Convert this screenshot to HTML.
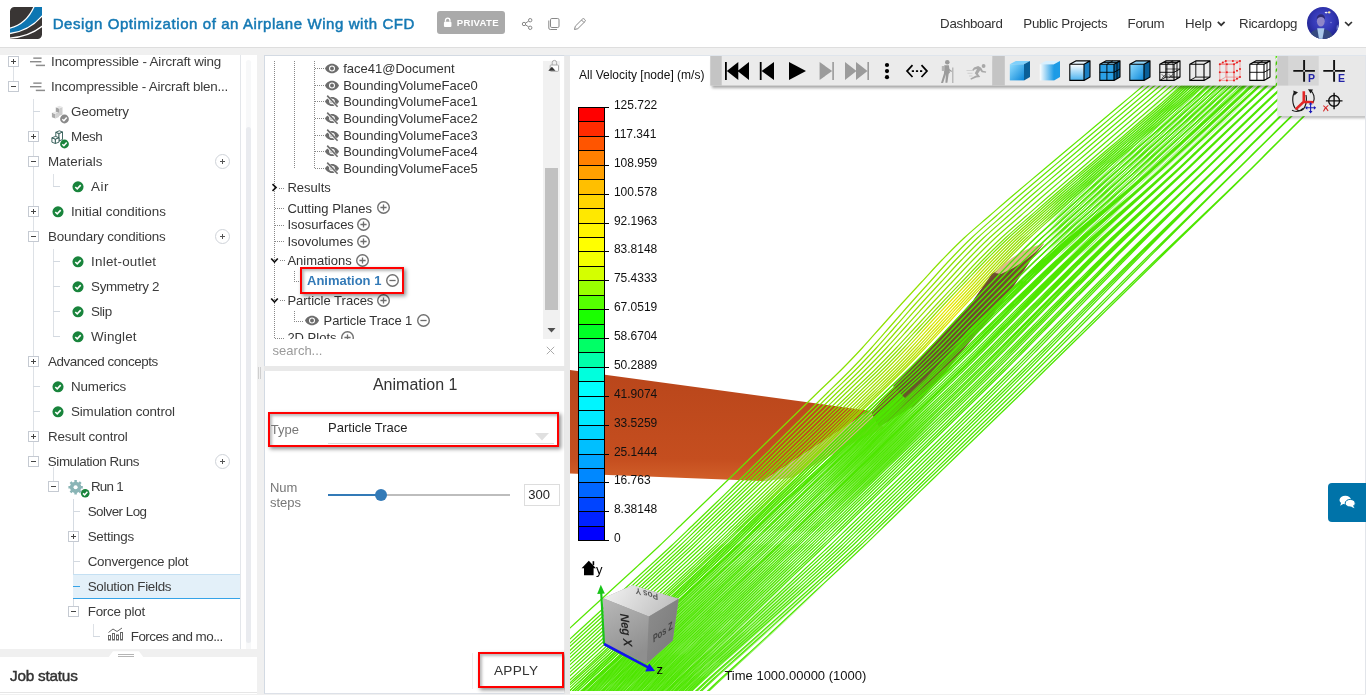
<!DOCTYPE html>
<html>
<head>
<meta charset="utf-8">
<title>Design Optimization of an Airplane Wing with CFD</title>
<style>
*{box-sizing:border-box;margin:0;padding:0}
html,body{width:1366px;height:695px;overflow:hidden;background:#f0f0f0;font-family:"Liberation Sans",sans-serif;color:#333}
.abs{position:absolute}
body>*{will-change:transform}
#hdr{position:absolute;left:0;top:0;width:1366px;height:48px;background:#fff;border-bottom:1px solid #dedede}
#title{position:absolute;left:52px;top:12px;font-size:16.3px;font-weight:bold;color:#1579b4;white-space:nowrap;letter-spacing:-0.35px}
#priv{position:absolute;left:437px;top:11px;width:68px;height:23px;background:#a9a9a9;border-radius:3px;color:#fff;font-size:9.5px;font-weight:bold;letter-spacing:.1px}
#priv span{position:absolute;left:20px;top:6px}
.nav{position:absolute;top:15px;font-size:13.6px;color:#333;white-space:nowrap;letter-spacing:-0.3px}
/* left panel */
#lp{position:absolute;left:0;top:55px;width:256.5px;height:594px;background:#fff;overflow:hidden}
#lp .vline{position:absolute;left:240px;top:0;width:1px;height:595px;background:#e3e6ea}
#lp .thumb{position:absolute;left:246px;top:72px;width:5px;height:516px;background:#e9ebef;border-radius:3px}
#lp .thumbtop{position:absolute;left:246px;top:5px;width:5px;height:600px;background:#f7f8f9;border-radius:3px}
.row{position:absolute;left:0;height:25px;width:240px;font-size:13.6px;color:#3a3a3a;white-space:nowrap;letter-spacing:-0.32px}
.row .t{position:absolute;top:4px}
.box{position:absolute;width:11px;height:11px;border:1px solid #c5cad2;background:#fff}
.box:before{content:"";position:absolute;left:2px;top:4px;width:5px;height:1px;background:#444}
.box.p:after{content:"";position:absolute;left:4px;top:2px;width:1px;height:5px;background:#444}
.chk{position:absolute;width:11px;height:11px;border-radius:50%;background:#19843c}
.chk svg{position:absolute;left:0;top:0}
.plus{position:absolute;left:215px;width:15px;height:15px;border:1px solid #cfd3d9;border-radius:50%;background:#fff}
.plus:before{content:"";position:absolute;left:4px;top:6px;width:5px;height:1px;background:#555}
.plus:after{content:"";position:absolute;left:6px;top:4px;width:1px;height:5px;background:#555}
.tl{position:absolute;background:#d5d9de}
#job{position:absolute;left:0;top:657px;width:257px;height:37px;background:#fff}
#job:after{content:"";position:absolute;left:0;top:35px;width:257px;height:1px;background:#e6e6e6}
#job span{position:absolute;left:10px;top:10px;font-size:14.6px;font-weight:bold;color:#333;letter-spacing:-0.3px}
/* middle panel */
#mp{position:absolute;left:264px;top:55px;width:301px;height:639px;background:#fff;border:1px solid #d3dae3;border-right-color:#ececec;border-bottom-color:#dde1e8}
#gap{position:absolute;left:565px;top:56px;width:5px;height:638px;background:#e9e9e9}
#topline{position:absolute;left:565px;top:55px;width:801px;height:1px;background:#dfe5ec}
#mp .sep{position:absolute;left:-1px;top:309px;width:301px;height:6px;background:#ececec}
.m{position:absolute;font-size:14px;color:#333;white-space:nowrap}
.dot-h{position:absolute;height:1px;background-image:linear-gradient(90deg,#888 50%,transparent 50%);background-size:2px 1px}
.dot-v{position:absolute;width:1px;background-image:linear-gradient(180deg,#888 50%,transparent 50%);background-size:1px 2px}
.redbox{position:absolute;border:2px solid #f00;box-shadow:2px 2px 4px rgba(0,0,0,.45),inset 2px 2px 3px rgba(0,0,0,.28)}
/* viewer */
#vw{position:absolute;left:570px;top:56px;width:796px;height:638px;background:#fff;overflow:hidden}
.lg{position:absolute;left:9px;font-size:12.3px;color:#111}
</style>
</head>
<body>
<div id="hdr">
<svg class="abs" style="left:10px;top:7px" width="32" height="32" viewBox="0 0 32 32">
<defs><clipPath id="lc"><path d="M4.5 0H32V27.5a4.5 4.5 0 0 1-4.5 4.5H0V4.5A4.5 4.5 0 0 1 4.5 0z"/></clipPath></defs>
<g clip-path="url(#lc)"><rect width="32" height="32" fill="#393534"/>
<path d="M-1 21.3 Q16.5 17.5 24.3 -1 H33 V8 Q19 24.5 -1 26.6 Z" fill="#0d76b2" stroke="#fff" stroke-width="1.3"/>
<path d="M-1 31.2 Q19 30 33 18.6" stroke="#fff" stroke-width="1.4" fill="none"/></g></svg>
<span style="position:absolute;left:52.70px;top:15px;font-size:15.0px;line-height:17px;color:#1579b4;white-space:nowrap;letter-spacing:0.583px;-webkit-text-stroke:.5px #1579b4;">Design Optimization of an Airplane Wing with CFD</span>
<div class="abs" style="left:437px;top:11px;width:68px;height:23px;background:#aaa;border-radius:3px"></div>
<svg class="abs" style="left:443px;top:16.6px" width="9.4" height="11.3" viewBox="0 0 10 12"><path d="M2.6 5V3.6a2.4 2.4 0 0 1 4.8 0V5" fill="none" stroke="#fff" stroke-width="1.4"/><rect x="1" y="5" width="8" height="5.6" rx="1" fill="#fff"/></svg>
<span style="position:absolute;left:456.80px;top:17px;font-size:9.6px;line-height:11px;font-weight:bold;color:#fff;white-space:nowrap;letter-spacing:0.270px;">PRIVATE</span>
<svg class="abs" style="left:520.3px;top:15.7px" width="16" height="16" viewBox="0 0 16 16" fill="none" stroke="#888" stroke-width="1"><circle cx="10.2" cy="4.2" r="1.7"/><circle cx="4" cy="8" r="1.7"/><circle cx="10.2" cy="11.8" r="1.7"/><path d="M5.5 7.1 8.7 5.1M5.5 8.9 8.7 10.9"/></svg>
<svg class="abs" style="left:546.3px;top:15.9px" width="16" height="16" viewBox="0 0 16 16" fill="none" stroke="#888" stroke-width="1"><rect x="4.5" y="2.5" width="8.5" height="9" rx="1.3"/><path d="M2.8 4.5V12a1.5 1.5 0 0 0 1.5 1.5H11"/></svg>
<svg class="abs" style="left:572.3px;top:15.7px" width="16" height="16" viewBox="0 0 16 16" fill="none" stroke="#888" stroke-width="1"><path d="M2.5 13.5l.8-3.3 7.2-7.2a1.2 1.2 0 0 1 1.7 0l.8.8a1.2 1.2 0 0 1 0 1.7l-7.2 7.2z M9.5 4l2.5 2.5"/></svg>
<span style="position:absolute;left:940.10px;top:16px;font-size:13.3px;line-height:15px;color:#333;white-space:nowrap;letter-spacing:-0.283px;">Dashboard</span>
<span style="position:absolute;left:1023.30px;top:16px;font-size:13.3px;line-height:15px;color:#333;white-space:nowrap;letter-spacing:-0.262px;">Public Projects</span>
<span style="position:absolute;left:1127.60px;top:16px;font-size:13.3px;line-height:15px;color:#333;white-space:nowrap;letter-spacing:-0.332px;">Forum</span>
<span style="position:absolute;left:1185.10px;top:16px;font-size:13.3px;line-height:15px;color:#333;white-space:nowrap;letter-spacing:-0.185px;">Help</span>
<svg class="abs" style="left:1216px;top:20px" width="11" height="8" viewBox="0 0 11 8"><path d="M1.8 1.8 5.2 5.2 8.6 1.8" fill="none" stroke="#333" stroke-width="1.7"/></svg>
<span style="position:absolute;left:1239.10px;top:16px;font-size:13.3px;line-height:15px;color:#333;white-space:nowrap;letter-spacing:-0.291px;">Ricardopg</span>
<svg class="abs" style="left:1307px;top:7px" width="32" height="32" viewBox="0 0 32 32"><defs><radialGradient id="av" cx=".5" cy=".42" r=".62"><stop offset="0" stop-color="#4a50cc"/><stop offset=".55" stop-color="#3337b4"/><stop offset="1" stop-color="#1c1f86"/></radialGradient><clipPath id="avc"><circle cx="16" cy="16" r="16"/></clipPath><filter id="avb"><feGaussianBlur stdDeviation=".7"/></filter></defs>
<g clip-path="url(#avc)"><rect width="32" height="32" fill="url(#av)"/><g filter="url(#avb)"><path d="M1 33C2 26 6 23.2 10 22.2L13.8 24.5 17.6 22.2C22 23 25.5 26 27 33z" fill="#354a80"/><path d="M10.2 21.2H17.4L15.3 33H12.2z" fill="#aac8e8"/><ellipse cx="13.8" cy="14.2" rx="3.9" ry="5.2" fill="#8f86c8"/><path d="M9.8 12.5C9.6 8.8 11.8 7.3 14 7.3s4.2 1.6 4 5.2c-.8-1.8-2-2.6-4-2.6s-3.4.8-4.2 2.600z" fill="#2d2c78"/><ellipse cx="19.2" cy="5.6" rx="1.5" ry=".8" fill="#fff" opacity=".9"/><ellipse cx="22.2" cy="5.4" rx="1.3" ry="1.1" fill="#f6e7a6"/><circle cx="24" cy="15.5" r=".8" fill="#7d82d8"/><ellipse cx="30.5" cy="21" rx="1" ry="3" fill="#6a78c8"/></g></g></svg>
<svg class="abs" style="left:1344px;top:20px" width="10" height="8" viewBox="0 0 10 8"><path d="M1.1 2 4.5 5.4 7.9 2" fill="none" stroke="#333" stroke-width="1.7"/></svg>
</div>
<div id="lp"><div class="vline"></div><div class="thumbtop"></div><div class="thumb"></div>
<div class="tl" style="left:13px;top:12.0px;width:1px;height:14.0px;background:#dde1e6"></div>
<div class="tl" style="left:33px;top:44.0px;width:1px;height:357.0px;background:#dde1e6"></div>
<div class="tl" style="left:53px;top:119.0px;width:1px;height:13.0px;background:#dde1e6"></div>
<div class="tl" style="left:53px;top:194.0px;width:1px;height:88.0px;background:#dde1e6"></div>
<div class="tl" style="left:73px;top:444.0px;width:1px;height:113.0px;background:#d5dbe2"></div>
<div class="tl" style="left:93px;top:569.0px;width:1px;height:13.0px;background:#dde1e6"></div>
<div class="tl" style="left:53px;top:412.0px;width:1px;height:14.0px;background:#dde1e6"></div>
<div class="abs" style="left:73px;top:519.0px;width:167px;height:25px;background:#e3f0f9;border-top:1px solid #c4e0f3;border-bottom:1px solid #35a3e8"></div>
<span style="position:absolute;left:51.10px;top:-1px;font-size:13.4px;line-height:15px;color:#3b3b3b;white-space:nowrap;letter-spacing:-0.162px;">Incompressible - Aircraft wing</span>
<span style="position:absolute;left:51.10px;top:24px;font-size:13.4px;line-height:15px;color:#3b3b3b;white-space:nowrap;letter-spacing:-0.208px;">Incompressible - Aircraft blen...</span>
<span style="position:absolute;left:71.10px;top:49px;font-size:13.4px;line-height:15px;color:#3b3b3b;white-space:nowrap;letter-spacing:-0.133px;">Geometry</span>
<span style="position:absolute;left:71.10px;top:74px;font-size:13.4px;line-height:15px;color:#3b3b3b;white-space:nowrap;letter-spacing:-0.356px;">Mesh</span>
<span style="position:absolute;left:47.90px;top:99px;font-size:13.4px;line-height:15px;color:#3b3b3b;white-space:nowrap;letter-spacing:0.042px;">Materials</span>
<span style="position:absolute;left:91.10px;top:124px;font-size:13.4px;line-height:15px;color:#3b3b3b;white-space:nowrap;letter-spacing:0.561px;">Air</span>
<span style="position:absolute;left:70.90px;top:149px;font-size:13.4px;line-height:15px;color:#3b3b3b;white-space:nowrap;letter-spacing:-0.020px;">Initial conditions</span>
<span style="position:absolute;left:47.90px;top:174px;font-size:13.4px;line-height:15px;color:#3b3b3b;white-space:nowrap;letter-spacing:-0.190px;">Boundary conditions</span>
<span style="position:absolute;left:91.10px;top:199px;font-size:13.4px;line-height:15px;color:#3b3b3b;white-space:nowrap;letter-spacing:0.221px;">Inlet-outlet</span>
<span style="position:absolute;left:91.10px;top:224px;font-size:13.4px;line-height:15px;color:#3b3b3b;white-space:nowrap;letter-spacing:-0.342px;">Symmetry 2</span>
<span style="position:absolute;left:91.10px;top:249px;font-size:13.4px;line-height:15px;color:#3b3b3b;white-space:nowrap;letter-spacing:-0.449px;">Slip</span>
<span style="position:absolute;left:91.10px;top:274px;font-size:13.4px;line-height:15px;color:#3b3b3b;white-space:nowrap;letter-spacing:0.120px;">Winglet</span>
<span style="position:absolute;left:47.90px;top:299px;font-size:13.4px;line-height:15px;color:#3b3b3b;white-space:nowrap;letter-spacing:-0.404px;">Advanced concepts</span>
<span style="position:absolute;left:71.00px;top:324px;font-size:13.4px;line-height:15px;color:#3b3b3b;white-space:nowrap;letter-spacing:-0.198px;">Numerics</span>
<span style="position:absolute;left:71.00px;top:349px;font-size:13.4px;line-height:15px;color:#3b3b3b;white-space:nowrap;letter-spacing:-0.142px;">Simulation control</span>
<span style="position:absolute;left:47.90px;top:374px;font-size:13.4px;line-height:15px;color:#3b3b3b;white-space:nowrap;letter-spacing:-0.148px;">Result control</span>
<span style="position:absolute;left:47.80px;top:399px;font-size:13.4px;line-height:15px;color:#3b3b3b;white-space:nowrap;letter-spacing:-0.412px;">Simulation Runs</span>
<span style="position:absolute;left:90.90px;top:424px;font-size:13.4px;line-height:15px;color:#3b3b3b;white-space:nowrap;letter-spacing:-0.740px;">Run 1</span>
<span style="position:absolute;left:87.70px;top:449px;font-size:13.4px;line-height:15px;color:#3b3b3b;white-space:nowrap;letter-spacing:-0.518px;">Solver Log</span>
<span style="position:absolute;left:87.70px;top:474px;font-size:13.4px;line-height:15px;color:#3b3b3b;white-space:nowrap;letter-spacing:-0.274px;">Settings</span>
<span style="position:absolute;left:87.70px;top:499px;font-size:13.4px;line-height:15px;color:#3b3b3b;white-space:nowrap;letter-spacing:-0.282px;">Convergence plot</span>
<span style="position:absolute;left:87.70px;top:524px;font-size:13.4px;line-height:15px;color:#3b3b3b;white-space:nowrap;letter-spacing:-0.285px;">Solution Fields</span>
<span style="position:absolute;left:87.70px;top:549px;font-size:13.4px;line-height:15px;color:#3b3b3b;white-space:nowrap;letter-spacing:-0.220px;">Force plot</span>
<span style="position:absolute;left:130.80px;top:574px;font-size:13.4px;line-height:15px;color:#3b3b3b;white-space:nowrap;letter-spacing:-0.536px;">Forces and mo...</span>
<div class="box p" style="left:8px;top:1.0px"></div>
<div class="box" style="left:8px;top:26.0px"></div>
<div class="box p" style="left:28px;top:76.0px"></div>
<div class="box" style="left:28px;top:101.0px"></div>
<div class="box p" style="left:28px;top:151.0px"></div>
<div class="box" style="left:28px;top:176.0px"></div>
<div class="box p" style="left:28px;top:301.0px"></div>
<div class="box p" style="left:28px;top:376.0px"></div>
<div class="box" style="left:28px;top:401.0px"></div>
<div class="box" style="left:48px;top:426.0px"></div>
<div class="box p" style="left:68px;top:476.0px"></div>
<div class="box" style="left:68px;top:551.0px"></div>
<svg class="abs" style="left:29px;top:0.5px" width="18" height="12" viewBox="0 0 18 12"><path d="M4.3 2.1H12.6M1 5.8H12.4" stroke="#5a5a5a" stroke-width="1"/><path d="M6.8 9.4H16" stroke="#8d8d8d" stroke-width="1.5"/></svg>
<svg class="abs" style="left:29px;top:25.5px" width="18" height="12" viewBox="0 0 18 12"><path d="M4.3 2.1H12.6M1 5.8H12.4" stroke="#5a5a5a" stroke-width="1"/><path d="M6.8 9.4H16" stroke="#8d8d8d" stroke-width="1.5"/></svg>
<div class="plus" style="top:99.0px"></div>
<div class="plus" style="top:174.0px"></div>
<div class="plus" style="top:399.0px"></div>
<svg class="abs" style="left:72px;top:125.5px" width="12" height="12" viewBox="0 0 12 12"><circle cx="6" cy="5.8" r="5.55" fill="#19843c"/><path d="M3.3 6 5.2 7.8 8.7 4.1" fill="none" stroke="#fff" stroke-width="1.6"/></svg>
<svg class="abs" style="left:52px;top:150.5px" width="12" height="12" viewBox="0 0 12 12"><circle cx="6" cy="5.8" r="5.55" fill="#19843c"/><path d="M3.3 6 5.2 7.8 8.7 4.1" fill="none" stroke="#fff" stroke-width="1.6"/></svg>
<svg class="abs" style="left:72px;top:200.5px" width="12" height="12" viewBox="0 0 12 12"><circle cx="6" cy="5.8" r="5.55" fill="#19843c"/><path d="M3.3 6 5.2 7.8 8.7 4.1" fill="none" stroke="#fff" stroke-width="1.6"/></svg>
<svg class="abs" style="left:72px;top:225.5px" width="12" height="12" viewBox="0 0 12 12"><circle cx="6" cy="5.8" r="5.55" fill="#19843c"/><path d="M3.3 6 5.2 7.8 8.7 4.1" fill="none" stroke="#fff" stroke-width="1.6"/></svg>
<svg class="abs" style="left:72px;top:250.5px" width="12" height="12" viewBox="0 0 12 12"><circle cx="6" cy="5.8" r="5.55" fill="#19843c"/><path d="M3.3 6 5.2 7.8 8.7 4.1" fill="none" stroke="#fff" stroke-width="1.6"/></svg>
<svg class="abs" style="left:72px;top:275.5px" width="12" height="12" viewBox="0 0 12 12"><circle cx="6" cy="5.8" r="5.55" fill="#19843c"/><path d="M3.3 6 5.2 7.8 8.7 4.1" fill="none" stroke="#fff" stroke-width="1.6"/></svg>
<svg class="abs" style="left:52px;top:325.5px" width="12" height="12" viewBox="0 0 12 12"><circle cx="6" cy="5.8" r="5.55" fill="#19843c"/><path d="M3.3 6 5.2 7.8 8.7 4.1" fill="none" stroke="#fff" stroke-width="1.6"/></svg>
<svg class="abs" style="left:52px;top:350.5px" width="12" height="12" viewBox="0 0 12 12"><circle cx="6" cy="5.8" r="5.55" fill="#19843c"/><path d="M3.3 6 5.2 7.8 8.7 4.1" fill="none" stroke="#fff" stroke-width="1.6"/></svg>
<div class="tl" style="left:33px;top:56.0px;width:7px;height:1px;background:#d3d9e0"></div>
<div class="tl" style="left:33px;top:331.0px;width:7px;height:1px;background:#d3d9e0"></div>
<div class="tl" style="left:33px;top:356.0px;width:7px;height:1px;background:#d3d9e0"></div>
<div class="tl" style="left:53px;top:131.0px;width:7px;height:1px;background:#d3d9e0"></div>
<div class="tl" style="left:53px;top:206.0px;width:7px;height:1px;background:#d3d9e0"></div>
<div class="tl" style="left:53px;top:231.0px;width:7px;height:1px;background:#d3d9e0"></div>
<div class="tl" style="left:53px;top:256.0px;width:7px;height:1px;background:#d3d9e0"></div>
<div class="tl" style="left:53px;top:281.0px;width:7px;height:1px;background:#d3d9e0"></div>
<div class="tl" style="left:73px;top:456.0px;width:7px;height:1px;background:#d3d9e0"></div>
<div class="tl" style="left:73px;top:506.0px;width:7px;height:1px;background:#d3d9e0"></div>
<div class="tl" style="left:73px;top:531.0px;width:7px;height:1px;background:#35a3e8"></div>
<div class="tl" style="left:93px;top:581.0px;width:7px;height:1px;background:#d3d9e0"></div>
<svg class="abs" style="left:51px;top:46.5px" width="20" height="23" viewBox="0 0 20 23">
<path d="M4.8 5.3 8 6.5V14L4.8 12.8z" fill="#a3a3a3"/><path d="M8 6.5 11.5 5V12.5L8 14z" fill="#cdcdcd"/><path d="M4.8 5.3 8.3 3.8 11.5 5 8 6.5z" fill="#e6e6e6"/>
<path d="M.9 10.8 4.4 12.1V16.5L.9 15.2z" fill="#ababab"/><path d="M4.4 12.1 8 10.7V15.1L4.4 16.5z" fill="#d2d2d2"/><path d="M.9 10.8 4.5 9.4 8 10.7 4.4 12.1z" fill="#e9e9e9"/>
<circle cx="13.5" cy="17" r="4.4" fill="#8a8a8a"/><path d="M11.3 17.2 12.9 18.7 15.7 15.5" fill="none" stroke="#fff" stroke-width="1.5"/></svg>
<svg class="abs" style="left:51px;top:71.5px" width="20" height="23" viewBox="0 0 20 23">
<g fill="#fff" stroke="#2f5953" stroke-width=".9" stroke-linejoin="round"><path d="M4.8 5.3 8 6.5V14L4.8 12.8z"/><path d="M8 6.5 11.5 5V12.5L8 14z"/><path d="M4.8 5.3 8.3 3.8 11.5 5 8 6.5z"/><path d="M.9 10.8 4.4 12.1V16.5L.9 15.2z"/><path d="M4.4 12.1 8 10.7V15.1L4.4 16.5z"/><path d="M.9 10.8 4.5 9.4 8 10.7 4.4 12.1z"/></g>
<circle cx="13.5" cy="17" r="4.4" fill="#19843c"/><path d="M11.3 17.2 12.9 18.7 15.7 15.5" fill="none" stroke="#fff" stroke-width="1.5"/></svg>
<svg class="abs" style="left:67px;top:421.5px" width="24" height="22" viewBox="0 0 24 22">
<g transform="translate(8.6,10.3) scale(.9)"><circle r="4.7" fill="none" stroke="#8ab5b6" stroke-width="3.2"/><g stroke="#8ab5b6" stroke-width="2.8"><path d="M0 -8V8M-8 0H8M-5.7 -5.7 5.7 5.7M-5.7 5.7 5.7 -5.7"/></g><circle r="2.3" fill="#fff"/><circle r="4.4" fill="none" stroke="#8ab5b6" stroke-width="2.6"/></g>
<circle cx="18.2" cy="16.2" r="4.3" fill="#19843c"/><path d="M16 16.4 17.6 17.9 20.4 14.7" fill="none" stroke="#fff" stroke-width="1.5"/></svg>
<svg class="abs" style="left:107px;top:572.2px" width="17" height="14" viewBox="0 0 17 14" fill="none" stroke="#666" stroke-width="1">
<rect x="1.5" y="8.5" width="2" height="4.5"/><rect x="5.5" y="6.5" width="2" height="6.5"/><rect x="9.5" y="8" width="2" height="5"/><rect x="13.5" y="5.5" width="2" height="7.5"/><path d="M1.5 5.5 6 2 10 4.5 15 1"/></svg>
</div>
<svg class="abs" style="left:108px;top:650px" width="36" height="8" viewBox="0 0 36 8"><path d="M0 8 5 1.2H31L36 8z" fill="#fff"/><path d="M10 4.5H26M10 6.500H26" stroke="#b5b5b5" stroke-width="1" shape-rendering="crispEdges"/></svg>
<div id="job"></div>
<span style="position:absolute;left:9.90px;top:667px;font-size:15.3px;line-height:17px;color:#333;white-space:nowrap;letter-spacing:-0.215px;-webkit-text-stroke:.45px #333;">Job status</span>
<div id="mp">
<div class="abs" style="left:0;top:0;width:299px;height:282.5px;overflow:hidden">
<div class="dot-v" style="left:9px;top:5.0px;height:279.0px"></div>
<div class="dot-v" style="left:29px;top:5.0px;height:107.0px"></div>
<div class="dot-v" style="left:49px;top:5.0px;height:108.0px"></div>
<div class="dot-h" style="left:50px;top:11.9px;width:10px"></div>
<svg class="abs" style="left:60px;top:6.5px;overflow:visible" width="14" height="11" viewBox="0 0 14 11"><path d="M7 .7C3.4 .7 .9 3.3 0 5.500 .9 7.700 3.400 10.300 7 10.300s6.100-2.600 7-4.800C13.100 3.300 10.600 .700 7 .700z" fill="#6c6c6c"/><circle cx="7" cy="5.500" r="3" fill="#fff"/><circle cx="7" cy="5.500" r="1.900" fill="#6c6c6c"/></svg>
<span style="position:absolute;left:78.20px;top:5px;font-size:13px;line-height:15px;color:#333;white-space:nowrap;">face41@Document</span>
<div class="dot-h" style="left:50px;top:28.9px;width:10px"></div>
<svg class="abs" style="left:60px;top:23.5px;overflow:visible" width="14" height="11" viewBox="0 0 14 11"><path d="M7 .7C3.4 .7 .9 3.3 0 5.500 .9 7.700 3.400 10.300 7 10.300s6.100-2.600 7-4.800C13.100 3.300 10.600 .700 7 .700z" fill="#6c6c6c"/><circle cx="7" cy="5.500" r="3" fill="#fff"/><circle cx="7" cy="5.500" r="1.900" fill="#6c6c6c"/></svg>
<span style="position:absolute;left:78.20px;top:22px;font-size:13px;line-height:15px;color:#333;white-space:nowrap;">BoundingVolumeFace0</span>
<div class="dot-h" style="left:50px;top:44.9px;width:10px"></div>
<svg class="abs" style="left:60px;top:39.5px;overflow:visible" width="14" height="11" viewBox="0 0 14 11"><path d="M7 1C3.400 1 .900 3.500 0 5.500 .900 7.500 3.400 10 7 10s6.100-2.500 7-4.500C13.100 3.500 10.600 1 7 1z" fill="#6c6c6c"/><circle cx="7" cy="5.500" r="2.800" fill="#fff"/><circle cx="7" cy="5.500" r="1.700" fill="#6c6c6c"/><path d="M1.300 -.800 13 11.400" stroke="#fff" stroke-width="2.800"/><path d="M2.200 -.400 12.600 10.800" stroke="#6c6c6c" stroke-width="1.600"/></svg>
<span style="position:absolute;left:78.20px;top:38px;font-size:13px;line-height:15px;color:#333;white-space:nowrap;">BoundingVolumeFace1</span>
<div class="dot-h" style="left:50px;top:61.9px;width:10px"></div>
<svg class="abs" style="left:60px;top:56.5px;overflow:visible" width="14" height="11" viewBox="0 0 14 11"><path d="M7 1C3.400 1 .900 3.500 0 5.500 .900 7.500 3.400 10 7 10s6.100-2.500 7-4.500C13.100 3.500 10.600 1 7 1z" fill="#6c6c6c"/><circle cx="7" cy="5.500" r="2.800" fill="#fff"/><circle cx="7" cy="5.500" r="1.700" fill="#6c6c6c"/><path d="M1.300 -.800 13 11.400" stroke="#fff" stroke-width="2.800"/><path d="M2.200 -.400 12.600 10.800" stroke="#6c6c6c" stroke-width="1.600"/></svg>
<span style="position:absolute;left:78.20px;top:55px;font-size:13px;line-height:15px;color:#333;white-space:nowrap;">BoundingVolumeFace2</span>
<div class="dot-h" style="left:50px;top:78.9px;width:10px"></div>
<svg class="abs" style="left:60px;top:73.5px;overflow:visible" width="14" height="11" viewBox="0 0 14 11"><path d="M7 1C3.400 1 .900 3.500 0 5.500 .900 7.500 3.400 10 7 10s6.100-2.500 7-4.500C13.100 3.500 10.600 1 7 1z" fill="#6c6c6c"/><circle cx="7" cy="5.500" r="2.800" fill="#fff"/><circle cx="7" cy="5.500" r="1.700" fill="#6c6c6c"/><path d="M1.300 -.800 13 11.400" stroke="#fff" stroke-width="2.800"/><path d="M2.200 -.400 12.600 10.800" stroke="#6c6c6c" stroke-width="1.600"/></svg>
<span style="position:absolute;left:78.20px;top:72px;font-size:13px;line-height:15px;color:#333;white-space:nowrap;">BoundingVolumeFace3</span>
<div class="dot-h" style="left:50px;top:94.9px;width:10px"></div>
<svg class="abs" style="left:60px;top:89.5px;overflow:visible" width="14" height="11" viewBox="0 0 14 11"><path d="M7 1C3.400 1 .900 3.500 0 5.500 .900 7.500 3.400 10 7 10s6.100-2.500 7-4.500C13.100 3.500 10.600 1 7 1z" fill="#6c6c6c"/><circle cx="7" cy="5.500" r="2.800" fill="#fff"/><circle cx="7" cy="5.500" r="1.700" fill="#6c6c6c"/><path d="M1.300 -.800 13 11.400" stroke="#fff" stroke-width="2.800"/><path d="M2.200 -.400 12.600 10.800" stroke="#6c6c6c" stroke-width="1.600"/></svg>
<span style="position:absolute;left:78.20px;top:88px;font-size:13px;line-height:15px;color:#333;white-space:nowrap;">BoundingVolumeFace4</span>
<div class="dot-h" style="left:50px;top:111.9px;width:10px"></div>
<svg class="abs" style="left:60px;top:106.5px;overflow:visible" width="14" height="11" viewBox="0 0 14 11"><path d="M7 1C3.400 1 .900 3.500 0 5.500 .900 7.500 3.400 10 7 10s6.100-2.500 7-4.500C13.100 3.500 10.600 1 7 1z" fill="#6c6c6c"/><circle cx="7" cy="5.500" r="2.800" fill="#fff"/><circle cx="7" cy="5.500" r="1.700" fill="#6c6c6c"/><path d="M1.300 -.800 13 11.400" stroke="#fff" stroke-width="2.800"/><path d="M2.200 -.400 12.600 10.800" stroke="#6c6c6c" stroke-width="1.600"/></svg>
<span style="position:absolute;left:78.20px;top:105px;font-size:13px;line-height:15px;color:#333;white-space:nowrap;">BoundingVolumeFace5</span>
<svg class="abs" style="left:5.8px;top:127.1px" width="7" height="9" viewBox="0 0 7 9"><path d="M1.5 1.2 5 4.5 1.5 7.8" fill="none" stroke="#111" stroke-width="1.7"/></svg>
<div class="dot-h" style="left:14px;top:131.5px;width:6px"></div>
<span style="position:absolute;left:22.40px;top:124px;font-size:13px;line-height:15px;color:#333;white-space:nowrap;">Results</span>
<div class="dot-h" style="left:10px;top:152.0px;width:10px"></div>
<span style="position:absolute;left:22.40px;top:145px;font-size:13px;line-height:15px;color:#333;white-space:nowrap;">Cutting Planes</span>
<svg class="abs" style="left:111.5px;top:145.4px" width="13" height="13" viewBox="0 0 13 13"><circle cx="6.5" cy="6.5" r="5.8" fill="#fff" stroke="#707070" stroke-width="1.4"/><path d="M3.4 6.5H9.6M6.5 3.4V9.6" stroke="#6e6e6e" stroke-width="1.3"/></svg>
<div class="dot-h" style="left:10px;top:168.5px;width:10px"></div>
<span style="position:absolute;left:22.40px;top:161px;font-size:13px;line-height:15px;color:#333;white-space:nowrap;">Isosurfaces</span>
<svg class="abs" style="left:92.4px;top:162.2px" width="13" height="13" viewBox="0 0 13 13"><circle cx="6.5" cy="6.5" r="5.8" fill="#fff" stroke="#707070" stroke-width="1.4"/><path d="M3.4 6.5H9.6M6.5 3.4V9.6" stroke="#6e6e6e" stroke-width="1.3"/></svg>
<div class="dot-h" style="left:10px;top:185.0px;width:10px"></div>
<span style="position:absolute;left:22.40px;top:178px;font-size:13px;line-height:15px;color:#333;white-space:nowrap;">Isovolumes</span>
<svg class="abs" style="left:92.4px;top:178.5px" width="13" height="13" viewBox="0 0 13 13"><circle cx="6.5" cy="6.5" r="5.8" fill="#fff" stroke="#707070" stroke-width="1.4"/><path d="M3.4 6.5H9.6M6.5 3.4V9.6" stroke="#6e6e6e" stroke-width="1.3"/></svg>
<svg class="abs" style="left:5.0px;top:200.8px" width="9" height="7" viewBox="0 0 9 7"><path d="M1.2 1.5 4.5 5 7.8 1.5" fill="none" stroke="#111" stroke-width="1.7"/></svg>
<div class="dot-h" style="left:15px;top:204.0px;width:5px"></div>
<span style="position:absolute;left:22.40px;top:197px;font-size:13px;line-height:15px;color:#333;white-space:nowrap;">Animations</span>
<svg class="abs" style="left:90.6px;top:197.6px" width="13" height="13" viewBox="0 0 13 13"><circle cx="6.5" cy="6.5" r="5.8" fill="#fff" stroke="#707070" stroke-width="1.4"/><path d="M3.4 6.5H9.6M6.5 3.4V9.6" stroke="#6e6e6e" stroke-width="1.3"/></svg>
<div class="dot-v" style="left:29px;top:215.0px;height:10.0px"></div>
<div class="dot-h" style="left:29px;top:225.0px;width:6px"></div>
<span style="position:absolute;left:42.00px;top:217px;font-size:13px;line-height:15px;font-weight:bold;color:#337ab7;white-space:nowrap;">Animation 1</span>
<svg class="abs" style="left:120.6px;top:217.8px" width="13" height="13" viewBox="0 0 13 13"><circle cx="6.5" cy="6.5" r="5.8" fill="#fff" stroke="#707070" stroke-width="1.4"/><path d="M3.4 6.5H9.6" stroke="#6e6e6e" stroke-width="1.3"/></svg>
<svg class="abs" style="left:5.0px;top:240.8px" width="9" height="7" viewBox="0 0 9 7"><path d="M1.2 1.5 4.5 5 7.8 1.5" fill="none" stroke="#111" stroke-width="1.7"/></svg>
<div class="dot-h" style="left:15px;top:244.0px;width:5px"></div>
<span style="position:absolute;left:22.40px;top:237px;font-size:13px;line-height:15px;color:#333;white-space:nowrap;">Particle Traces</span>
<svg class="abs" style="left:112.3px;top:237.5px" width="13" height="13" viewBox="0 0 13 13"><circle cx="6.5" cy="6.5" r="5.8" fill="#fff" stroke="#707070" stroke-width="1.4"/><path d="M3.4 6.5H9.6M6.5 3.4V9.6" stroke="#6e6e6e" stroke-width="1.3"/></svg>
<div class="dot-v" style="left:29px;top:255.0px;height:10.0px"></div>
<div class="dot-h" style="left:29px;top:265.0px;width:10px"></div>
<svg class="abs" style="left:40px;top:258.8px;overflow:visible" width="14" height="11" viewBox="0 0 14 11"><path d="M7 .7C3.4 .7 .9 3.3 0 5.500 .9 7.700 3.400 10.300 7 10.300s6.100-2.600 7-4.800C13.100 3.300 10.600 .700 7 .700z" fill="#6c6c6c"/><circle cx="7" cy="5.500" r="3" fill="#fff"/><circle cx="7" cy="5.500" r="1.900" fill="#6c6c6c"/></svg>
<span style="position:absolute;left:58.60px;top:257px;font-size:13px;line-height:15px;color:#333;white-space:nowrap;letter-spacing:-0.108px;">Particle Trace 1</span>
<svg class="abs" style="left:152.4px;top:257.8px" width="13" height="13" viewBox="0 0 13 13"><circle cx="6.5" cy="6.5" r="5.8" fill="#fff" stroke="#707070" stroke-width="1.4"/><path d="M3.4 6.5H9.6" stroke="#6e6e6e" stroke-width="1.3"/></svg>
<div class="dot-h" style="left:10px;top:282.0px;width:10px"></div>
<span style="position:absolute;left:22.40px;top:274px;font-size:13px;line-height:15px;color:#333;white-space:nowrap;">2D Plots</span>
<svg class="abs" style="left:76.0px;top:275.3px" width="13" height="13" viewBox="0 0 13 13"><circle cx="6.5" cy="6.5" r="5.8" fill="#fff" stroke="#707070" stroke-width="1.4"/><path d="M3.4 6.5H9.6M6.5 3.4V9.6" stroke="#6e6e6e" stroke-width="1.3"/></svg>
</div>
<div class="redbox" style="left:35px;top:211px;width:104px;height:27px"></div>
<div class="abs" style="left:278px;top:5px;width:17px;height:278px;background:#f1f1f1"></div>
<div class="abs" style="left:280px;top:112px;width:13px;height:142px;background:#c1c1c1"></div>
<svg class="abs" style="left:282px;top:271px" width="9" height="6" viewBox="0 0 9 6"><path d="M.5 1H8.5L4.5 5.5z" fill="#505050"/></svg>
<svg class="abs" style="left:282px;top:3px" width="14" height="14" viewBox="0 0 14 14"><path d="M5.2 6V3.6a2.2 2.2 0 0 1 4.4 0V6" fill="none" stroke="#aaa" stroke-width="1"/><rect x="3.2" y="6" width="8.3" height="6.3" rx=".8" fill="#fff" stroke="#aaa" stroke-width="1"/><path d="M1.3 11.8H8.5L4.9 7.8z" fill="#333"/></svg>
<span style="position:absolute;left:7.60px;top:287px;font-size:13px;line-height:15px;color:#9a9a9a;white-space:nowrap;">search...</span>
<svg class="abs" style="left:280.5px;top:289.5px" width="9" height="9" viewBox="0 0 9 9"><path d="M.8.8 8.2 8.2M8.2.8.8 8.2" stroke="#aaa" stroke-width="1"/></svg>
<div class="abs" style="left:-1px;top:310px;width:301px;height:5px;background:#e9e9e9"></div>
<span style="position:absolute;left:107.95px;top:320px;font-size:16px;line-height:17px;color:#333;white-space:nowrap;">Animation 1</span>
<div class="redbox" style="left:3px;top:356px;width:290.5px;height:35px"></div>
<span style="position:absolute;left:5.70px;top:366px;font-size:13px;line-height:15px;color:#777;white-space:nowrap;">Type</span>
<span style="position:absolute;left:63.10px;top:364px;font-size:13px;line-height:15px;color:#222;white-space:nowrap;">Particle Trace</span>
<div class="abs" style="left:63px;top:387px;width:226px;height:1px;background:#dcdcdc"></div>
<svg class="abs" style="left:270px;top:377px" width="14" height="8" viewBox="0 0 14 8"><path d="M0 0H14L7 7.4z" fill="#e0e0e0"/></svg>
<span style="position:absolute;left:4.90px;top:424px;font-size:13px;line-height:15px;color:#777;white-space:nowrap;">Num</span>
<span style="position:absolute;left:4.90px;top:439px;font-size:13px;line-height:15px;color:#777;white-space:nowrap;">steps</span>
<div class="abs" style="left:63px;top:438px;width:182px;height:2px;background:#bdbdbd"></div>
<div class="abs" style="left:63px;top:438px;width:53px;height:2px;background:#337ab7"></div>
<div class="abs" style="left:109.69999999999999px;top:432.7px;width:12.6px;height:12.6px;border-radius:50%;background:#337ab7"></div>
<div class="abs" style="left:259px;top:427.5px;width:36px;height:22.5px;border:1px solid #ddd;background:#fff"></div>
<span style="position:absolute;left:263.20px;top:431px;font-size:13px;line-height:15px;color:#222;white-space:nowrap;">300</span>
<div class="abs" style="left:207px;top:597px;width:1px;height:36px;background:#eee"></div>
<div class="redbox" style="left:213px;top:595.5px;width:86px;height:36px"></div>
<span style="position:absolute;left:229.00px;top:607px;font-size:13.6px;line-height:15px;color:#333;white-space:nowrap;letter-spacing:0.290px;">APPLY</span>
</div>
<div class="abs" style="left:258px;top:367px;width:1px;height:12px;background:#cfcfcf"></div><div class="abs" style="left:260px;top:367px;width:1px;height:12px;background:#cfcfcf"></div>
<div id="gap"></div><div id="topline"></div>
<div id="vw">
<svg class="abs" style="left:0;top:0" width="796" height="635" viewBox="570 56 796 635">
<defs>
<linearGradient id="wg" x1="0" y1="0" x2="0" y2="1"><stop offset="0" stop-color="#b9461b"/><stop offset=".8" stop-color="#c54e1f"/><stop offset="1" stop-color="#d2602a"/></linearGradient>
<linearGradient id="yl" gradientUnits="userSpaceOnUse" x1="730" y1="490" x2="1080" y2="190"><stop offset="0" stop-color="#55e600"/><stop offset=".15" stop-color="#84e000"/><stop offset=".45" stop-color="#a8e000"/><stop offset=".62" stop-color="#e8e600"/><stop offset=".78" stop-color="#a0e000"/><stop offset="1" stop-color="#55e600"/></linearGradient>
<linearGradient id="lm" gradientUnits="userSpaceOnUse" x1="730" y1="490" x2="1080" y2="190"><stop offset="0" stop-color="#55e600"/><stop offset=".15" stop-color="#80e000"/><stop offset=".6" stop-color="#92e000"/><stop offset="1" stop-color="#5ee600"/></linearGradient>
<linearGradient id="mg" gradientUnits="userSpaceOnUse" x1="760" y1="520" x2="640" y2="660"><stop offset="0" stop-color="#000"/><stop offset="1" stop-color="#fff"/></linearGradient>
<mask id="mk" maskUnits="userSpaceOnUse" x="560" y="480" width="320" height="220"><rect x="560" y="480" width="320" height="220" fill="url(#mg)"/></mask>
<filter id="b6" x="-20%" y="-20%" width="140%" height="140%"><feGaussianBlur stdDeviation="5"/></filter>
<mask id="wm" maskUnits="userSpaceOnUse" x="1000" y="40" width="330" height="260"><path d="M1052 252 1056 205 1104 158 1143 126 1174 90 1200 50H1282L1226 120 1130 190 1092 252z" fill="#fff" filter="url(#b6)"/></mask>
<radialGradient id="mg2" gradientUnits="userSpaceOnUse" cx="868" cy="440" r="80"><stop offset="0" stop-color="#fff"/><stop offset=".5" stop-color="#bbb"/><stop offset="1" stop-color="#000"/></radialGradient>
<mask id="mk2" maskUnits="userSpaceOnUse" x="760" y="290" width="270" height="270"><rect x="760" y="290" width="270" height="270" fill="url(#mg2)"/></mask>
<pattern id="hw" width="2.1" height="8" patternUnits="userSpaceOnUse" patternTransform="rotate(46.5)"><rect x="0" y="0" width="1.05" height="8" fill="#4ee600"/></pattern>
</defs>
<path d="M570 370.1 869.6 410.7 763 481 570 473.5z" fill="url(#wg)"/>
<path d="M762 481.5 869.6 410.2 884 428 847 446 793 477.5z" fill="#cdb07a" opacity=".9"/>
<path d="M1044 243.4 1031 260 1009.5 292.6 992 316 966 346.6 940 379 914 406 879 427 871 412 901.6 379 923 355 951 325 972.8 301 992 274z" fill="#74502f"/>
<path d="M571.4 700.0C575.3 696.3 587.1 685.3 595.0 678.0C602.9 670.7 610.9 663.3 618.8 656.0C626.7 648.7 634.6 641.3 642.5 634.0C650.3 626.7 658.2 619.3 666.0 612.0C673.9 604.7 681.7 597.3 689.6 590.0C697.5 582.7 705.4 575.3 713.3 568.0C721.2 560.7 729.1 553.3 736.9 546.0C744.6 538.7 752.1 531.3 759.7 524.0C767.3 516.7 774.7 509.3 782.5 502.0C790.3 494.7 798.4 487.3 806.3 480.0C814.2 472.7 822.1 465.3 830.1 458.0C838.0 450.7 845.9 443.3 853.8 436.0C861.7 428.7 869.6 421.3 877.5 414.0C885.4 406.7 893.4 399.3 901.3 392.0C909.2 384.7 917.3 377.3 925.0 370.0C932.8 362.7 940.3 355.3 947.7 348.0C955.2 340.7 962.3 333.3 969.6 326.0C976.9 318.7 984.1 311.3 991.5 304.0C998.9 296.7 1006.3 289.3 1013.8 282.0C1021.2 274.7 1028.5 267.3 1036.1 260.0C1043.8 252.7 1051.5 245.3 1059.6 238.0C1067.7 230.7 1076.3 223.3 1084.7 216.0C1093.1 208.7 1101.5 201.3 1109.9 194.0C1118.3 186.7 1126.6 179.3 1134.9 172.0C1143.1 164.7 1151.3 157.3 1159.5 150.0C1167.7 142.7 1176.0 135.3 1184.2 128.0C1192.4 120.7 1200.6 113.3 1208.7 106.0C1216.8 98.7 1225.0 91.3 1233.1 84.0C1241.1 76.7 1249.1 69.3 1257.2 62.0C1265.2 54.7 1277.3 43.7 1281.3 40.0M573.4 700.0C577.3 696.3 589.0 685.3 596.9 678.0C604.8 670.7 612.9 663.3 620.8 656.0C628.7 648.7 636.6 641.3 644.5 634.0C652.4 626.7 660.2 619.3 668.1 612.0C676.0 604.7 683.8 597.3 691.7 590.0C699.6 582.7 707.5 575.3 715.4 568.0C723.3 560.7 731.3 553.3 739.0 546.0C746.7 538.7 754.2 531.3 761.8 524.0C769.4 516.7 776.8 509.3 784.6 502.0C792.4 494.7 800.7 487.3 808.7 480.0C816.7 472.7 824.7 465.3 832.7 458.0C840.7 450.7 848.7 443.3 856.8 436.0C864.8 428.7 872.8 421.3 880.8 414.0C888.8 406.7 896.8 399.3 904.9 392.0C912.9 384.7 921.1 377.3 928.9 370.0C936.7 362.7 944.4 355.3 951.9 348.0C959.5 340.7 966.7 333.3 974.1 326.0C981.6 318.7 988.9 311.3 996.4 304.0C1003.9 296.7 1011.5 289.3 1019.0 282.0C1026.6 274.7 1034.0 267.3 1041.8 260.0C1049.5 252.7 1057.4 245.3 1065.5 238.0C1073.7 230.7 1082.4 223.3 1090.9 216.0C1099.4 208.7 1107.9 201.3 1116.3 194.0C1124.7 186.7 1133.0 179.3 1141.3 172.0C1149.5 164.7 1157.5 157.3 1165.7 150.0C1173.8 142.7 1182.0 135.3 1190.1 128.0C1198.2 120.7 1206.3 113.3 1214.4 106.0C1222.5 98.7 1230.6 91.3 1238.7 84.0C1246.7 76.7 1254.7 69.3 1262.7 62.0C1270.7 54.7 1282.8 43.7 1286.8 40.0M576.9 700.0C580.9 696.3 592.6 685.3 600.5 678.0C608.4 670.7 616.4 663.3 624.3 656.0C632.2 648.7 640.0 641.3 647.8 634.0C655.6 626.7 663.4 619.3 671.2 612.0C679.0 604.7 686.8 597.3 694.7 590.0C702.5 582.7 710.4 575.3 718.2 568.0C726.1 560.7 734.1 553.3 741.8 546.0C749.5 538.7 757.0 531.3 764.6 524.0C772.2 516.7 779.8 509.3 787.4 502.0C795.0 494.7 802.7 487.3 810.3 480.0C818.0 472.7 825.7 465.3 833.4 458.0C841.1 450.7 848.8 443.3 856.6 436.0C864.4 428.7 872.3 421.3 880.1 414.0C888.0 406.7 896.0 399.3 903.9 392.0C911.9 384.7 920.0 377.3 927.9 370.0C935.7 362.7 943.4 355.3 951.1 348.0C958.7 340.7 966.1 333.3 973.6 326.0C981.2 318.7 988.8 311.3 996.5 304.0C1004.2 296.7 1012.1 289.3 1020.0 282.0C1027.8 274.7 1035.6 267.3 1043.7 260.0C1051.9 252.7 1060.1 245.3 1068.8 238.0C1077.4 230.7 1086.6 223.3 1095.6 216.0C1104.5 208.7 1113.8 201.3 1122.6 194.0C1131.3 186.7 1139.8 179.3 1148.1 172.0C1156.4 164.7 1164.3 157.3 1172.4 150.0C1180.5 142.7 1188.6 135.3 1196.6 128.0C1204.7 120.7 1212.8 113.3 1220.8 106.0C1228.9 98.7 1237.0 91.3 1245.0 84.0C1253.0 76.7 1260.9 69.3 1268.9 62.0C1276.9 54.7 1288.8 43.7 1292.8 40.0M579.2 700.0C583.2 696.3 594.9 685.3 602.8 678.0C610.7 670.7 618.7 663.3 626.6 656.0C634.6 648.7 642.4 641.3 650.3 634.0C658.2 626.7 666.0 619.3 673.8 612.0C681.7 604.7 689.5 597.3 697.4 590.0C705.3 582.7 713.2 575.3 721.0 568.0C728.9 560.7 736.9 553.3 744.6 546.0C752.3 538.7 759.8 531.3 767.4 524.0C775.0 516.7 782.6 509.3 790.2 502.0C797.8 494.7 805.5 487.3 813.1 480.0C820.8 472.7 828.4 465.3 836.1 458.0C843.8 450.7 851.6 443.3 859.3 436.0C867.1 428.7 874.9 421.3 882.8 414.0C890.6 406.7 898.5 399.3 906.4 392.0C914.4 384.7 922.5 377.3 930.3 370.0C938.1 362.7 945.7 355.3 953.3 348.0C960.9 340.7 968.2 333.3 975.7 326.0C983.3 318.7 990.8 311.3 998.4 304.0C1006.1 296.7 1013.9 289.3 1021.7 282.0C1029.5 274.7 1037.2 267.3 1045.2 260.0C1053.3 252.7 1061.5 245.3 1070.0 238.0C1078.5 230.7 1087.6 223.3 1096.5 216.0C1105.4 208.7 1114.5 201.3 1123.2 194.0C1131.9 186.7 1140.3 179.3 1148.6 172.0C1156.9 164.7 1164.8 157.3 1172.8 150.0C1180.9 142.7 1189.0 135.3 1197.1 128.0C1205.2 120.7 1213.2 113.3 1221.3 106.0C1229.3 98.7 1237.4 91.3 1245.4 84.0C1253.4 76.7 1261.3 69.3 1269.3 62.0C1277.3 54.7 1289.2 43.7 1293.2 40.0M581.9 700.0C585.9 696.3 597.6 685.3 605.5 678.0C613.4 670.7 621.4 663.3 629.4 656.0C637.3 648.7 645.2 641.3 653.1 634.0C661.0 626.7 668.9 619.3 676.8 612.0C684.6 604.7 692.5 597.3 700.4 590.0C708.3 582.7 716.2 575.3 724.1 568.0C732.0 560.7 740.0 553.3 747.7 546.0C755.4 538.7 762.9 531.3 770.5 524.0C778.1 516.7 785.7 509.3 793.3 502.0C800.9 494.7 808.6 487.3 816.2 480.0C823.9 472.7 831.5 465.3 839.2 458.0C846.9 450.7 854.6 443.3 862.3 436.0C870.1 428.7 877.8 421.3 885.7 414.0C893.5 406.7 901.3 399.3 909.2 392.0C917.1 384.7 925.1 377.3 932.9 370.0C940.7 362.7 948.3 355.3 955.8 348.0C963.3 340.7 970.6 333.3 978.1 326.0C985.5 318.7 993.0 311.3 1000.6 304.0C1008.2 296.7 1015.9 289.3 1023.6 282.0C1031.4 274.7 1039.0 267.3 1047.0 260.0C1054.9 252.7 1063.0 245.3 1071.4 238.0C1079.9 230.7 1088.9 223.3 1097.6 216.0C1106.4 208.7 1115.4 201.3 1124.0 194.0C1132.6 186.7 1141.0 179.3 1149.2 172.0C1157.5 164.7 1165.4 157.3 1173.4 150.0C1181.5 142.7 1189.6 135.3 1197.7 128.0C1205.7 120.7 1213.8 113.3 1221.8 106.0C1229.9 98.7 1237.9 91.3 1245.9 84.0C1253.9 76.7 1261.9 69.3 1269.8 62.0C1277.8 54.7 1289.8 43.7 1293.8 40.0M584.7 700.0C588.6 696.3 600.3 685.3 608.2 678.0C616.1 670.7 624.2 663.3 632.1 656.0C640.0 648.7 647.8 641.3 655.7 634.0C663.5 626.7 671.3 619.3 679.1 612.0C686.9 604.7 694.7 597.3 702.6 590.0C710.4 582.7 718.3 575.3 726.1 568.0C734.0 560.7 742.0 553.3 749.7 546.0C757.4 538.7 764.9 531.3 772.5 524.0C780.1 516.7 787.7 509.3 795.3 502.0C802.9 494.7 810.5 487.3 818.2 480.0C825.8 472.7 833.4 465.3 841.1 458.0C848.8 450.7 856.5 443.3 864.2 436.0C871.9 428.7 879.7 421.3 887.5 414.0C895.3 406.7 903.1 399.3 911.0 392.0C918.8 384.7 926.8 377.3 934.6 370.0C942.3 362.7 949.9 355.3 957.4 348.0C964.9 340.7 972.1 333.3 979.5 326.0C987.0 318.7 994.4 311.3 1001.9 304.0C1009.5 296.7 1017.2 289.3 1024.8 282.0C1032.5 274.7 1040.1 267.3 1048.0 260.0C1055.9 252.7 1063.9 245.3 1072.3 238.0C1080.7 230.7 1089.6 223.3 1098.3 216.0C1106.9 208.7 1115.9 201.3 1124.4 194.0C1133.0 186.7 1141.3 179.3 1149.6 172.0C1157.8 164.7 1165.7 157.3 1173.8 150.0C1181.9 142.7 1190.0 135.3 1198.0 128.0C1206.1 120.7 1214.2 113.3 1222.2 106.0C1230.3 98.7 1238.3 91.3 1246.3 84.0C1254.3 76.7 1262.2 69.3 1270.2 62.0C1278.2 54.7 1290.1 43.7 1294.1 40.0M587.7 700.0C591.6 696.3 603.3 685.3 611.2 678.0C619.1 670.7 627.2 663.3 635.1 656.0C643.0 648.7 650.8 641.3 658.7 634.0C666.5 626.7 674.3 619.3 682.1 612.0C689.9 604.7 697.8 597.3 705.6 590.0C713.4 582.7 721.3 575.3 729.2 568.0C737.0 560.7 745.0 553.3 752.7 546.0C760.4 538.7 767.9 531.3 775.5 524.0C783.1 516.7 790.7 509.3 798.3 502.0C805.9 494.7 813.5 487.3 821.2 480.0C828.8 472.7 836.4 465.3 844.1 458.0C851.7 450.7 859.4 443.3 867.1 436.0C874.8 428.7 882.5 421.3 890.3 414.0C898.0 406.7 905.9 399.3 913.7 392.0C921.5 384.7 929.4 377.3 937.1 370.0C944.8 362.7 952.3 355.3 959.7 348.0C967.2 340.7 974.4 333.3 981.8 326.0C989.1 318.7 996.5 311.3 1004.0 304.0C1011.5 296.7 1019.1 289.3 1026.7 282.0C1034.3 274.7 1041.8 267.3 1049.6 260.0C1057.4 252.7 1065.3 245.3 1073.6 238.0C1081.9 230.7 1090.6 223.3 1099.2 216.0C1107.8 208.7 1116.6 201.3 1125.0 194.0C1133.5 186.7 1141.8 179.3 1150.0 172.0C1158.2 164.7 1166.1 157.3 1174.2 150.0C1182.3 142.7 1190.3 135.3 1198.4 128.0C1206.4 120.7 1214.5 113.3 1222.5 106.0C1230.5 98.7 1238.6 91.3 1246.6 84.0C1254.6 76.7 1262.5 69.3 1270.5 62.0C1278.5 54.7 1290.4 43.7 1294.4 40.0M591.0 700.0C594.9 696.3 606.6 685.3 614.5 678.0C622.4 670.7 630.4 663.3 638.3 656.0C646.2 648.7 654.0 641.3 661.8 634.0C669.6 626.7 677.3 619.3 685.1 612.0C692.9 604.7 700.7 597.3 708.5 590.0C716.3 582.7 724.1 575.3 732.0 568.0C739.8 560.7 747.8 553.3 755.5 546.0C763.2 538.7 770.7 531.3 778.3 524.0C785.9 516.7 793.5 509.3 801.1 502.0C808.7 494.7 816.3 487.3 823.9 480.0C831.6 472.7 839.2 465.3 846.8 458.0C854.4 450.7 862.1 443.3 869.8 436.0C877.5 428.7 885.2 421.3 892.9 414.0C900.6 406.7 908.4 399.3 916.2 392.0C923.9 384.7 931.8 377.3 939.5 370.0C947.1 362.7 954.6 355.3 962.0 348.0C969.4 340.7 976.6 333.3 983.9 326.0C991.2 318.7 998.5 311.3 1006.0 304.0C1013.4 296.7 1020.9 289.3 1028.5 282.0C1036.0 274.7 1043.4 267.3 1051.2 260.0C1058.9 252.7 1066.8 245.3 1075.0 238.0C1083.2 230.7 1091.9 223.3 1100.3 216.0C1108.8 208.7 1117.5 201.3 1125.9 194.0C1134.3 186.7 1142.6 179.3 1150.7 172.0C1158.9 164.7 1166.8 157.3 1174.8 150.0C1182.8 142.7 1190.8 135.3 1198.9 128.0C1206.9 120.7 1214.9 113.3 1222.9 106.0C1231.0 98.7 1239.0 91.3 1247.0 84.0C1255.0 76.7 1262.9 69.3 1270.9 62.0C1278.9 54.7 1290.8 43.7 1294.8 40.0M593.2 700.0C597.2 696.3 608.8 685.3 616.7 678.0C624.6 670.7 632.7 663.3 640.6 656.0C648.6 648.7 656.4 641.3 664.3 634.0C672.1 626.7 679.9 619.3 687.8 612.0C695.6 604.7 703.5 597.3 711.3 590.0C719.2 582.7 727.1 575.3 734.9 568.0C742.8 560.7 750.7 553.3 758.5 546.0C766.2 538.7 773.7 531.3 781.3 524.0C788.9 516.7 796.4 509.3 804.0 502.0C811.7 494.7 819.3 487.3 826.9 480.0C834.6 472.7 842.2 465.3 849.8 458.0C857.5 450.7 865.2 443.3 872.9 436.0C880.7 428.7 888.4 421.3 896.2 414.0C904.0 406.7 911.8 399.3 919.6 392.0C927.4 384.7 935.4 377.3 943.1 370.0C950.9 362.7 958.4 355.3 965.9 348.0C973.4 340.7 980.7 333.3 988.2 326.0C995.6 318.7 1003.0 311.3 1010.6 304.0C1018.1 296.7 1025.8 289.3 1033.5 282.0C1041.1 274.7 1048.7 267.3 1056.6 260.0C1064.5 252.7 1072.5 245.3 1080.8 238.0C1089.1 230.7 1098.0 223.3 1106.6 216.0C1115.2 208.7 1124.0 201.3 1132.5 194.0C1140.9 186.7 1149.3 179.3 1157.4 172.0C1165.5 164.7 1173.3 157.3 1181.3 150.0C1189.3 142.7 1197.2 135.3 1205.2 128.0C1213.1 120.7 1221.1 113.3 1229.1 106.0C1237.1 98.7 1245.1 91.3 1253.1 84.0C1261.0 76.7 1268.9 69.3 1276.8 62.0C1284.8 54.7 1296.7 43.7 1300.6 40.0M596.4 700.0C600.3 696.3 612.0 685.3 619.9 678.0C627.8 670.7 635.8 663.3 643.7 656.0C651.6 648.7 659.5 641.3 667.3 634.0C675.1 626.7 682.9 619.3 690.7 612.0C698.5 604.7 706.3 597.3 714.1 590.0C721.9 582.7 729.7 575.3 737.6 568.0C745.4 560.7 753.4 553.3 761.1 546.0C768.8 538.7 776.3 531.3 783.9 524.0C791.5 516.7 799.1 509.3 806.7 502.0C814.3 494.7 821.9 487.3 829.5 480.0C837.2 472.7 844.8 465.3 852.4 458.0C860.1 450.7 867.7 443.3 875.4 436.0C883.1 428.7 890.9 421.3 898.6 414.0C906.4 406.7 914.2 399.3 922.0 392.0C929.7 384.7 937.7 377.3 945.3 370.0C953.0 362.7 960.5 355.3 968.0 348.0C975.5 340.7 982.7 333.3 990.1 326.0C997.5 318.7 1004.9 311.3 1012.4 304.0C1019.8 296.7 1027.5 289.3 1035.1 282.0C1042.7 274.7 1050.2 267.3 1058.0 260.0C1065.8 252.7 1073.7 245.3 1081.9 238.0C1090.2 230.7 1098.9 223.3 1107.4 216.0C1115.9 208.7 1124.6 201.3 1133.0 194.0C1141.4 186.7 1149.7 179.3 1157.8 172.0C1166.0 164.7 1173.8 157.3 1181.8 150.0C1189.8 142.7 1197.8 135.3 1205.7 128.0C1213.7 120.7 1221.7 113.3 1229.7 106.0C1237.7 98.7 1245.7 91.3 1253.6 84.0C1261.6 76.7 1269.5 69.3 1277.4 62.0C1285.3 54.7 1297.2 43.7 1301.2 40.0M599.3 700.0C603.2 696.3 614.9 685.3 622.8 678.0C630.7 670.7 638.7 663.3 646.6 656.0C654.5 648.7 662.3 641.3 670.1 634.0C677.9 626.7 685.7 619.3 693.5 612.0C701.2 604.7 709.0 597.3 716.8 590.0C724.6 582.7 732.5 575.3 740.3 568.0C748.2 560.7 756.1 553.3 763.8 546.0C771.5 538.7 779.0 531.3 786.6 524.0C794.2 516.7 801.8 509.3 809.4 502.0C817.0 494.7 824.6 487.3 832.2 480.0C839.9 472.7 847.5 465.3 855.1 458.0C862.7 450.7 870.4 443.3 878.1 436.0C885.7 428.7 893.4 421.3 901.1 414.0C908.9 406.7 916.6 399.3 924.4 392.0C932.1 384.7 940.0 377.3 947.7 370.0C955.3 362.7 962.8 355.3 970.2 348.0C977.6 340.7 984.8 333.3 992.2 326.0C999.5 318.7 1006.8 311.3 1014.3 304.0C1021.7 296.7 1029.2 289.3 1036.8 282.0C1044.3 274.7 1051.8 267.3 1059.5 260.0C1067.3 252.7 1075.1 245.3 1083.2 238.0C1091.4 230.7 1100.0 223.3 1108.4 216.0C1116.8 208.7 1125.4 201.3 1133.7 194.0C1142.1 186.7 1150.3 179.3 1158.4 172.0C1166.5 164.7 1174.3 157.3 1182.3 150.0C1190.3 142.7 1198.2 135.3 1206.2 128.0C1214.1 120.7 1222.1 113.3 1230.1 106.0C1238.1 98.7 1246.1 91.3 1254.0 84.0C1262.0 76.7 1269.9 69.3 1277.8 62.0C1285.7 54.7 1297.6 43.7 1301.6 40.0M601.9 700.0C605.8 696.3 617.5 685.3 625.3 678.0C633.2 670.7 641.2 663.3 649.1 656.0C657.0 648.7 664.8 641.3 672.6 634.0C680.4 626.7 688.1 619.3 695.8 612.0C703.6 604.7 711.3 597.3 719.1 590.0C726.9 582.7 734.7 575.3 742.5 568.0C750.3 560.7 758.3 553.3 766.0 546.0C773.7 538.7 781.2 531.3 788.8 524.0C796.4 516.7 803.9 509.3 811.5 502.0C819.1 494.7 826.8 487.3 834.4 480.0C842.0 472.7 849.6 465.3 857.2 458.0C864.8 450.7 872.5 443.3 880.1 436.0C887.8 428.7 895.5 421.3 903.2 414.0C910.9 406.7 918.6 399.3 926.3 392.0C934.0 384.7 941.9 377.3 949.5 370.0C957.1 362.7 964.5 355.3 971.9 348.0C979.3 340.7 986.5 333.3 993.8 326.0C1001.1 318.7 1008.4 311.3 1015.7 304.0C1023.1 296.7 1030.6 289.3 1038.1 282.0C1045.6 274.7 1053.0 267.3 1060.7 260.0C1068.3 252.7 1076.1 245.3 1084.2 238.0C1092.3 230.7 1100.8 223.3 1109.1 216.0C1117.5 208.7 1125.9 201.3 1134.2 194.0C1142.5 186.7 1150.7 179.3 1158.8 172.0C1166.9 164.7 1174.7 157.3 1182.6 150.0C1190.6 142.7 1198.5 135.3 1206.5 128.0C1214.4 120.7 1222.4 113.3 1230.4 106.0C1238.3 98.7 1246.4 91.3 1254.3 84.0C1262.3 76.7 1270.2 69.3 1278.1 62.0C1286.0 54.7 1297.9 43.7 1301.8 40.0M604.8 700.0C608.8 696.3 620.4 685.3 628.3 678.0C636.2 670.7 644.2 663.3 652.1 656.0C659.9 648.7 667.7 641.3 675.5 634.0C683.3 626.7 691.0 619.3 698.7 612.0C706.4 604.7 714.2 597.3 721.9 590.0C729.7 582.7 737.5 575.3 745.3 568.0C753.1 560.7 761.1 553.3 768.8 546.0C776.5 538.7 784.0 531.3 791.6 524.0C799.2 516.7 806.7 509.3 814.3 502.0C821.9 494.7 829.6 487.3 837.2 480.0C844.8 472.7 852.4 465.3 860.0 458.0C867.6 450.7 875.2 443.3 882.8 436.0C890.5 428.7 898.1 421.3 905.8 414.0C913.4 406.7 921.2 399.3 928.8 392.0C936.5 384.7 944.3 377.3 951.9 370.0C959.4 362.7 966.8 355.3 974.2 348.0C981.5 340.7 988.6 333.3 995.9 326.0C1003.2 318.7 1010.4 311.3 1017.7 304.0C1025.0 296.7 1032.5 289.3 1039.9 282.0C1047.3 274.7 1054.6 267.3 1062.2 260.0C1069.8 252.7 1077.5 245.3 1085.5 238.0C1093.5 230.7 1101.9 223.3 1110.2 216.0C1118.4 208.7 1126.8 201.3 1135.0 194.0C1143.2 186.7 1151.4 179.3 1159.4 172.0C1167.5 164.7 1175.3 157.3 1183.3 150.0C1191.2 142.7 1199.1 135.3 1207.1 128.0C1215.0 120.7 1223.0 113.3 1231.0 106.0C1238.9 98.7 1246.9 91.3 1254.9 84.0C1262.8 76.7 1270.7 69.3 1278.6 62.0C1286.6 54.7 1298.4 43.7 1302.4 40.0M607.2 700.0C611.1 696.3 622.8 685.3 630.7 678.0C638.6 670.7 646.6 663.3 654.5 656.0C662.4 648.7 670.2 641.3 678.0 634.0C685.8 626.7 693.5 619.3 701.2 612.0C709.0 604.7 716.7 597.3 724.5 590.0C732.3 582.7 740.1 575.3 748.0 568.0C755.8 560.7 763.7 553.3 771.4 546.0C779.1 538.7 786.6 531.3 794.2 524.0C801.8 516.7 809.4 509.3 817.0 502.0C824.6 494.7 832.2 487.3 839.8 480.0C847.4 472.7 855.0 465.3 862.7 458.0C870.3 450.7 878.0 443.3 885.6 436.0C893.3 428.7 901.0 421.3 908.7 414.0C916.5 406.7 924.2 399.3 932.0 392.0C939.7 384.7 947.6 377.3 955.2 370.0C962.9 362.7 970.4 355.3 977.8 348.0C985.3 340.7 992.5 333.3 999.9 326.0C1007.3 318.7 1014.6 311.3 1022.1 304.0C1029.6 296.7 1037.1 289.3 1044.7 282.0C1052.3 274.7 1059.7 267.3 1067.5 260.0C1075.2 252.7 1083.1 245.3 1091.2 238.0C1099.3 230.7 1107.9 223.3 1116.3 216.0C1124.7 208.7 1133.2 201.3 1141.5 194.0C1149.8 186.7 1158.0 179.3 1166.0 172.0C1174.0 164.7 1181.8 157.3 1189.6 150.0C1197.5 142.7 1205.3 135.3 1213.2 128.0C1221.1 120.7 1229.0 113.3 1236.9 106.0C1244.8 98.7 1252.8 91.3 1260.7 84.0C1268.6 76.7 1276.5 69.3 1284.3 62.0C1292.2 54.7 1304.1 43.7 1308.0 40.0M610.0 700.0C614.0 696.3 625.6 685.3 633.5 678.0C641.4 670.7 649.5 663.3 657.4 656.0C665.3 648.7 673.1 641.3 680.9 634.0C688.7 626.7 696.5 619.3 704.2 612.0C712.0 604.7 719.8 597.3 727.6 590.0C735.4 582.7 743.3 575.3 751.1 568.0C758.9 560.7 766.9 553.3 774.6 546.0C782.3 538.7 789.8 531.3 797.3 524.0C804.9 516.7 812.5 509.3 820.1 502.0C827.7 494.7 835.3 487.3 843.0 480.0C850.6 472.7 858.1 465.3 865.8 458.0C873.4 450.7 881.0 443.3 888.7 436.0C896.3 428.7 904.0 421.3 911.7 414.0C919.4 406.7 927.1 399.3 934.8 392.0C942.5 384.7 950.3 377.3 957.9 370.0C965.5 362.7 972.9 355.3 980.3 348.0C987.7 340.7 994.9 333.3 1002.2 326.0C1009.5 318.7 1016.8 311.3 1024.2 304.0C1031.6 296.7 1039.1 289.3 1046.6 282.0C1054.1 274.7 1061.5 267.3 1069.1 260.0C1076.8 252.7 1084.5 245.3 1092.5 238.0C1100.6 230.7 1109.0 223.3 1117.3 216.0C1125.5 208.7 1133.9 201.3 1142.1 194.0C1150.3 186.7 1158.5 179.3 1166.5 172.0C1174.5 164.7 1182.2 157.3 1190.1 150.0C1197.9 142.7 1205.7 135.3 1213.6 128.0C1221.4 120.7 1229.3 113.3 1237.2 106.0C1245.2 98.7 1253.1 91.3 1261.0 84.0C1269.0 76.7 1276.8 69.3 1284.7 62.0C1292.6 54.7 1304.4 43.7 1308.3 40.0M613.0 700.0C616.9 696.3 628.6 685.3 636.4 678.0C644.3 670.7 652.4 663.3 660.3 656.0C668.2 648.7 676.0 641.3 683.8 634.0C691.6 626.7 699.3 619.3 707.1 612.0C714.9 604.7 722.6 597.3 730.4 590.0C738.2 582.7 746.0 575.3 753.9 568.0C761.7 560.7 769.6 553.3 777.3 546.0C785.0 538.7 792.5 531.3 800.1 524.0C807.7 516.7 815.3 509.3 822.9 502.0C830.5 494.7 838.1 487.3 845.7 480.0C853.3 472.7 860.9 465.3 868.5 458.0C876.1 450.7 883.7 443.3 891.3 436.0C898.9 428.7 906.6 421.3 914.2 414.0C921.9 406.7 929.6 399.3 937.2 392.0C944.9 384.7 952.7 377.3 960.2 370.0C967.7 362.7 975.1 355.3 982.5 348.0C989.8 340.7 997.0 333.3 1004.2 326.0C1011.5 318.7 1018.8 311.3 1026.1 304.0C1033.4 296.7 1040.8 289.3 1048.3 282.0C1055.7 274.7 1063.0 267.3 1070.6 260.0C1078.1 252.7 1085.8 245.3 1093.7 238.0C1101.7 230.7 1110.0 223.3 1118.2 216.0C1126.4 208.7 1134.6 201.3 1142.7 194.0C1150.9 186.7 1159.0 179.3 1166.9 172.0C1174.9 164.7 1182.6 157.3 1190.5 150.0C1198.3 142.7 1206.1 135.3 1214.0 128.0C1221.8 120.7 1229.7 113.3 1237.6 106.0C1245.5 98.7 1253.5 91.3 1261.4 84.0C1269.3 76.7 1277.2 69.3 1285.0 62.0C1292.9 54.7 1304.7 43.7 1308.7 40.0M616.2 700.0C620.1 696.3 631.8 685.3 639.7 678.0C647.5 670.7 655.5 663.3 663.4 656.0C671.2 648.7 678.9 641.3 686.6 634.0C694.4 626.7 702.0 619.3 709.6 612.0C717.3 604.7 725.0 597.3 732.7 590.0C740.4 582.7 748.1 575.3 755.9 568.0C763.7 560.7 771.6 553.3 779.3 546.0C787.0 538.7 794.5 531.3 802.1 524.0C809.6 516.7 817.2 509.3 824.8 502.0C832.4 494.7 840.0 487.3 847.6 480.0C855.2 472.7 862.8 465.3 870.4 458.0C878.0 450.7 885.6 443.3 893.2 436.0C900.8 428.7 908.4 421.3 916.0 414.0C923.7 406.7 931.4 399.3 939.0 392.0C946.6 384.7 954.4 377.3 961.9 370.0C969.4 362.7 976.8 355.3 984.1 348.0C991.4 340.7 998.5 333.3 1005.7 326.0C1013.0 318.7 1020.2 311.3 1027.5 304.0C1034.7 296.7 1042.1 289.3 1049.5 282.0C1056.9 274.7 1064.1 267.3 1071.6 260.0C1079.2 252.7 1086.8 245.3 1094.6 238.0C1102.5 230.7 1110.8 223.3 1118.9 216.0C1127.0 208.7 1135.2 201.3 1143.2 194.0C1151.3 186.7 1159.4 179.3 1167.4 172.0C1175.3 164.7 1183.1 157.3 1190.9 150.0C1198.7 142.7 1206.6 135.3 1214.4 128.0C1222.3 120.7 1230.2 113.3 1238.1 106.0C1246.0 98.7 1254.0 91.3 1261.9 84.0C1269.8 76.7 1277.6 69.3 1285.5 62.0C1293.4 54.7 1305.2 43.7 1309.1 40.0M618.8 700.0C622.7 696.3 634.4 685.3 642.2 678.0C650.1 670.7 658.1 663.3 666.0 656.0C673.8 648.7 681.6 641.3 689.3 634.0C697.0 626.7 704.6 619.3 712.3 612.0C720.0 604.7 727.6 597.3 735.4 590.0C743.1 582.7 750.8 575.3 758.6 568.0C766.4 560.7 774.3 553.3 782.0 546.0C789.7 538.7 797.2 531.3 804.8 524.0C812.3 516.7 819.9 509.3 827.5 502.0C835.1 494.7 842.7 487.3 850.3 480.0C857.9 472.7 865.5 465.3 873.0 458.0C880.6 450.7 888.2 443.3 895.8 436.0C903.4 428.7 911.0 421.3 918.6 414.0C926.2 406.7 933.8 399.3 941.4 392.0C949.0 384.7 956.7 377.3 964.2 370.0C971.6 362.7 979.0 355.3 986.2 348.0C993.5 340.7 1000.6 333.3 1007.8 326.0C1014.9 318.7 1022.1 311.3 1029.3 304.0C1036.6 296.7 1043.9 289.3 1051.2 282.0C1058.5 274.7 1065.7 267.3 1073.1 260.0C1080.6 252.7 1088.1 245.3 1095.9 238.0C1103.7 230.7 1111.8 223.3 1119.8 216.0C1127.8 208.7 1135.9 201.3 1143.9 194.0C1151.9 186.7 1160.0 179.3 1167.9 172.0C1175.8 164.7 1183.5 157.3 1191.4 150.0C1199.2 142.7 1206.9 135.3 1214.8 128.0C1222.6 120.7 1230.5 113.3 1238.4 106.0C1246.3 98.7 1254.3 91.3 1262.2 84.0C1270.1 76.7 1277.9 69.3 1285.8 62.0C1293.7 54.7 1305.5 43.7 1309.4 40.0M621.6 700.0C625.5 696.3 637.1 685.3 645.0 678.0C652.8 670.7 660.8 663.3 668.7 656.0C676.5 648.7 684.3 641.3 692.0 634.0C699.7 626.7 707.3 619.3 715.0 612.0C722.7 604.7 730.4 597.3 738.1 590.0C745.8 582.7 753.6 575.3 761.4 568.0C769.1 560.7 777.0 553.3 784.7 546.0C792.4 538.7 799.9 531.3 807.5 524.0C815.1 516.7 822.7 509.3 830.3 502.0C837.9 494.7 845.5 487.3 853.1 480.0C860.7 472.7 868.2 465.3 875.8 458.0C883.5 450.7 891.1 443.3 898.7 436.0C906.3 428.7 914.0 421.3 921.6 414.0C929.3 406.7 937.0 399.3 944.7 392.0C952.3 384.7 960.1 377.3 967.6 370.0C975.2 362.7 982.6 355.3 990.0 348.0C997.3 340.7 1004.5 333.3 1011.8 326.0C1019.1 318.7 1026.4 311.3 1033.8 304.0C1041.2 296.7 1048.6 289.3 1056.1 282.0C1063.5 274.7 1070.9 267.3 1078.5 260.0C1086.1 252.7 1093.7 245.3 1101.7 238.0C1109.6 230.7 1117.9 223.3 1126.0 216.0C1134.2 208.7 1142.4 201.3 1150.5 194.0C1158.6 186.7 1166.7 179.3 1174.6 172.0C1182.5 164.7 1190.1 157.3 1197.8 150.0C1205.6 142.7 1213.3 135.3 1221.0 128.0C1228.8 120.7 1236.6 113.3 1244.5 106.0C1252.3 98.7 1260.3 91.3 1268.2 84.0C1276.0 76.7 1283.8 69.3 1291.7 62.0C1299.5 54.7 1311.3 43.7 1315.2 40.0M624.6 700.0C628.5 696.3 640.2 685.3 648.0 678.0C655.9 670.7 663.9 663.3 671.7 656.0C679.5 648.7 687.3 641.3 695.0 634.0C702.7 626.7 710.2 619.3 717.9 612.0C725.5 604.7 733.2 597.3 740.9 590.0C748.6 582.7 756.3 575.3 764.1 568.0C771.8 560.7 779.7 553.3 787.4 546.0C795.1 538.7 802.6 531.3 810.2 524.0C817.8 516.7 825.3 509.3 832.9 502.0C840.5 494.7 848.1 487.3 855.7 480.0C863.3 472.7 870.9 465.3 878.5 458.0C886.1 450.7 893.7 443.3 901.3 436.0C908.9 428.7 916.5 421.3 924.1 414.0C931.8 406.7 939.4 399.3 947.1 392.0C954.7 384.7 962.4 377.3 969.9 370.0C977.4 362.7 984.8 355.3 992.1 348.0C999.5 340.7 1006.6 333.3 1013.9 326.0C1021.2 318.7 1028.4 311.3 1035.7 304.0C1043.0 296.7 1050.4 289.3 1057.8 282.0C1065.2 274.7 1072.5 267.3 1080.0 260.0C1087.5 252.7 1095.1 245.3 1103.0 238.0C1110.8 230.7 1119.0 223.3 1127.1 216.0C1135.1 208.7 1143.3 201.3 1151.3 194.0C1159.3 186.7 1167.4 179.3 1175.2 172.0C1183.1 164.7 1190.8 157.3 1198.5 150.0C1206.2 142.7 1213.9 135.3 1221.7 128.0C1229.5 120.7 1237.3 113.3 1245.1 106.0C1253.0 98.7 1260.9 91.3 1268.8 84.0C1276.6 76.7 1284.5 69.3 1292.3 62.0C1300.1 54.7 1311.9 43.7 1315.8 40.0M627.3 700.0C631.2 696.3 642.8 685.3 650.7 678.0C658.6 670.7 666.6 663.3 674.4 656.0C682.3 648.7 690.0 641.3 697.7 634.0C705.4 626.7 713.0 619.3 720.7 612.0C728.4 604.7 736.0 597.3 743.8 590.0C751.5 582.7 759.2 575.3 767.0 568.0C774.7 560.7 782.6 553.3 790.3 546.0C798.0 538.7 805.5 531.3 813.1 524.0C820.7 516.7 828.3 509.3 835.8 502.0C843.4 494.7 851.0 487.3 858.6 480.0C866.2 472.7 873.8 465.3 881.3 458.0C888.9 450.7 896.5 443.3 904.1 436.0C911.7 428.7 919.2 421.3 926.8 414.0C934.4 406.7 942.1 399.3 949.7 392.0C957.2 384.7 964.9 377.3 972.4 370.0C979.8 362.7 987.2 355.3 994.4 348.0C1001.7 340.7 1008.8 333.3 1016.0 326.0C1023.2 318.7 1030.4 311.3 1037.7 304.0C1044.9 296.7 1052.2 289.3 1059.6 282.0C1066.9 274.7 1074.1 267.3 1081.5 260.0C1089.0 252.7 1096.5 245.3 1104.2 238.0C1112.0 230.7 1120.1 223.3 1128.0 216.0C1136.0 208.7 1143.9 201.3 1151.9 194.0C1159.8 186.7 1167.8 179.3 1175.7 172.0C1183.5 164.7 1191.2 157.3 1198.9 150.0C1206.6 142.7 1214.3 135.3 1222.1 128.0C1229.8 120.7 1237.6 113.3 1245.5 106.0C1253.3 98.7 1261.3 91.3 1269.1 84.0C1277.0 76.7 1284.8 69.3 1292.6 62.0C1300.5 54.7 1312.2 43.7 1316.1 40.0M630.0 700.0C633.9 696.3 645.5 685.3 653.4 678.0C661.2 670.7 669.3 663.3 677.1 656.0C685.0 648.7 692.7 641.3 700.5 634.0C708.2 626.7 715.8 619.3 723.5 612.0C731.1 604.7 738.8 597.3 746.5 590.0C754.2 582.7 762.0 575.3 769.7 568.0C777.5 560.7 785.4 553.3 793.1 546.0C800.8 538.7 808.3 531.3 815.9 524.0C823.4 516.7 831.0 509.3 838.6 502.0C846.2 494.7 853.8 487.3 861.4 480.0C869.0 472.7 876.5 465.3 884.1 458.0C891.6 450.7 899.2 443.3 906.7 436.0C914.3 428.7 921.9 421.3 929.4 414.0C937.0 406.7 944.6 399.3 952.1 392.0C959.7 384.7 967.3 377.3 974.7 370.0C982.1 362.7 989.4 355.3 996.7 348.0C1003.9 340.7 1011.0 333.3 1018.1 326.0C1025.3 318.7 1032.4 311.3 1039.6 304.0C1046.8 296.7 1054.1 289.3 1061.3 282.0C1068.5 274.7 1075.7 267.3 1083.0 260.0C1090.4 252.7 1097.8 245.3 1105.5 238.0C1113.2 230.7 1121.2 223.3 1129.0 216.0C1136.8 208.7 1144.7 201.3 1152.6 194.0C1160.4 186.7 1168.4 179.3 1176.2 172.0C1184.0 164.7 1191.7 157.3 1199.4 150.0C1207.1 142.7 1214.8 135.3 1222.5 128.0C1230.3 120.7 1238.1 113.3 1245.9 106.0C1253.7 98.7 1261.7 91.3 1269.5 84.0C1277.4 76.7 1285.2 69.3 1293.0 62.0C1300.9 54.7 1312.6 43.7 1316.5 40.0M633.3 700.0C637.2 696.3 648.8 685.3 656.6 678.0C664.5 670.7 672.5 663.3 680.3 656.0C688.1 648.7 695.8 641.3 703.4 634.0C711.1 626.7 718.6 619.3 726.2 612.0C733.9 604.7 741.5 597.3 749.1 590.0C756.8 582.7 764.5 575.3 772.2 568.0C779.9 560.7 787.8 553.3 795.5 546.0C803.2 538.7 810.7 531.3 818.3 524.0C825.8 516.7 833.4 509.3 841.0 502.0C848.6 494.7 856.2 487.3 863.8 480.0C871.4 472.7 879.0 465.3 886.5 458.0C894.1 450.7 901.7 443.3 909.3 436.0C917.0 428.7 924.6 421.3 932.2 414.0C939.8 406.7 947.5 399.3 955.1 392.0C962.8 384.7 970.4 377.3 977.9 370.0C985.5 362.7 992.9 355.3 1000.2 348.0C1007.6 340.7 1014.8 333.3 1022.1 326.0C1029.4 318.7 1036.6 311.3 1044.0 304.0C1051.3 296.7 1058.7 289.3 1066.2 282.0C1073.6 274.7 1080.9 267.3 1088.4 260.0C1096.0 252.7 1103.6 245.3 1111.4 238.0C1119.2 230.7 1127.4 223.3 1135.4 216.0C1143.4 208.7 1151.5 201.3 1159.5 194.0C1167.5 186.7 1175.4 179.3 1183.3 172.0C1191.1 164.7 1198.7 157.3 1206.4 150.0C1214.1 142.7 1221.8 135.3 1229.5 128.0C1237.2 120.7 1245.0 113.3 1252.8 106.0C1260.6 98.7 1268.5 91.3 1276.3 84.0C1284.1 76.7 1291.9 69.3 1299.7 62.0C1307.5 54.7 1319.1 43.7 1323.0 40.0M636.0 700.0C639.9 696.3 651.5 685.3 659.3 678.0C667.2 670.7 675.2 663.3 683.0 656.0C690.8 648.7 698.4 641.3 706.1 634.0C713.7 626.7 721.2 619.3 728.8 612.0C736.4 604.7 744.0 597.3 751.6 590.0C759.3 582.7 767.0 575.3 774.7 568.0C782.4 560.7 790.3 553.3 797.9 546.0C805.6 538.7 813.1 531.3 820.7 524.0C828.3 516.7 835.9 509.3 843.5 502.0C851.0 494.7 858.6 487.3 866.2 480.0C873.8 472.7 881.4 465.3 888.9 458.0C896.5 450.7 904.1 443.3 911.7 436.0C919.3 428.7 926.9 421.3 934.5 414.0C942.1 406.7 949.7 399.3 957.3 392.0C964.9 384.7 972.5 377.3 980.0 370.0C987.5 362.7 994.9 355.3 1002.2 348.0C1009.5 340.7 1016.7 333.3 1023.9 326.0C1031.2 318.7 1038.4 311.3 1045.7 304.0C1053.0 296.7 1060.3 289.3 1067.7 282.0C1075.0 274.7 1082.3 267.3 1089.8 260.0C1097.2 252.7 1104.8 245.3 1112.5 238.0C1120.3 230.7 1128.3 223.3 1136.3 216.0C1144.2 208.7 1152.2 201.3 1160.1 194.0C1168.0 186.7 1175.9 179.3 1183.7 172.0C1191.5 164.7 1199.1 157.3 1206.8 150.0C1214.5 142.7 1222.1 135.3 1229.8 128.0C1237.5 120.7 1245.3 113.3 1253.1 106.0C1260.9 98.7 1268.8 91.3 1276.6 84.0C1284.4 76.7 1292.2 69.3 1300.0 62.0C1307.8 54.7 1319.4 43.7 1323.3 40.0M638.4 700.0C642.3 696.3 653.9 685.3 661.8 678.0C669.6 670.7 677.7 663.3 685.5 656.0C693.3 648.7 701.0 641.3 708.7 634.0C716.4 626.7 724.0 619.3 731.6 612.0C739.2 604.7 746.9 597.3 754.5 590.0C762.2 582.7 769.9 575.3 777.7 568.0C785.4 560.7 793.3 553.3 801.0 546.0C808.7 538.7 816.2 531.3 823.8 524.0C831.3 516.7 838.9 509.3 846.5 502.0C854.1 494.7 861.7 487.3 869.3 480.0C876.8 472.7 884.4 465.3 891.9 458.0C899.5 450.7 907.1 443.3 914.6 436.0C922.2 428.7 929.8 421.3 937.3 414.0C944.9 406.7 952.5 399.3 960.1 392.0C967.6 384.7 975.2 377.3 982.6 370.0C990.1 362.7 997.4 355.3 1004.6 348.0C1011.9 340.7 1019.0 333.3 1026.2 326.0C1033.4 318.7 1040.6 311.3 1047.8 304.0C1055.1 296.7 1062.3 289.3 1069.6 282.0C1076.9 274.7 1084.1 267.3 1091.5 260.0C1098.8 252.7 1106.3 245.3 1113.9 238.0C1121.6 230.7 1129.6 223.3 1137.4 216.0C1145.2 208.7 1153.0 201.3 1160.9 194.0C1168.7 186.7 1176.6 179.3 1184.4 172.0C1192.1 164.7 1199.7 157.3 1207.4 150.0C1215.1 142.7 1222.7 135.3 1230.4 128.0C1238.1 120.7 1245.8 113.3 1253.6 106.0C1261.4 98.7 1269.3 91.3 1277.1 84.0C1284.9 76.7 1292.7 69.3 1300.5 62.0C1308.3 54.7 1319.9 43.7 1323.8 40.0M641.5 700.0C645.4 696.3 657.0 685.3 664.9 678.0C672.7 670.7 680.7 663.3 688.5 656.0C696.3 648.7 704.0 641.3 711.7 634.0C719.3 626.7 726.9 619.3 734.5 612.0C742.1 604.7 749.7 597.3 757.3 590.0C765.0 582.7 772.6 575.3 780.4 568.0C788.1 560.7 796.0 553.3 803.6 546.0C811.3 538.7 818.8 531.3 826.4 524.0C834.0 516.7 841.6 509.3 849.1 502.0C856.7 494.7 864.3 487.3 871.9 480.0C879.4 472.7 887.0 465.3 894.5 458.0C902.1 450.7 909.6 443.3 917.2 436.0C924.7 428.7 932.2 421.3 939.8 414.0C947.3 406.7 954.9 399.3 962.4 392.0C969.9 384.7 977.5 377.3 984.9 370.0C992.3 362.7 999.5 355.3 1006.8 348.0C1014.0 340.7 1021.1 333.3 1028.2 326.0C1035.4 318.7 1042.5 311.3 1049.7 304.0C1056.8 296.7 1064.1 289.3 1071.3 282.0C1078.5 274.7 1085.6 267.3 1092.9 260.0C1100.2 252.7 1107.6 245.3 1115.2 238.0C1122.7 230.7 1130.6 223.3 1138.3 216.0C1146.0 208.7 1153.8 201.3 1161.5 194.0C1169.3 186.7 1177.2 179.3 1184.9 172.0C1192.6 164.7 1200.3 157.3 1207.9 150.0C1215.6 142.7 1223.1 135.3 1230.8 128.0C1238.5 120.7 1246.3 113.3 1254.0 106.0C1261.8 98.7 1269.7 91.3 1277.5 84.0C1285.3 76.7 1293.1 69.3 1300.9 62.0C1308.7 54.7 1320.3 43.7 1324.2 40.0M644.3 700.0C648.2 696.3 659.8 685.3 667.6 678.0C675.5 670.7 683.5 663.3 691.3 656.0C699.1 648.7 706.8 641.3 714.5 634.0C722.2 626.7 729.7 619.3 737.3 612.0C744.9 604.7 752.5 597.3 760.2 590.0C767.8 582.7 775.5 575.3 783.2 568.0C791.0 560.7 798.8 553.3 806.5 546.0C814.2 538.7 821.7 531.3 829.3 524.0C836.8 516.7 844.4 509.3 852.0 502.0C859.6 494.7 867.2 487.3 874.8 480.0C882.4 472.7 889.9 465.3 897.5 458.0C905.1 450.7 912.7 443.3 920.3 436.0C927.9 428.7 935.5 421.3 943.1 414.0C950.7 406.7 958.4 399.3 966.0 392.0C973.6 384.7 981.2 377.3 988.7 370.0C996.2 362.7 1003.6 355.3 1011.0 348.0C1018.4 340.7 1025.6 333.3 1032.9 326.0C1040.2 318.7 1047.5 311.3 1054.9 304.0C1062.3 296.7 1069.7 289.3 1077.1 282.0C1084.5 274.7 1091.8 267.3 1099.4 260.0C1106.9 252.7 1114.5 245.3 1122.2 238.0C1130.0 230.7 1138.1 223.3 1146.0 216.0C1153.9 208.7 1161.9 201.3 1169.8 194.0C1177.7 186.7 1185.6 179.3 1193.3 172.0C1201.0 164.7 1208.5 157.3 1216.0 150.0C1223.6 142.7 1231.1 135.3 1238.7 128.0C1246.3 120.7 1253.9 113.3 1261.6 106.0C1269.4 98.7 1277.2 91.3 1285.0 84.0C1292.7 76.7 1300.5 69.3 1308.2 62.0C1315.9 54.7 1327.6 43.7 1331.4 40.0M647.4 700.0C651.3 696.3 662.9 685.3 670.8 678.0C678.6 670.7 686.6 663.3 694.4 656.0C702.3 648.7 710.0 641.3 717.6 634.0C725.3 626.7 732.8 619.3 740.4 612.0C748.0 604.7 755.6 597.3 763.2 590.0C770.9 582.7 778.5 575.3 786.3 568.0C794.0 560.7 801.9 553.3 809.5 546.0C817.2 538.7 824.7 531.3 832.3 524.0C839.9 516.7 847.4 509.3 855.0 502.0C862.6 494.7 870.2 487.3 877.8 480.0C885.4 472.7 892.9 465.3 900.5 458.0C908.0 450.7 915.6 443.3 923.2 436.0C930.8 428.7 938.3 421.3 945.9 414.0C953.5 406.7 961.1 399.3 968.7 392.0C976.3 384.7 983.8 377.3 991.3 370.0C998.7 362.7 1006.1 355.3 1013.4 348.0C1020.7 340.7 1027.9 333.3 1035.2 326.0C1042.4 318.7 1049.7 311.3 1057.0 304.0C1064.3 296.7 1071.6 289.3 1078.9 282.0C1086.3 274.7 1093.5 267.3 1101.0 260.0C1108.4 252.7 1115.9 245.3 1123.5 238.0C1131.2 230.7 1139.1 223.3 1147.0 216.0C1154.8 208.7 1162.6 201.3 1170.4 194.0C1178.2 186.7 1186.1 179.3 1193.8 172.0C1201.5 164.7 1208.9 157.3 1216.5 150.0C1224.0 142.7 1231.5 135.3 1239.1 128.0C1246.7 120.7 1254.4 113.3 1262.1 106.0C1269.8 98.7 1277.7 91.3 1285.4 84.0C1293.2 76.7 1300.9 69.3 1308.6 62.0C1316.4 54.7 1328.0 43.7 1331.8 40.0M650.1 700.0C654.0 696.3 665.6 685.3 673.4 678.0C681.3 670.7 689.3 663.3 697.1 656.0C705.0 648.7 712.7 641.3 720.3 634.0C728.0 626.7 735.5 619.3 743.1 612.0C750.7 604.7 758.3 597.3 766.0 590.0C773.6 582.7 781.3 575.3 789.0 568.0C796.8 560.7 804.6 553.3 812.3 546.0C820.0 538.7 827.5 531.3 835.0 524.0C842.6 516.7 850.2 509.3 857.8 502.0C865.4 494.7 873.0 487.3 880.5 480.0C888.1 472.7 895.6 465.3 903.2 458.0C910.7 450.7 918.3 443.3 925.8 436.0C933.4 428.7 940.9 421.3 948.5 414.0C956.0 406.7 963.6 399.3 971.2 392.0C978.7 384.7 986.2 377.3 993.6 370.0C1001.0 362.7 1008.3 355.3 1015.6 348.0C1022.9 340.7 1030.0 333.3 1037.2 326.0C1044.4 318.7 1051.6 311.3 1058.9 304.0C1066.1 296.7 1073.4 289.3 1080.6 282.0C1087.9 274.7 1095.1 267.3 1102.4 260.0C1109.8 252.7 1117.2 245.3 1124.8 238.0C1132.4 230.7 1140.2 223.3 1147.9 216.0C1155.6 208.7 1163.3 201.3 1171.1 194.0C1178.8 186.7 1186.6 179.3 1194.3 172.0C1201.9 164.7 1209.4 157.3 1217.0 150.0C1224.5 142.7 1232.0 135.3 1239.6 128.0C1247.2 120.7 1254.8 113.3 1262.5 106.0C1270.2 98.7 1278.1 91.3 1285.8 84.0C1293.6 76.7 1301.3 69.3 1309.1 62.0C1316.8 54.7 1328.4 43.7 1332.3 40.0M652.5 700.0C656.4 696.3 668.0 685.3 675.9 678.0C683.7 670.7 691.8 663.3 699.7 656.0C707.5 648.7 715.3 641.3 723.0 634.0C730.7 626.7 738.3 619.3 745.9 612.0C753.6 604.7 761.2 597.3 768.9 590.0C776.6 582.7 784.3 575.3 792.1 568.0C799.8 560.7 807.7 553.3 815.4 546.0C823.1 538.7 830.6 531.3 838.1 524.0C845.7 516.7 853.3 509.3 860.9 502.0C868.4 494.7 876.0 487.3 883.6 480.0C891.1 472.7 898.7 465.3 906.2 458.0C913.7 450.7 921.3 443.3 928.8 436.0C936.3 428.7 943.8 421.3 951.4 414.0C958.9 406.7 966.4 399.3 973.9 392.0C981.4 384.7 988.9 377.3 996.2 370.0C1003.6 362.7 1010.8 355.3 1018.1 348.0C1025.3 340.7 1032.4 333.3 1039.5 326.0C1046.7 318.7 1053.8 311.3 1061.0 304.0C1068.1 296.7 1075.3 289.3 1082.5 282.0C1089.7 274.7 1096.8 267.3 1104.0 260.0C1111.3 252.7 1118.6 245.3 1126.1 238.0C1133.6 230.7 1141.3 223.3 1148.9 216.0C1156.5 208.7 1164.0 201.3 1171.7 194.0C1179.3 186.7 1187.1 179.3 1194.8 172.0C1202.4 164.7 1209.9 157.3 1217.4 150.0C1225.0 142.7 1232.4 135.3 1240.0 128.0C1247.6 120.7 1255.2 113.3 1262.9 106.0C1270.6 98.7 1278.5 91.3 1286.2 84.0C1294.0 76.7 1301.7 69.3 1309.5 62.0C1317.2 54.7 1328.8 43.7 1332.7 40.0M656.0 700.0C659.9 696.3 671.4 685.3 679.3 678.0C687.2 670.7 695.2 663.3 703.1 656.0C710.9 648.7 718.7 641.3 726.4 634.0C734.1 626.7 741.7 619.3 749.3 612.0C757.0 604.7 764.6 597.3 772.3 590.0C780.0 582.7 787.7 575.3 795.4 568.0C803.2 560.7 811.1 553.3 818.7 546.0C826.4 538.7 833.9 531.3 841.5 524.0C849.0 516.7 856.6 509.3 864.2 502.0C871.8 494.7 879.4 487.3 886.9 480.0C894.5 472.7 902.1 465.3 909.6 458.0C917.2 450.7 924.8 443.3 932.3 436.0C939.9 428.7 947.5 421.3 955.0 414.0C962.6 406.7 970.2 399.3 977.8 392.0C985.3 384.7 992.9 377.3 1000.3 370.0C1007.8 362.7 1015.1 355.3 1022.5 348.0C1029.8 340.7 1037.0 333.3 1044.3 326.0C1051.6 318.7 1058.8 311.3 1066.1 304.0C1073.4 296.7 1080.8 289.3 1088.1 282.0C1095.5 274.7 1102.7 267.3 1110.2 260.0C1117.6 252.7 1125.1 245.3 1132.7 238.0C1140.3 230.7 1148.2 223.3 1155.9 216.0C1163.7 208.7 1171.4 201.3 1179.2 194.0C1186.9 186.7 1194.7 179.3 1202.4 172.0C1210.0 164.7 1217.5 157.3 1225.0 150.0C1232.6 142.7 1240.0 135.3 1247.6 128.0C1255.2 120.7 1262.8 113.3 1270.5 106.0C1278.2 98.7 1286.0 91.3 1293.7 84.0C1301.4 76.7 1309.1 69.3 1316.7 62.0C1324.4 54.7 1336.0 43.7 1339.8 40.0M658.0 700.0C661.9 696.3 673.5 685.3 681.4 678.0C689.2 670.7 697.4 663.3 705.3 656.0C713.2 648.7 721.1 641.3 728.9 634.0C736.7 626.7 744.3 619.3 752.1 612.0C759.8 604.7 767.5 597.3 775.3 590.0C783.1 582.7 790.9 575.3 798.7 568.0C806.4 560.7 814.4 553.3 822.0 546.0C829.7 538.7 837.2 531.3 844.8 524.0C852.3 516.7 859.9 509.3 867.5 502.0C875.1 494.7 882.7 487.3 890.2 480.0C897.8 472.7 905.3 465.3 912.9 458.0C920.4 450.7 928.0 443.3 935.5 436.0C943.0 428.7 950.6 421.3 958.1 414.0C965.6 406.7 973.2 399.3 980.7 392.0C988.2 384.7 995.7 377.3 1003.1 370.0C1010.5 362.7 1017.8 355.3 1025.1 348.0C1032.4 340.7 1039.5 333.3 1046.7 326.0C1054.0 318.7 1061.2 311.3 1068.4 304.0C1075.6 296.7 1082.9 289.3 1090.2 282.0C1097.4 274.7 1104.6 267.3 1111.9 260.0C1119.3 252.7 1126.6 245.3 1134.1 238.0C1141.7 230.7 1149.4 223.3 1157.0 216.0C1164.6 208.7 1172.2 201.3 1179.9 194.0C1187.5 186.7 1195.3 179.3 1202.9 172.0C1210.5 164.7 1218.0 157.3 1225.5 150.0C1233.0 142.7 1240.5 135.3 1248.0 128.0C1255.6 120.7 1263.2 113.3 1270.9 106.0C1278.5 98.7 1286.3 91.3 1294.0 84.0C1301.7 76.7 1309.4 69.3 1317.1 62.0C1324.8 54.7 1336.3 43.7 1340.1 40.0M661.1 700.0C665.0 696.3 676.6 685.3 684.4 678.0C692.3 670.7 700.5 663.3 708.4 656.0C716.3 648.7 724.1 641.3 731.8 634.0C739.6 626.7 747.2 619.3 754.9 612.0C762.7 604.7 770.4 597.3 778.1 590.0C785.8 582.7 793.6 575.3 801.4 568.0C809.1 560.7 817.1 553.3 824.7 546.0C832.4 538.7 839.9 531.3 847.5 524.0C855.0 516.7 862.6 509.3 870.2 502.0C877.8 494.7 885.3 487.3 892.9 480.0C900.4 472.7 908.0 465.3 915.5 458.0C923.0 450.7 930.6 443.3 938.1 436.0C945.6 428.7 953.1 421.3 960.6 414.0C968.1 406.7 975.7 399.3 983.1 392.0C990.6 384.7 998.0 377.3 1005.4 370.0C1012.7 362.7 1020.0 355.3 1027.2 348.0C1034.5 340.7 1041.6 333.3 1048.7 326.0C1055.9 318.7 1063.1 311.3 1070.2 304.0C1077.4 296.7 1084.6 289.3 1091.8 282.0C1099.0 274.7 1106.1 267.3 1113.3 260.0C1120.6 252.7 1127.9 245.3 1135.3 238.0C1142.7 230.7 1150.4 223.3 1157.9 216.0C1165.4 208.7 1172.9 201.3 1180.5 194.0C1188.1 186.7 1195.8 179.3 1203.4 172.0C1211.0 164.7 1218.5 157.3 1226.0 150.0C1233.5 142.7 1240.9 135.3 1248.5 128.0C1256.0 120.7 1263.7 113.3 1271.3 106.0C1279.0 98.7 1286.8 91.3 1294.5 84.0C1302.2 76.7 1309.8 69.3 1317.5 62.0C1325.2 54.7 1336.7 43.7 1340.6 40.0M664.2 700.0C668.1 696.3 679.7 685.3 687.6 678.0C695.5 670.7 703.7 663.3 711.7 656.0C719.7 648.7 727.6 641.3 735.5 634.0C743.4 626.7 751.2 619.3 759.0 612.0C766.8 604.7 774.6 597.3 782.5 590.0C790.3 582.7 798.2 575.3 806.0 568.0C813.9 560.7 821.8 553.3 829.5 546.0C837.2 538.7 844.6 531.3 852.2 524.0C859.8 516.7 867.4 509.3 874.9 502.0C882.5 494.7 890.1 487.3 897.7 480.0C905.2 472.7 912.8 465.3 920.3 458.0C927.9 450.7 935.5 443.3 943.0 436.0C950.6 428.7 958.1 421.3 965.7 414.0C973.3 406.7 980.9 399.3 988.4 392.0C995.9 384.7 1003.4 377.3 1010.9 370.0C1018.3 362.7 1025.7 355.3 1033.0 348.0C1040.4 340.7 1047.6 333.3 1054.9 326.0C1062.2 318.7 1069.5 311.3 1076.8 304.0C1084.1 296.7 1091.5 289.3 1098.8 282.0C1106.2 274.7 1113.5 267.3 1120.9 260.0C1128.3 252.7 1135.8 245.3 1143.3 238.0C1150.9 230.7 1158.6 223.3 1166.3 216.0C1174.0 208.7 1181.6 201.3 1189.3 194.0C1196.9 186.7 1204.7 179.3 1212.3 172.0C1219.8 164.7 1227.3 157.3 1234.8 150.0C1242.3 142.7 1249.7 135.3 1257.2 128.0C1264.7 120.7 1272.3 113.3 1279.9 106.0C1287.5 98.7 1295.2 91.3 1302.9 84.0C1310.5 76.7 1318.2 69.3 1325.8 62.0C1333.4 54.7 1344.9 43.7 1348.7 40.0M666.5 700.0C670.4 696.3 681.9 685.3 689.9 678.0C697.8 670.7 706.1 663.3 714.2 656.0C722.3 648.7 730.3 641.3 738.3 634.0C746.3 626.7 754.2 619.3 762.1 612.0C770.1 604.7 778.0 597.3 785.9 590.0C793.9 582.7 801.8 575.3 809.7 568.0C817.6 560.7 825.6 553.3 833.3 546.0C841.0 538.7 848.4 531.3 856.0 524.0C863.6 516.7 871.1 509.3 878.7 502.0C886.3 494.7 893.9 487.3 901.4 480.0C909.0 472.7 916.5 465.3 924.0 458.0C931.6 450.7 939.1 443.3 946.6 436.0C954.2 428.7 961.7 421.3 969.2 414.0C976.7 406.7 984.3 399.3 991.7 392.0C999.2 384.7 1006.7 377.3 1014.0 370.0C1021.4 362.7 1028.7 355.3 1036.0 348.0C1043.3 340.7 1050.4 333.3 1057.7 326.0C1064.9 318.7 1072.1 311.3 1079.3 304.0C1086.6 296.7 1093.8 289.3 1101.1 282.0C1108.3 274.7 1115.5 267.3 1122.8 260.0C1130.1 252.7 1137.4 245.3 1144.9 238.0C1152.3 230.7 1159.9 223.3 1167.4 216.0C1174.9 208.7 1182.4 201.3 1190.0 194.0C1197.5 186.7 1205.2 179.3 1212.8 172.0C1220.3 164.7 1227.8 157.3 1235.3 150.0C1242.8 142.7 1250.3 135.3 1257.8 128.0C1265.3 120.7 1272.9 113.3 1280.5 106.0C1288.1 98.7 1295.8 91.3 1303.5 84.0C1311.1 76.7 1318.8 69.3 1326.4 62.0C1334.0 54.7 1345.5 43.7 1349.3 40.0M669.6 700.0C673.5 696.3 685.1 685.3 693.0 678.0C701.0 670.7 709.3 663.3 717.4 656.0C725.6 648.7 733.7 641.3 741.7 634.0C749.8 626.7 757.7 619.3 765.7 612.0C773.7 604.7 781.7 597.3 789.7 590.0C797.7 582.7 805.7 575.3 813.6 568.0C821.6 560.7 829.5 553.3 837.2 546.0C845.0 538.7 852.4 531.3 860.0 524.0C867.5 516.7 875.1 509.3 882.7 502.0C890.2 494.7 897.8 487.3 905.4 480.0C912.9 472.7 920.4 465.3 927.9 458.0C935.4 450.7 942.9 443.3 950.4 436.0C957.9 428.7 965.4 421.3 972.9 414.0C980.3 406.7 987.9 399.3 995.3 392.0C1002.7 384.7 1010.0 377.3 1017.3 370.0C1024.7 362.7 1031.9 355.3 1039.1 348.0C1046.3 340.7 1053.4 333.3 1060.6 326.0C1067.7 318.7 1074.9 311.3 1082.0 304.0C1089.1 296.7 1096.3 289.3 1103.4 282.0C1110.6 274.7 1117.6 267.3 1124.8 260.0C1132.0 252.7 1139.2 245.3 1146.5 238.0C1153.8 230.7 1161.3 223.3 1168.6 216.0C1176.0 208.7 1183.3 201.3 1190.7 194.0C1198.2 186.7 1205.8 179.3 1213.3 172.0C1220.8 164.7 1228.3 157.3 1235.8 150.0C1243.2 142.7 1250.6 135.3 1258.1 128.0C1265.7 120.7 1273.2 113.3 1280.8 106.0C1288.4 98.7 1296.1 91.3 1303.8 84.0C1311.4 76.7 1319.0 69.3 1326.7 62.0C1334.3 54.7 1345.8 43.7 1349.6 40.0M672.1 700.0C676.0 696.3 687.5 685.3 695.5 678.0C703.5 670.7 711.9 663.3 720.1 656.0C728.2 648.7 736.5 641.3 744.6 634.0C752.8 626.7 760.8 619.3 768.9 612.0C777.0 604.7 785.1 597.3 793.2 590.0C801.3 582.7 809.4 575.3 817.4 568.0C825.3 560.7 833.3 553.3 841.1 546.0C848.8 538.7 856.2 531.3 863.8 524.0C871.3 516.7 878.9 509.3 886.5 502.0C894.1 494.7 901.6 487.3 909.2 480.0C916.8 472.7 924.3 465.3 931.9 458.0C939.4 450.7 947.0 443.3 954.5 436.0C962.1 428.7 969.6 421.3 977.2 414.0C984.7 406.7 992.3 399.3 999.8 392.0C1007.4 384.7 1014.8 377.3 1022.2 370.0C1029.7 362.7 1037.0 355.3 1044.4 348.0C1051.8 340.7 1059.1 333.3 1066.4 326.0C1073.7 318.7 1081.0 311.3 1088.4 304.0C1095.7 296.7 1103.1 289.3 1110.4 282.0C1117.8 274.7 1125.1 267.3 1132.5 260.0C1139.9 252.7 1147.4 245.3 1154.9 238.0C1162.4 230.7 1170.0 223.3 1177.6 216.0C1185.2 208.7 1192.7 201.3 1200.3 194.0C1207.9 186.7 1215.6 179.3 1223.1 172.0C1230.6 164.7 1238.0 157.3 1245.5 150.0C1253.0 142.7 1260.4 135.3 1267.9 128.0C1275.4 120.7 1282.9 113.3 1290.4 106.0C1298.0 98.7 1305.6 91.3 1313.2 84.0C1320.8 76.7 1328.4 69.3 1336.0 62.0C1343.5 54.7 1354.9 43.7 1358.7 40.0M675.4 700.0C679.3 696.3 690.8 685.3 698.8 678.0C706.8 670.7 715.3 663.3 723.5 656.0C731.7 648.7 739.9 641.3 748.1 634.0C756.2 626.7 764.3 619.3 772.4 612.0C780.5 604.7 788.6 597.3 796.7 590.0C804.8 582.7 812.9 575.3 820.9 568.0C828.9 560.7 836.9 553.3 844.6 546.0C852.3 538.7 859.7 531.3 867.3 524.0C874.9 516.7 882.4 509.3 890.0 502.0C897.6 494.7 905.1 487.3 912.7 480.0C920.2 472.7 927.8 465.3 935.3 458.0C942.8 450.7 950.4 443.3 957.9 436.0C965.4 428.7 972.9 421.3 980.5 414.0C988.0 406.7 995.5 399.3 1003.0 392.0C1010.4 384.7 1017.8 377.3 1025.2 370.0C1032.6 362.7 1039.9 355.3 1047.2 348.0C1054.5 340.7 1061.8 333.3 1069.0 326.0C1076.3 318.7 1083.5 311.3 1090.8 304.0C1098.1 296.7 1105.3 289.3 1112.6 282.0C1119.9 274.7 1127.1 267.3 1134.4 260.0C1141.7 252.7 1149.0 245.3 1156.4 238.0C1163.8 230.7 1171.3 223.3 1178.8 216.0C1186.2 208.7 1193.6 201.3 1201.1 194.0C1208.6 186.7 1216.2 179.3 1223.7 172.0C1231.2 164.7 1238.6 157.3 1246.1 150.0C1253.5 142.7 1260.9 135.3 1268.4 128.0C1275.8 120.7 1283.3 113.3 1290.9 106.0C1298.5 98.7 1306.1 91.3 1313.7 84.0C1321.3 76.7 1328.8 69.3 1336.4 62.0C1344.0 54.7 1355.3 43.7 1359.1 40.0M678.4 700.0C682.3 696.3 693.7 685.3 701.8 678.0C709.8 670.7 718.3 663.3 726.5 656.0C734.8 648.7 743.1 641.3 751.3 634.0C759.5 626.7 767.7 619.3 775.9 612.0C784.1 604.7 792.3 597.3 800.4 590.0C808.5 582.7 816.7 575.3 824.7 568.0C832.7 560.7 840.7 553.3 848.5 546.0C856.2 538.7 863.6 531.3 871.2 524.0C878.8 516.7 886.3 509.3 893.9 502.0C901.4 494.7 909.0 487.3 916.6 480.0C924.1 472.7 931.6 465.3 939.1 458.0C946.6 450.7 954.1 443.3 961.6 436.0C969.1 428.7 976.6 421.3 984.1 414.0C991.5 406.7 999.0 399.3 1006.4 392.0C1013.8 384.7 1021.2 377.3 1028.5 370.0C1035.8 362.7 1043.0 355.3 1050.3 348.0C1057.5 340.7 1064.7 333.3 1071.9 326.0C1079.1 318.7 1086.2 311.3 1093.4 304.0C1100.6 296.7 1107.8 289.3 1114.9 282.0C1122.1 274.7 1129.2 267.3 1136.4 260.0C1143.6 252.7 1150.8 245.3 1158.0 238.0C1165.3 230.7 1172.7 223.3 1180.0 216.0C1187.3 208.7 1194.5 201.3 1201.9 194.0C1209.2 186.7 1216.8 179.3 1224.3 172.0C1231.7 164.7 1239.2 157.3 1246.6 150.0C1254.0 142.7 1261.4 135.3 1268.9 128.0C1276.3 120.7 1283.9 113.3 1291.4 106.0C1298.9 98.7 1306.6 91.3 1314.2 84.0C1321.7 76.7 1329.3 69.3 1336.9 62.0C1344.4 54.7 1355.8 43.7 1359.6 40.0M681.0 700.0C684.9 696.3 696.4 685.3 704.4 678.0C712.5 670.7 721.0 663.3 729.3 656.0C737.6 648.7 746.0 641.3 754.3 634.0C762.6 626.7 770.8 619.3 779.1 612.0C787.3 604.7 795.6 597.3 803.8 590.0C812.0 582.7 820.2 575.3 828.3 568.0C836.3 560.7 844.3 553.3 852.1 546.0C859.9 538.7 867.2 531.3 874.8 524.0C882.4 516.7 889.9 509.3 897.5 502.0C905.1 494.7 912.6 487.3 920.2 480.0C927.8 472.7 935.3 465.3 942.9 458.0C950.4 450.7 958.0 443.3 965.6 436.0C973.1 428.7 980.7 421.3 988.2 414.0C995.8 406.7 1003.4 399.3 1010.9 392.0C1018.4 384.7 1025.8 377.3 1033.3 370.0C1040.7 362.7 1048.1 355.3 1055.5 348.0C1062.9 340.7 1070.3 333.3 1077.7 326.0C1085.1 318.7 1092.5 311.3 1099.9 304.0C1107.2 296.7 1114.6 289.3 1122.0 282.0C1129.4 274.7 1136.8 267.3 1144.2 260.0C1151.7 252.7 1159.2 245.3 1166.7 238.0C1174.2 230.7 1181.7 223.3 1189.3 216.0C1196.8 208.7 1204.3 201.3 1211.9 194.0C1219.4 186.7 1227.0 179.3 1234.5 172.0C1242.0 164.7 1249.4 157.3 1256.8 150.0C1264.3 142.7 1271.7 135.3 1279.1 128.0C1286.6 120.7 1294.1 113.3 1301.6 106.0C1309.1 98.7 1316.6 91.3 1324.1 84.0C1331.7 76.7 1339.2 69.3 1346.7 62.0C1354.2 54.7 1365.5 43.7 1369.2 40.0M686.3 700.0C690.2 696.3 701.6 685.3 709.7 678.0C717.7 670.7 726.2 663.3 734.5 656.0C742.7 648.7 751.1 641.3 759.3 634.0C767.5 626.7 775.7 619.3 783.9 612.0C792.0 604.7 800.2 597.3 808.4 590.0C816.5 582.7 824.7 575.3 832.7 568.0C840.7 560.7 848.7 553.3 856.5 546.0C864.2 538.7 871.6 531.3 879.2 524.0C886.7 516.7 894.3 509.3 901.9 502.0C909.4 494.7 917.0 487.3 924.5 480.0C932.1 472.7 939.6 465.3 947.2 458.0C954.7 450.7 962.2 443.3 969.7 436.0C977.3 428.7 984.8 421.3 992.3 414.0C999.8 406.7 1007.3 399.3 1014.8 392.0C1022.2 384.7 1029.6 377.3 1036.9 370.0C1044.3 362.7 1051.6 355.3 1059.0 348.0C1066.3 340.7 1073.6 333.3 1080.9 326.0C1088.2 318.7 1095.5 311.3 1102.8 304.0C1110.1 296.7 1117.4 289.3 1124.6 282.0C1131.9 274.7 1139.2 267.3 1146.5 260.0C1153.8 252.7 1161.1 245.3 1168.5 238.0C1175.8 230.7 1183.2 223.3 1190.6 216.0C1198.0 208.7 1205.3 201.3 1212.7 194.0C1220.1 186.7 1227.6 179.3 1235.1 172.0C1242.5 164.7 1250.0 157.3 1257.4 150.0C1264.9 142.7 1272.3 135.3 1279.7 128.0C1287.2 120.7 1294.6 113.3 1302.1 106.0C1309.6 98.7 1317.2 91.3 1324.7 84.0C1332.2 76.7 1339.7 69.3 1347.2 62.0C1354.7 54.7 1366.0 43.7 1369.7 40.0M690.8 700.0C694.7 696.3 706.2 685.3 714.2 678.0C722.2 670.7 730.6 663.3 738.8 656.0C747.0 648.7 755.3 641.3 763.4 634.0C771.6 626.7 779.6 619.3 787.7 612.0C795.8 604.7 804.0 597.3 812.0 590.0C820.1 582.7 828.2 575.3 836.2 568.0C844.1 560.7 852.1 553.3 859.8 546.0C867.6 538.7 875.0 531.3 882.5 524.0C890.1 516.7 897.7 509.3 905.2 502.0C912.8 494.7 920.4 487.3 927.9 480.0C935.5 472.7 943.1 465.3 950.7 458.0C958.3 450.7 965.9 443.3 973.5 436.0C981.2 428.7 988.8 421.3 996.4 414.0C1004.0 406.7 1011.7 399.3 1019.3 392.0C1026.9 384.7 1034.4 377.3 1042.0 370.0C1049.5 362.7 1057.1 355.3 1064.6 348.0C1072.2 340.7 1079.8 333.3 1087.3 326.0C1094.9 318.7 1102.5 311.3 1110.1 304.0C1117.7 296.7 1125.3 289.3 1132.9 282.0C1140.5 274.7 1148.1 267.3 1155.7 260.0C1163.4 252.7 1171.1 245.3 1178.8 238.0C1186.5 230.7 1194.2 223.3 1201.9 216.0C1209.6 208.7 1217.4 201.3 1225.0 194.0C1232.6 186.7 1240.2 179.3 1247.7 172.0C1255.1 164.7 1262.4 157.3 1269.7 150.0C1277.1 142.7 1284.4 135.3 1291.8 128.0C1299.2 120.7 1306.5 113.3 1314.0 106.0C1321.4 98.7 1328.8 91.3 1336.3 84.0C1343.7 76.7 1351.2 69.3 1358.6 62.0C1366.1 54.7 1377.2 43.7 1380.9 40.0M698.2 700.0C702.1 696.3 713.5 685.3 721.4 678.0C729.4 670.7 737.7 663.3 745.7 656.0C753.8 648.7 761.8 641.3 769.7 634.0C777.6 626.7 785.3 619.3 793.2 612.0C801.0 604.7 808.9 597.3 816.7 590.0C824.6 582.7 832.5 575.3 840.3 568.0C848.1 560.7 856.0 553.3 863.7 546.0C871.4 538.7 878.9 531.3 886.4 524.0C894.0 516.7 901.5 509.3 909.1 502.0C916.7 494.7 924.2 487.3 931.8 480.0C939.4 472.7 946.9 465.3 954.5 458.0C962.1 450.7 969.7 443.3 977.3 436.0C984.8 428.7 992.4 421.3 1000.0 414.0C1007.6 406.7 1015.2 399.3 1022.8 392.0C1030.3 384.7 1037.8 377.3 1045.2 370.0C1052.7 362.7 1060.2 355.3 1067.7 348.0C1075.2 340.7 1082.7 333.3 1090.2 326.0C1097.7 318.7 1105.2 311.3 1112.7 304.0C1120.2 296.7 1127.7 289.3 1135.2 282.0C1142.7 274.7 1150.2 267.3 1157.7 260.0C1165.2 252.7 1172.8 245.3 1180.3 238.0C1187.9 230.7 1195.5 223.3 1203.0 216.0C1210.6 208.7 1218.2 201.3 1225.7 194.0C1233.2 186.7 1240.7 179.3 1248.1 172.0C1255.6 164.7 1262.9 157.3 1270.2 150.0C1277.6 142.7 1284.9 135.3 1292.2 128.0C1299.6 120.7 1307.0 113.3 1314.4 106.0C1321.8 98.7 1329.3 91.3 1336.7 84.0C1344.2 76.7 1351.6 69.3 1359.0 62.0C1366.5 54.7 1377.6 43.7 1381.4 40.0" fill="none" stroke="#4ee600" stroke-width="1.2"/>
<g mask="url(#mk)"><path d="M572.8 700.0C576.7 696.3 588.5 685.3 596.4 678.0C604.3 670.7 612.3 663.3 620.2 656.0C628.1 648.7 636.0 641.3 643.9 634.0C651.7 626.7 659.6 619.3 667.4 612.0C675.3 604.7 683.1 597.3 691.0 590.0C698.9 582.7 706.8 575.3 714.7 568.0C722.6 560.7 730.5 553.3 738.3 546.0C746.0 538.7 753.5 531.3 761.1 524.0C768.7 516.7 780.1 505.7 783.9 502.0M574.8 700.0C578.7 696.3 590.4 685.3 598.3 678.0C606.2 670.7 614.3 663.3 622.2 656.0C630.1 648.7 638.0 641.3 645.9 634.0C653.8 626.7 661.6 619.3 669.5 612.0C677.4 604.7 685.2 597.3 693.1 590.0C701.0 582.7 708.9 575.3 716.8 568.0C724.7 560.7 732.7 553.3 740.4 546.0C748.1 538.7 755.6 531.3 763.2 524.0C770.8 516.7 782.2 505.7 786.0 502.0M578.3 700.0C582.3 696.3 594.0 685.3 601.9 678.0C609.8 670.7 617.8 663.3 625.7 656.0C633.6 648.7 641.4 641.3 649.2 634.0C657.0 626.7 664.8 619.3 672.6 612.0C680.4 604.7 688.2 597.3 696.1 590.0C703.9 582.7 711.8 575.3 719.6 568.0C727.5 560.7 735.5 553.3 743.2 546.0C750.9 538.7 758.4 531.3 766.0 524.0C773.6 516.7 785.0 505.7 788.8 502.0M580.6 700.0C584.6 696.3 596.3 685.3 604.2 678.0C612.1 670.7 620.1 663.3 628.0 656.0C636.0 648.7 643.8 641.3 651.7 634.0C659.6 626.7 667.4 619.3 675.2 612.0C683.1 604.7 690.9 597.3 698.8 590.0C706.7 582.7 714.6 575.3 722.4 568.0C730.3 560.7 738.3 553.3 746.0 546.0C753.7 538.7 761.2 531.3 768.8 524.0C776.4 516.7 787.8 505.7 791.6 502.0M583.3 700.0C587.3 696.3 599.0 685.3 606.9 678.0C614.8 670.7 622.8 663.3 630.8 656.0C638.7 648.7 646.6 641.3 654.5 634.0C662.4 626.7 670.3 619.3 678.2 612.0C686.0 604.7 693.9 597.3 701.8 590.0C709.7 582.7 717.6 575.3 725.5 568.0C733.4 560.7 741.4 553.3 749.1 546.0C756.8 538.7 764.3 531.3 771.9 524.0C779.5 516.7 790.9 505.7 794.7 502.0M586.1 700.0C590.0 696.3 601.7 685.3 609.6 678.0C617.5 670.7 625.6 663.3 633.5 656.0C641.4 648.7 649.2 641.3 657.1 634.0C664.9 626.7 672.7 619.3 680.5 612.0C688.3 604.7 696.1 597.3 704.0 590.0C711.8 582.7 719.7 575.3 727.5 568.0C735.4 560.7 743.4 553.3 751.1 546.0C758.8 538.7 766.3 531.3 773.9 524.0C781.5 516.7 792.9 505.7 796.7 502.0M589.1 700.0C593.0 696.3 604.7 685.3 612.6 678.0C620.5 670.7 628.6 663.3 636.5 656.0C644.4 648.7 652.2 641.3 660.1 634.0C667.9 626.7 675.7 619.3 683.5 612.0C691.3 604.7 699.2 597.3 707.0 590.0C714.8 582.7 722.7 575.3 730.6 568.0C738.4 560.7 746.4 553.3 754.1 546.0C761.8 538.7 769.3 531.3 776.9 524.0C784.5 516.7 795.9 505.7 799.7 502.0M592.4 700.0C596.3 696.3 608.0 685.3 615.9 678.0C623.8 670.7 631.8 663.3 639.7 656.0C647.6 648.7 655.4 641.3 663.2 634.0C671.0 626.7 678.7 619.3 686.5 612.0C694.3 604.7 702.1 597.3 709.9 590.0C717.7 582.7 725.5 575.3 733.4 568.0C741.2 560.7 749.2 553.3 756.9 546.0C764.6 538.7 772.1 531.3 779.7 524.0C787.3 516.7 798.7 505.7 802.5 502.0M594.6 700.0C598.6 696.3 610.2 685.3 618.1 678.0C626.0 670.7 634.1 663.3 642.0 656.0C650.0 648.7 657.8 641.3 665.7 634.0C673.5 626.7 681.3 619.3 689.2 612.0C697.0 604.7 704.9 597.3 712.7 590.0C720.6 582.7 728.5 575.3 736.3 568.0C744.2 560.7 752.1 553.3 759.9 546.0C767.6 538.7 775.1 531.3 782.7 524.0C790.3 516.7 801.6 505.7 805.4 502.0M597.8 700.0C601.7 696.3 613.4 685.3 621.3 678.0C629.2 670.7 637.2 663.3 645.1 656.0C653.0 648.7 660.9 641.3 668.7 634.0C676.5 626.7 684.3 619.3 692.1 612.0C699.9 604.7 707.7 597.3 715.5 590.0C723.3 582.7 731.1 575.3 739.0 568.0C746.8 560.7 754.8 553.3 762.5 546.0C770.2 538.7 777.7 531.3 785.3 524.0C792.9 516.7 804.3 505.7 808.1 502.0M600.7 700.0C604.6 696.3 616.3 685.3 624.2 678.0C632.1 670.7 640.1 663.3 648.0 656.0C655.9 648.7 663.7 641.3 671.5 634.0C679.3 626.7 687.1 619.3 694.9 612.0C702.6 604.7 710.4 597.3 718.2 590.0C726.0 582.7 733.9 575.3 741.7 568.0C749.6 560.7 757.5 553.3 765.2 546.0C772.9 538.7 780.4 531.3 788.0 524.0C795.6 516.7 807.0 505.7 810.8 502.0M603.3 700.0C607.2 696.3 618.9 685.3 626.7 678.0C634.6 670.7 642.6 663.3 650.5 656.0C658.4 648.7 666.2 641.3 674.0 634.0C681.8 626.7 689.5 619.3 697.2 612.0C705.0 604.7 712.7 597.3 720.5 590.0C728.3 582.7 736.1 575.3 743.9 568.0C751.7 560.7 759.7 553.3 767.4 546.0C775.1 538.7 782.6 531.3 790.2 524.0C797.8 516.7 809.1 505.7 812.9 502.0M606.2 700.0C610.2 696.3 621.8 685.3 629.7 678.0C637.6 670.7 645.6 663.3 653.5 656.0C661.3 648.7 669.1 641.3 676.9 634.0C684.7 626.7 692.4 619.3 700.1 612.0C707.8 604.7 715.6 597.3 723.3 590.0C731.1 582.7 738.9 575.3 746.7 568.0C754.5 560.7 762.5 553.3 770.2 546.0C777.9 538.7 785.4 531.3 793.0 524.0C800.6 516.7 811.9 505.7 815.7 502.0M608.6 700.0C612.5 696.3 624.2 685.3 632.1 678.0C640.0 670.7 648.0 663.3 655.9 656.0C663.8 648.7 671.6 641.3 679.4 634.0C687.2 626.7 694.9 619.3 702.6 612.0C710.4 604.7 718.1 597.3 725.9 590.0C733.7 582.7 741.5 575.3 749.4 568.0C757.2 560.7 765.1 553.3 772.8 546.0C780.5 538.7 788.0 531.3 795.6 524.0C803.2 516.7 814.6 505.7 818.4 502.0M611.4 700.0C615.4 696.3 627.0 685.3 634.9 678.0C642.8 670.7 650.9 663.3 658.8 656.0C666.7 648.7 674.5 641.3 682.3 634.0C690.1 626.7 697.9 619.3 705.6 612.0C713.4 604.7 721.2 597.3 729.0 590.0C736.8 582.7 744.7 575.3 752.5 568.0C760.3 560.7 768.3 553.3 776.0 546.0C783.7 538.7 791.2 531.3 798.7 524.0C806.3 516.7 817.7 505.7 821.5 502.0M614.4 700.0C618.3 696.3 630.0 685.3 637.8 678.0C645.7 670.7 653.8 663.3 661.7 656.0C669.6 648.7 677.4 641.3 685.2 634.0C693.0 626.7 700.7 619.3 708.5 612.0C716.3 604.7 724.0 597.3 731.8 590.0C739.6 582.7 747.4 575.3 755.3 568.0C763.1 560.7 771.0 553.3 778.7 546.0C786.4 538.7 793.9 531.3 801.5 524.0C809.1 516.7 820.5 505.7 824.3 502.0M617.6 700.0C621.5 696.3 633.2 685.3 641.1 678.0C648.9 670.7 656.9 663.3 664.8 656.0C672.6 648.7 680.3 641.3 688.0 634.0C695.8 626.7 703.4 619.3 711.0 612.0C718.7 604.7 726.4 597.3 734.1 590.0C741.8 582.7 749.5 575.3 757.3 568.0C765.1 560.7 773.0 553.3 780.7 546.0C788.4 538.7 795.9 531.3 803.5 524.0C811.0 516.7 822.4 505.7 826.2 502.0M620.2 700.0C624.1 696.3 635.8 685.3 643.6 678.0C651.5 670.7 659.5 663.3 667.4 656.0C675.2 648.7 683.0 641.3 690.7 634.0C698.4 626.7 706.0 619.3 713.7 612.0C721.4 604.7 729.0 597.3 736.8 590.0C744.5 582.7 752.2 575.3 760.0 568.0C767.8 560.7 775.7 553.3 783.4 546.0C791.1 538.7 798.6 531.3 806.2 524.0C813.7 516.7 825.1 505.7 828.9 502.0M623.0 700.0C626.9 696.3 638.5 685.3 646.4 678.0C654.2 670.7 662.2 663.3 670.1 656.0C677.9 648.7 685.7 641.3 693.4 634.0C701.1 626.7 708.7 619.3 716.4 612.0C724.1 604.7 731.8 597.3 739.5 590.0C747.2 582.7 755.0 575.3 762.8 568.0C770.5 560.7 778.4 553.3 786.1 546.0C793.8 538.7 801.3 531.3 808.9 524.0C816.5 516.7 827.9 505.7 831.7 502.0M626.0 700.0C629.9 696.3 641.6 685.3 649.4 678.0C657.3 670.7 665.3 663.3 673.1 656.0C680.9 648.7 688.7 641.3 696.4 634.0C704.1 626.7 711.6 619.3 719.3 612.0C726.9 604.7 734.6 597.3 742.3 590.0C750.0 582.7 757.7 575.3 765.5 568.0C773.2 560.7 781.1 553.3 788.8 546.0C796.5 538.7 804.0 531.3 811.6 524.0C819.2 516.7 830.5 505.7 834.3 502.0M628.7 700.0C632.6 696.3 644.2 685.3 652.1 678.0C660.0 670.7 668.0 663.3 675.8 656.0C683.7 648.7 691.4 641.3 699.1 634.0C706.8 626.7 714.4 619.3 722.1 612.0C729.8 604.7 737.4 597.3 745.2 590.0C752.9 582.7 760.6 575.3 768.4 568.0C776.1 560.7 784.0 553.3 791.7 546.0C799.4 538.7 806.9 531.3 814.5 524.0C822.1 516.7 833.5 505.7 837.2 502.0M631.4 700.0C635.3 696.3 646.9 685.3 654.8 678.0C662.6 670.7 670.7 663.3 678.5 656.0C686.4 648.7 694.1 641.3 701.9 634.0C709.6 626.7 717.2 619.3 724.9 612.0C732.5 604.7 740.2 597.3 747.9 590.0C755.6 582.7 763.4 575.3 771.1 568.0C778.9 560.7 786.8 553.3 794.5 546.0C802.2 538.7 809.7 531.3 817.3 524.0C824.8 516.7 836.2 505.7 840.0 502.0M634.7 700.0C638.6 696.3 650.2 685.3 658.0 678.0C665.9 670.7 673.9 663.3 681.7 656.0C689.5 648.7 697.2 641.3 704.8 634.0C712.5 626.7 720.0 619.3 727.6 612.0C735.3 604.7 742.9 597.3 750.5 590.0C758.2 582.7 765.9 575.3 773.6 568.0C781.3 560.7 789.2 553.3 796.9 546.0C804.6 538.7 812.1 531.3 819.7 524.0C827.2 516.7 838.6 505.7 842.4 502.0M637.4 700.0C641.3 696.3 652.9 685.3 660.7 678.0C668.6 670.7 676.6 663.3 684.4 656.0C692.2 648.7 699.8 641.3 707.5 634.0C715.1 626.7 722.6 619.3 730.2 612.0C737.8 604.7 745.4 597.3 753.0 590.0C760.7 582.7 768.4 575.3 776.1 568.0C783.8 560.7 791.7 553.3 799.3 546.0C807.0 538.7 814.5 531.3 822.1 524.0C829.7 516.7 841.1 505.7 844.9 502.0M639.8 700.0C643.7 696.3 655.3 685.3 663.2 678.0C671.0 670.7 679.1 663.3 686.9 656.0C694.7 648.7 702.4 641.3 710.1 634.0C717.8 626.7 725.4 619.3 733.0 612.0C740.6 604.7 748.3 597.3 755.9 590.0C763.6 582.7 771.3 575.3 779.1 568.0C786.8 560.7 794.7 553.3 802.4 546.0C810.1 538.7 817.6 531.3 825.2 524.0C832.7 516.7 844.1 505.7 847.9 502.0M642.9 700.0C646.8 696.3 658.4 685.3 666.3 678.0C674.1 670.7 682.1 663.3 689.9 656.0C697.7 648.7 705.4 641.3 713.1 634.0C720.7 626.7 728.3 619.3 735.9 612.0C743.5 604.7 751.1 597.3 758.7 590.0C766.4 582.7 774.0 575.3 781.8 568.0C789.5 560.7 797.4 553.3 805.0 546.0C812.7 538.7 820.2 531.3 827.8 524.0C835.4 516.7 846.8 505.7 850.5 502.0M645.7 700.0C649.6 696.3 661.2 685.3 669.0 678.0C676.9 670.7 684.9 663.3 692.7 656.0C700.5 648.7 708.2 641.3 715.9 634.0C723.6 626.7 731.1 619.3 738.7 612.0C746.3 604.7 753.9 597.3 761.6 590.0C769.2 582.7 776.9 575.3 784.6 568.0C792.4 560.7 800.2 553.3 807.9 546.0C815.6 538.7 823.1 531.3 830.7 524.0C838.2 516.7 849.6 505.7 853.4 502.0M648.8 700.0C652.7 696.3 664.3 685.3 672.2 678.0C680.0 670.7 688.0 663.3 695.8 656.0C703.7 648.7 711.4 641.3 719.0 634.0C726.7 626.7 734.2 619.3 741.8 612.0C749.4 604.7 757.0 597.3 764.6 590.0C772.3 582.7 779.9 575.3 787.7 568.0C795.4 560.7 803.3 553.3 810.9 546.0C818.6 538.7 826.1 531.3 833.7 524.0C841.3 516.7 852.6 505.7 856.4 502.0M651.5 700.0C655.4 696.3 667.0 685.3 674.8 678.0C682.7 670.7 690.7 663.3 698.5 656.0C706.4 648.7 714.1 641.3 721.7 634.0C729.4 626.7 736.9 619.3 744.5 612.0C752.1 604.7 759.7 597.3 767.4 590.0C775.0 582.7 782.7 575.3 790.4 568.0C798.2 560.7 806.0 553.3 813.7 546.0C821.4 538.7 828.9 531.3 836.4 524.0C844.0 516.7 855.4 505.7 859.2 502.0M653.9 700.0C657.8 696.3 669.4 685.3 677.3 678.0C685.1 670.7 693.2 663.3 701.1 656.0C708.9 648.7 716.7 641.3 724.4 634.0C732.1 626.7 739.7 619.3 747.3 612.0C755.0 604.7 762.6 597.3 770.3 590.0C778.0 582.7 785.7 575.3 793.5 568.0C801.2 560.7 809.1 553.3 816.8 546.0C824.5 538.7 832.0 531.3 839.5 524.0C847.1 516.7 858.5 505.7 862.3 502.0M657.4 700.0C661.3 696.3 672.8 685.3 680.7 678.0C688.6 670.7 696.6 663.3 704.5 656.0C712.3 648.7 720.1 641.3 727.8 634.0C735.5 626.7 743.1 619.3 750.7 612.0C758.4 604.7 766.0 597.3 773.7 590.0C781.4 582.7 789.1 575.3 796.8 568.0C804.6 560.7 812.5 553.3 820.1 546.0C827.8 538.7 835.3 531.3 842.9 524.0C850.4 516.7 861.8 505.7 865.6 502.0M659.4 700.0C663.3 696.3 674.9 685.3 682.8 678.0C690.6 670.7 698.8 663.3 706.7 656.0C714.6 648.7 722.5 641.3 730.3 634.0C738.1 626.7 745.7 619.3 753.5 612.0C761.2 604.7 768.9 597.3 776.7 590.0C784.5 582.7 792.3 575.3 800.1 568.0C807.8 560.7 815.8 553.3 823.4 546.0C831.1 538.7 838.6 531.3 846.2 524.0C853.7 516.7 865.1 505.7 868.9 502.0M662.5 700.0C666.4 696.3 678.0 685.3 685.8 678.0C693.7 670.7 701.9 663.3 709.8 656.0C717.7 648.7 725.5 641.3 733.2 634.0C741.0 626.7 748.6 619.3 756.3 612.0C764.1 604.7 771.8 597.3 779.5 590.0C787.2 582.7 795.0 575.3 802.8 568.0C810.5 560.7 818.5 553.3 826.1 546.0C833.8 538.7 841.3 531.3 848.9 524.0C856.4 516.7 867.8 505.7 871.6 502.0M665.6 700.0C669.5 696.3 681.1 685.3 689.0 678.0C696.9 670.7 705.1 663.3 713.1 656.0C721.1 648.7 729.0 641.3 736.9 634.0C744.8 626.7 752.6 619.3 760.4 612.0C768.2 604.7 776.0 597.3 783.9 590.0C791.7 582.7 799.6 575.3 807.4 568.0C815.3 560.7 823.2 553.3 830.9 546.0C838.6 538.7 846.0 531.3 853.6 524.0C861.2 516.7 872.5 505.7 876.3 502.0M667.9 700.0C671.8 696.3 683.3 685.3 691.3 678.0C699.2 670.7 707.5 663.3 715.6 656.0C723.7 648.7 731.7 641.3 739.7 634.0C747.7 626.7 755.6 619.3 763.5 612.0C771.5 604.7 779.4 597.3 787.3 590.0C795.3 582.7 803.2 575.3 811.1 568.0C819.0 560.7 827.0 553.3 834.7 546.0C842.4 538.7 849.8 531.3 857.4 524.0C865.0 516.7 876.3 505.7 880.1 502.0M671.0 700.0C674.9 696.3 686.5 685.3 694.4 678.0C702.4 670.7 710.7 663.3 718.8 656.0C727.0 648.7 735.1 641.3 743.1 634.0C751.2 626.7 759.1 619.3 767.1 612.0C775.1 604.7 783.1 597.3 791.1 590.0C799.1 582.7 807.1 575.3 815.0 568.0C823.0 560.7 830.9 553.3 838.6 546.0C846.4 538.7 853.8 531.3 861.4 524.0C868.9 516.7 880.3 505.7 884.1 502.0M673.5 700.0C677.4 696.3 688.9 685.3 696.9 678.0C704.9 670.7 713.3 663.3 721.5 656.0C729.6 648.7 737.9 641.3 746.0 634.0C754.2 626.7 762.2 619.3 770.3 612.0C778.4 604.7 786.5 597.3 794.6 590.0C802.7 582.7 810.8 575.3 818.8 568.0C826.7 560.7 834.7 553.3 842.5 546.0C850.2 538.7 857.6 531.3 865.2 524.0C872.7 516.7 884.1 505.7 887.9 502.0M676.8 700.0C680.7 696.3 692.2 685.3 700.2 678.0C708.2 670.7 716.7 663.3 724.9 656.0C733.1 648.7 741.3 641.3 749.5 634.0C757.6 626.7 765.7 619.3 773.8 612.0C781.9 604.7 790.0 597.3 798.1 590.0C806.2 582.7 814.3 575.3 822.3 568.0C830.3 560.7 838.3 553.3 846.0 546.0C853.7 538.7 861.1 531.3 868.7 524.0C876.3 516.7 887.6 505.7 891.4 502.0M679.8 700.0C683.7 696.3 695.1 685.3 703.2 678.0C711.2 670.7 719.7 663.3 727.9 656.0C736.2 648.7 744.5 641.3 752.7 634.0C760.9 626.7 769.1 619.3 777.3 612.0C785.5 604.7 793.7 597.3 801.8 590.0C809.9 582.7 818.1 575.3 826.1 568.0C834.1 560.7 842.1 553.3 849.9 546.0C857.6 538.7 865.0 531.3 872.6 524.0C880.2 516.7 891.5 505.7 895.3 502.0M682.4 700.0C686.3 696.3 697.8 685.3 705.8 678.0C713.9 670.7 722.4 663.3 730.7 656.0C739.0 648.7 747.4 641.3 755.7 634.0C764.0 626.7 772.2 619.3 780.5 612.0C788.7 604.7 797.0 597.3 805.2 590.0C813.4 582.7 821.6 575.3 829.7 568.0C837.7 560.7 845.7 553.3 853.5 546.0C861.3 538.7 868.6 531.3 876.2 524.0C883.8 516.7 895.1 505.7 898.9 502.0M687.7 700.0C691.6 696.3 703.0 685.3 711.1 678.0C719.1 670.7 727.6 663.3 735.9 656.0C744.1 648.7 752.5 641.3 760.7 634.0C768.9 626.7 777.1 619.3 785.3 612.0C793.4 604.7 801.6 597.3 809.8 590.0C817.9 582.7 826.1 575.3 834.1 568.0C842.1 560.7 850.1 553.3 857.9 546.0C865.6 538.7 873.0 531.3 880.6 524.0C888.1 516.7 899.5 505.7 903.3 502.0M692.2 700.0C696.1 696.3 707.6 685.3 715.6 678.0C723.6 670.7 732.0 663.3 740.2 656.0C748.4 648.7 756.7 641.3 764.8 634.0C773.0 626.7 781.0 619.3 789.1 612.0C797.2 604.7 805.4 597.3 813.4 590.0C821.5 582.7 829.6 575.3 837.6 568.0C845.5 560.7 853.5 553.3 861.2 546.0C869.0 538.7 876.4 531.3 883.9 524.0C891.5 516.7 902.8 505.7 906.6 502.0M699.6 700.0C703.5 696.3 714.9 685.3 722.8 678.0C730.8 670.7 739.1 663.3 747.1 656.0C755.2 648.7 763.2 641.3 771.1 634.0C779.0 626.7 786.7 619.3 794.6 612.0C802.4 604.7 810.3 597.3 818.1 590.0C826.0 582.7 833.9 575.3 841.7 568.0C849.5 560.7 857.4 553.3 865.1 546.0C872.8 538.7 880.3 531.3 887.8 524.0C895.4 516.7 906.7 505.7 910.5 502.0" fill="none" stroke="#4ee600" stroke-width="1.2"/></g>
<g mask="url(#mk2)"><path d="M738.3 546.0C742.1 542.3 753.5 531.3 761.1 524.0C768.7 516.7 776.2 509.3 784.0 502.0C791.7 494.7 799.8 487.3 807.8 480.0C815.7 472.7 823.6 465.3 831.5 458.0C839.4 450.7 847.3 443.3 855.2 436.0C863.1 428.7 871.0 421.3 879.0 414.0C886.9 406.7 894.8 399.3 902.7 392.0C910.7 384.7 918.7 377.3 926.5 370.0C934.2 362.7 941.7 355.3 949.2 348.0C956.6 340.7 963.7 333.3 971.0 326.0C978.3 318.7 989.3 307.7 992.9 304.0M740.4 546.0C744.2 542.3 755.6 531.3 763.2 524.0C770.9 516.7 778.2 509.3 786.1 502.0C793.9 494.7 802.1 487.3 810.1 480.0C818.2 472.7 826.2 465.3 834.2 458.0C842.2 450.7 850.2 443.3 858.2 436.0C866.2 428.7 874.2 421.3 882.2 414.0C890.3 406.7 898.3 399.3 906.3 392.0C914.3 384.7 922.5 377.3 930.3 370.0C938.2 362.7 945.8 355.3 953.4 348.0C960.9 340.7 968.2 333.3 975.6 326.0C983.0 318.7 994.1 307.7 997.9 304.0M743.2 546.0C747.0 542.3 758.4 531.3 766.0 524.0C773.6 516.7 781.2 509.3 788.8 502.0C796.5 494.7 804.1 487.3 811.8 480.0C819.4 472.7 827.1 465.3 834.8 458.0C842.5 450.7 850.3 443.3 858.1 436.0C865.9 428.7 873.7 421.3 881.6 414.0C889.5 406.7 897.4 399.3 905.4 392.0C913.3 384.7 921.5 377.3 929.3 370.0C937.2 362.7 944.9 355.3 952.5 348.0C960.1 340.7 967.5 333.3 975.1 326.0C982.7 318.7 994.1 307.7 997.9 304.0M746.0 546.0C749.8 542.3 761.2 531.3 768.8 524.0C776.4 516.7 784.0 509.3 791.7 502.0C799.3 494.7 806.9 487.3 814.6 480.0C822.2 472.7 829.9 465.3 837.6 458.0C845.3 450.7 853.0 443.3 860.8 436.0C868.6 428.7 876.4 421.3 884.2 414.0C892.1 406.7 900.0 399.3 907.9 392.0C915.8 384.7 923.9 377.3 931.7 370.0C939.5 362.7 947.2 355.3 954.7 348.0C962.3 340.7 969.7 333.3 977.2 326.0C984.7 318.7 996.1 307.7 999.9 304.0M749.2 546.0C753.0 542.3 764.4 531.3 772.0 524.0C779.6 516.7 787.1 509.3 794.8 502.0C802.4 494.7 810.0 487.3 817.7 480.0C825.3 472.7 832.9 465.3 840.6 458.0C848.3 450.7 856.0 443.3 863.8 436.0C871.5 428.7 879.3 421.3 887.1 414.0C894.9 406.7 902.8 399.3 910.7 392.0C918.5 384.7 926.6 377.3 934.4 370.0C942.1 362.7 949.7 355.3 957.2 348.0C964.8 340.7 972.1 333.3 979.5 326.0C987.0 318.7 998.3 307.7 1002.0 304.0M751.1 546.0C754.9 542.3 766.3 531.3 773.9 524.0C781.5 516.7 789.1 509.3 796.7 502.0C804.4 494.7 812.0 487.3 819.6 480.0C827.3 472.7 834.9 465.3 842.6 458.0C850.2 450.7 857.9 443.3 865.7 436.0C873.4 428.7 881.1 421.3 888.9 414.0C896.7 406.7 904.6 399.3 912.4 392.0C920.3 384.7 928.3 377.3 936.0 370.0C943.7 362.7 951.3 355.3 958.8 348.0C966.3 340.7 973.6 333.3 981.0 326.0C988.4 318.7 999.7 307.7 1003.4 304.0M754.1 546.0C757.9 542.3 769.3 531.3 776.9 524.0C784.5 516.7 792.1 509.3 799.7 502.0C807.4 494.7 815.0 487.3 822.6 480.0C830.3 472.7 837.9 465.3 845.5 458.0C853.2 450.7 860.8 443.3 868.6 436.0C876.3 428.7 884.0 421.3 891.7 414.0C899.5 406.7 907.3 399.3 915.1 392.0C922.9 384.7 930.9 377.3 938.6 370.0C946.2 362.7 953.7 355.3 961.2 348.0C968.6 340.7 975.9 333.3 983.2 326.0C990.6 318.7 1001.7 307.7 1005.4 304.0M756.9 546.0C760.7 542.3 772.1 531.3 779.7 524.0C787.3 516.7 794.9 509.3 802.5 502.0C810.1 494.7 817.8 487.3 825.4 480.0C833.0 472.7 840.6 465.3 848.2 458.0C855.9 450.7 863.5 443.3 871.2 436.0C878.9 428.7 886.6 421.3 894.3 414.0C902.1 406.7 909.8 399.3 917.6 392.0C925.4 384.7 933.3 377.3 940.9 370.0C948.6 362.7 956.1 355.3 963.5 348.0C970.9 340.7 978.0 333.3 985.4 326.0C992.7 318.7 1003.7 307.7 1007.4 304.0M759.9 546.0C763.7 542.3 775.1 531.3 782.7 524.0C790.3 516.7 797.9 509.3 805.5 502.0C813.1 494.7 820.7 487.3 828.4 480.0C836.0 472.7 843.6 465.3 851.3 458.0C859.0 450.7 866.7 443.3 874.4 436.0C882.1 428.7 889.8 421.3 897.6 414.0C905.4 406.7 913.2 399.3 921.1 392.0C928.9 384.7 936.9 377.3 944.6 370.0C952.3 362.7 959.9 355.3 967.4 348.0C974.9 340.7 982.2 333.3 989.6 326.0C997.0 318.7 1008.3 307.7 1012.0 304.0M762.5 546.0C766.3 542.3 777.7 531.3 785.3 524.0C792.9 516.7 800.5 509.3 808.1 502.0C815.7 494.7 823.4 487.3 831.0 480.0C838.6 472.7 846.2 465.3 853.9 458.0C861.5 450.7 869.2 443.3 876.9 436.0C884.6 428.7 892.3 421.3 900.1 414.0C907.8 406.7 915.6 399.3 923.4 392.0C931.2 384.7 939.1 377.3 946.8 370.0C954.5 362.7 962.0 355.3 969.4 348.0C976.9 340.7 984.2 333.3 991.5 326.0C998.9 318.7 1010.1 307.7 1013.8 304.0M765.3 546.0C769.1 542.3 780.5 531.3 788.1 524.0C795.6 516.7 803.2 509.3 810.8 502.0C818.4 494.7 826.1 487.3 833.7 480.0C841.3 472.7 848.9 465.3 856.5 458.0C864.2 450.7 871.8 443.3 879.5 436.0C887.2 428.7 894.9 421.3 902.6 414.0C910.3 406.7 918.1 399.3 925.8 392.0C933.6 384.7 941.5 377.3 949.1 370.0C956.7 362.7 964.2 355.3 971.6 348.0C979.1 340.7 986.3 333.3 993.6 326.0C1001.0 318.7 1012.0 307.7 1015.7 304.0M767.4 546.0C771.2 542.3 782.6 531.3 790.2 524.0C797.8 516.7 805.4 509.3 813.0 502.0C820.6 494.7 828.2 487.3 835.8 480.0C843.4 472.7 851.0 465.3 858.7 458.0C866.3 450.7 873.9 443.3 881.6 436.0C889.2 428.7 896.9 421.3 904.6 414.0C912.3 406.7 920.0 399.3 927.8 392.0C935.5 384.7 943.3 377.3 950.9 370.0C958.5 362.7 966.0 355.3 973.4 348.0C980.7 340.7 987.9 333.3 995.2 326.0C1002.5 318.7 1013.5 307.7 1017.2 304.0M770.2 546.0C774.0 542.3 785.4 531.3 793.0 524.0C800.6 516.7 808.2 509.3 815.8 502.0C823.4 494.7 831.0 487.3 838.6 480.0C846.2 472.7 853.8 465.3 861.4 458.0C869.0 450.7 876.6 443.3 884.3 436.0C891.9 428.7 899.6 421.3 907.2 414.0C914.9 406.7 922.6 399.3 930.3 392.0C938.0 384.7 945.8 377.3 953.3 370.0C960.9 362.7 968.3 355.3 975.6 348.0C983.0 340.7 990.1 333.3 997.4 326.0C1004.6 318.7 1015.5 307.7 1019.2 304.0M772.9 546.0C776.7 542.3 788.1 531.3 795.6 524.0C803.2 516.7 810.8 509.3 818.4 502.0C826.0 494.7 833.7 487.3 841.3 480.0C848.9 472.7 856.5 465.3 864.1 458.0C871.8 450.7 879.4 443.3 887.1 436.0C894.8 428.7 902.5 421.3 910.2 414.0C917.9 406.7 925.7 399.3 933.4 392.0C941.2 384.7 949.0 377.3 956.7 370.0C964.3 362.7 971.8 355.3 979.3 348.0C986.7 340.7 994.0 333.3 1001.3 326.0C1008.7 318.7 1019.8 307.7 1023.5 304.0M776.0 546.0C779.8 542.3 791.2 531.3 798.8 524.0C806.4 516.7 814.0 509.3 821.6 502.0C829.2 494.7 836.8 487.3 844.4 480.0C852.0 472.7 859.6 465.3 867.2 458.0C874.8 450.7 882.5 443.3 890.1 436.0C897.8 428.7 905.4 421.3 913.1 414.0C920.8 406.7 928.5 399.3 936.2 392.0C943.9 384.7 951.7 377.3 959.3 370.0C966.9 362.7 974.4 355.3 981.8 348.0C989.1 340.7 996.3 333.3 1003.7 326.0C1011.0 318.7 1022.0 307.7 1025.7 304.0M778.8 546.0C782.6 542.3 794.0 531.3 801.5 524.0C809.1 516.7 816.7 509.3 824.3 502.0C831.9 494.7 839.5 487.3 847.1 480.0C854.7 472.7 862.3 465.3 869.9 458.0C877.5 450.7 885.1 443.3 892.8 436.0C900.4 428.7 908.0 421.3 915.7 414.0C923.3 406.7 931.0 399.3 938.7 392.0C946.4 384.7 954.1 377.3 961.7 370.0C969.2 362.7 976.6 355.3 983.9 348.0C991.3 340.7 998.4 333.3 1005.7 326.0C1013.0 318.7 1023.9 307.7 1027.5 304.0M780.7 546.0C784.5 542.3 795.9 531.3 803.5 524.0C811.1 516.7 818.7 509.3 826.3 502.0C833.9 494.7 841.5 487.3 849.1 480.0C856.7 472.7 864.2 465.3 871.8 458.0C879.4 450.7 887.0 443.3 894.6 436.0C902.2 428.7 909.9 421.3 917.5 414.0C925.1 406.7 932.8 399.3 940.4 392.0C948.1 384.7 955.8 377.3 963.3 370.0C970.8 362.7 978.2 355.3 985.5 348.0C992.8 340.7 999.9 333.3 1007.2 326.0C1014.4 318.7 1025.3 307.7 1028.9 304.0M783.4 546.0C787.2 542.3 798.6 531.3 806.2 524.0C813.8 516.7 821.4 509.3 829.0 502.0C836.6 494.7 844.2 487.3 851.8 480.0C859.4 472.7 866.9 465.3 874.5 458.0C882.1 450.7 889.6 443.3 897.2 436.0C904.8 428.7 912.4 421.3 920.0 414.0C927.6 406.7 935.3 399.3 942.9 392.0C950.5 384.7 958.1 377.3 965.6 370.0C973.1 362.7 980.4 355.3 987.7 348.0C994.9 340.7 1002.0 333.3 1009.2 326.0C1016.4 318.7 1027.2 307.7 1030.8 304.0M786.2 546.0C790.0 542.3 801.4 531.3 808.9 524.0C816.5 516.7 824.1 509.3 831.7 502.0C839.3 494.7 846.9 487.3 854.5 480.0C862.1 472.7 869.7 465.3 877.3 458.0C884.9 450.7 892.5 443.3 900.1 436.0C907.8 428.7 915.4 421.3 923.1 414.0C930.7 406.7 938.4 399.3 946.1 392.0C953.8 384.7 961.5 377.3 969.1 370.0C976.6 362.7 984.0 355.3 991.4 348.0C998.8 340.7 1006.0 333.3 1013.3 326.0C1020.6 318.7 1031.6 307.7 1035.2 304.0M788.9 546.0C792.7 542.3 804.0 531.3 811.6 524.0C819.2 516.7 826.8 509.3 834.4 502.0C842.0 494.7 849.6 487.3 857.2 480.0C864.8 472.7 872.3 465.3 879.9 458.0C887.5 450.7 895.1 443.3 902.7 436.0C910.3 428.7 918.0 421.3 925.6 414.0C933.2 406.7 940.9 399.3 948.5 392.0C956.2 384.7 963.9 377.3 971.4 370.0C978.9 362.7 986.3 355.3 993.6 348.0C1000.9 340.7 1008.1 333.3 1015.3 326.0C1022.6 318.7 1033.5 307.7 1037.2 304.0M791.8 546.0C795.6 542.3 806.9 531.3 814.5 524.0C822.1 516.7 829.7 509.3 837.3 502.0C844.9 494.7 852.5 487.3 860.1 480.0C867.7 472.7 875.2 465.3 882.8 458.0C890.4 450.7 897.9 443.3 905.5 436.0C913.1 428.7 920.7 421.3 928.3 414.0C935.9 406.7 943.5 399.3 951.1 392.0C958.7 384.7 966.3 377.3 973.8 370.0C981.3 362.7 988.6 355.3 995.9 348.0C1003.2 340.7 1010.3 333.3 1017.5 326.0C1024.7 318.7 1035.5 307.7 1039.1 304.0M794.6 546.0C798.3 542.3 809.7 531.3 817.3 524.0C824.9 516.7 832.5 509.3 840.1 502.0C847.7 494.7 855.3 487.3 862.8 480.0C870.4 472.7 877.9 465.3 885.5 458.0C893.1 450.7 900.6 443.3 908.2 436.0C915.7 428.7 923.3 421.3 930.9 414.0C938.4 406.7 946.0 399.3 953.6 392.0C961.1 384.7 968.7 377.3 976.2 370.0C983.6 362.7 990.9 355.3 998.1 348.0C1005.4 340.7 1012.4 333.3 1019.6 326.0C1026.7 318.7 1037.5 307.7 1041.1 304.0M796.9 546.0C800.7 542.3 812.1 531.3 819.7 524.0C827.3 516.7 834.9 509.3 842.5 502.0C850.0 494.7 857.7 487.3 865.2 480.0C872.8 472.7 880.4 465.3 888.0 458.0C895.6 450.7 903.2 443.3 910.8 436.0C918.4 428.7 926.0 421.3 933.6 414.0C941.3 406.7 949.0 399.3 956.6 392.0C964.2 384.7 971.9 377.3 979.4 370.0C986.9 362.7 994.3 355.3 1001.7 348.0C1009.0 340.7 1016.2 333.3 1023.5 326.0C1030.8 318.7 1041.8 307.7 1045.4 304.0M799.4 546.0C803.2 542.3 814.6 531.3 822.2 524.0C829.7 516.7 837.3 509.3 844.9 502.0C852.5 494.7 860.1 487.3 867.7 480.0C875.3 472.7 882.8 465.3 890.4 458.0C898.0 450.7 905.6 443.3 913.1 436.0C920.7 428.7 928.3 421.3 935.9 414.0C943.5 406.7 951.2 399.3 958.8 392.0C966.4 384.7 974.0 377.3 981.5 370.0C989.0 362.7 996.3 355.3 1003.6 348.0C1010.9 340.7 1018.1 333.3 1025.4 326.0C1032.6 318.7 1043.5 307.7 1047.1 304.0M802.5 546.0C806.2 542.3 817.6 531.3 825.2 524.0C832.8 516.7 840.4 509.3 848.0 502.0C855.5 494.7 863.1 487.3 870.7 480.0C878.3 472.7 885.8 465.3 893.4 458.0C901.0 450.7 908.5 443.3 916.1 436.0C923.6 428.7 931.2 421.3 938.8 414.0C946.3 406.7 954.0 399.3 961.5 392.0C969.1 384.7 976.6 377.3 984.1 370.0C991.5 362.7 998.8 355.3 1006.1 348.0C1013.4 340.7 1020.5 333.3 1027.7 326.0C1034.9 318.7 1045.7 307.7 1049.3 304.0M805.1 546.0C808.9 542.3 820.3 531.3 827.8 524.0C835.4 516.7 843.0 509.3 850.6 502.0C858.2 494.7 865.8 487.3 873.3 480.0C880.9 472.7 888.4 465.3 896.0 458.0C903.5 450.7 911.1 443.3 918.6 436.0C926.2 428.7 933.7 421.3 941.2 414.0C948.8 406.7 956.4 399.3 963.9 392.0C971.4 384.7 978.9 377.3 986.3 370.0C993.7 362.7 1001.0 355.3 1008.2 348.0C1015.4 340.7 1022.5 333.3 1029.7 326.0C1036.8 318.7 1047.5 307.7 1051.1 304.0" fill="none" stroke="#4ee600" stroke-width="1.2"/></g>
<path d="M492.0 700.0C496.0 696.3 507.9 685.3 515.8 678.0C523.7 670.7 531.7 663.3 539.6 656.0C547.6 648.7 555.5 641.3 563.4 634.0C571.4 626.7 579.4 619.3 587.4 612.0C595.4 604.7 603.4 597.3 611.4 590.0C619.4 582.7 627.5 575.3 635.5 568.0C643.4 560.7 651.5 553.3 659.2 546.0C667.0 538.7 674.5 531.3 682.1 524.0C689.8 516.7 697.4 509.3 705.0 502.0C712.7 494.7 720.3 487.3 727.9 480.0C735.5 472.7 743.0 465.3 750.5 458.0C758.0 450.7 765.6 443.3 773.1 436.0C780.6 428.7 788.1 421.3 795.7 414.0C803.2 406.7 810.8 399.3 818.3 392.0C825.9 384.7 833.8 377.3 841.1 370.0C848.5 362.7 855.4 355.3 862.2 348.0C869.0 340.7 875.3 333.3 881.8 326.0C888.4 318.7 894.8 311.3 901.4 304.0C908.1 296.7 914.9 289.3 921.6 282.0C928.4 274.7 934.9 267.3 942.0 260.0C949.1 252.7 956.2 245.3 964.1 238.0C972.0 230.7 980.9 223.3 989.3 216.0C997.7 208.7 1006.1 201.3 1014.7 194.0C1023.3 186.7 1032.1 179.3 1040.8 172.0C1049.5 164.7 1058.2 157.3 1066.9 150.0C1075.7 142.7 1084.4 135.3 1093.1 128.0C1101.8 120.7 1110.5 113.3 1119.2 106.0C1127.9 98.7 1136.7 91.3 1145.3 84.0C1153.9 76.7 1162.4 69.3 1171.0 62.0C1179.5 54.7 1192.4 43.7 1196.6 40.0M503.9 700.0C507.9 696.3 519.7 685.3 527.7 678.0C535.6 670.7 543.6 663.3 551.5 656.0C559.5 648.7 567.4 641.3 575.4 634.0C583.4 626.7 591.4 619.3 599.4 612.0C607.4 604.7 615.4 597.3 623.4 590.0C631.4 582.7 639.5 575.3 647.4 568.0C655.4 560.7 663.5 553.3 671.2 546.0C679.0 538.7 686.5 531.3 694.1 524.0C701.7 516.7 709.4 509.3 717.0 502.0C724.6 494.7 732.0 487.3 739.5 480.0C746.9 472.7 754.3 465.3 761.7 458.0C769.1 450.7 776.4 443.3 783.8 436.0C791.2 428.7 798.6 421.3 806.0 414.0C813.4 406.7 820.8 399.3 828.2 392.0C835.7 384.7 843.4 377.3 850.6 370.0C857.8 362.7 864.7 355.3 871.3 348.0C878.0 340.7 884.2 333.3 890.6 326.0C897.1 318.7 903.4 311.3 909.9 304.0C916.4 296.7 923.1 289.3 929.8 282.0C936.4 274.7 942.8 267.3 949.8 260.0C956.7 252.7 963.7 245.3 971.5 238.0C979.2 230.7 987.9 223.3 996.1 216.0C1004.4 208.7 1012.5 201.3 1021.0 194.0C1029.4 186.7 1038.2 179.3 1046.8 172.0C1055.5 164.7 1064.2 157.3 1072.8 150.0C1081.5 142.7 1090.2 135.3 1098.9 128.0C1107.5 120.7 1116.2 113.3 1124.9 106.0C1133.6 98.7 1142.3 91.3 1150.9 84.0C1159.5 76.7 1167.9 69.3 1176.4 62.0C1185.0 54.7 1197.7 43.7 1202.0 40.0M508.4 700.0C512.3 696.3 524.2 685.3 532.1 678.0C540.0 670.7 548.0 663.3 555.9 656.0C563.8 648.7 571.7 641.3 579.7 634.0C587.6 626.7 595.6 619.3 603.5 612.0C611.5 604.7 619.5 597.3 627.5 590.0C635.4 582.7 643.4 575.3 651.4 568.0C659.3 560.7 667.4 553.3 675.1 546.0C682.9 538.7 690.4 531.3 698.0 524.0C705.6 516.7 713.3 509.3 720.9 502.0C728.5 494.7 736.0 487.3 743.5 480.0C751.0 472.7 758.4 465.3 765.8 458.0C773.3 450.7 780.7 443.3 788.1 436.0C795.6 428.7 803.0 421.3 810.5 414.0C817.9 406.7 825.4 399.3 832.9 392.0C840.3 384.7 848.1 377.3 855.4 370.0C862.6 362.7 869.5 355.3 876.3 348.0C883.0 340.7 889.3 333.3 895.8 326.0C902.3 318.7 908.7 311.3 915.3 304.0C921.9 296.7 928.7 289.3 935.4 282.0C942.1 274.7 948.6 267.3 955.6 260.0C962.6 252.7 969.7 245.3 977.4 238.0C985.2 230.7 993.9 223.3 1002.2 216.0C1010.5 208.7 1018.6 201.3 1027.1 194.0C1035.6 186.7 1044.3 179.3 1052.9 172.0C1061.5 164.7 1070.2 157.3 1078.8 150.0C1087.4 142.7 1096.1 135.3 1104.7 128.0C1113.3 120.7 1122.0 113.3 1130.6 106.0C1139.2 98.7 1147.9 91.3 1156.5 84.0C1165.0 76.7 1173.4 69.3 1181.9 62.0C1190.4 54.7 1203.2 43.7 1207.4 40.0M511.9 700.0C515.8 696.3 527.7 685.3 535.6 678.0C543.6 670.7 551.6 663.3 559.5 656.0C567.5 648.7 575.5 641.3 583.5 634.0C591.5 626.7 599.5 619.3 607.5 612.0C615.5 604.7 623.6 597.3 631.6 590.0C639.6 582.7 647.7 575.3 655.7 568.0C663.6 560.7 671.7 553.3 679.5 546.0C687.2 538.7 694.7 531.3 702.3 524.0C710.0 516.7 717.6 509.3 725.2 502.0C732.8 494.7 740.4 487.3 747.9 480.0C755.5 472.7 762.9 465.3 770.4 458.0C777.9 450.7 785.3 443.3 792.8 436.0C800.3 428.7 807.7 421.3 815.2 414.0C822.7 406.7 830.2 399.3 837.7 392.0C845.3 384.7 853.1 377.3 860.4 370.0C867.6 362.7 874.6 355.3 881.4 348.0C888.2 340.7 894.5 333.3 901.1 326.0C907.6 318.7 914.1 311.3 920.8 304.0C927.4 296.7 934.3 289.3 941.0 282.0C947.8 274.7 954.3 267.3 961.4 260.0C968.5 252.7 975.6 245.3 983.4 238.0C991.2 230.7 999.9 223.3 1008.2 216.0C1016.5 208.7 1024.7 201.3 1033.1 194.0C1041.6 186.7 1050.3 179.3 1058.9 172.0C1067.4 164.7 1076.1 157.3 1084.7 150.0C1093.3 142.7 1101.9 135.3 1110.5 128.0C1119.1 120.7 1127.7 113.3 1136.3 106.0C1144.9 98.7 1153.5 91.3 1162.1 84.0C1170.6 76.7 1179.0 69.3 1187.4 62.0C1195.9 54.7 1208.6 43.7 1212.8 40.0M516.3 700.0C520.3 696.3 532.1 685.3 540.0 678.0C548.0 670.7 556.0 663.3 563.9 656.0C571.9 648.7 579.8 641.3 587.8 634.0C595.8 626.7 603.8 619.3 611.8 612.0C619.8 604.7 627.8 597.3 635.8 590.0C643.8 582.7 651.8 575.3 659.8 568.0C667.8 560.7 675.8 553.3 683.6 546.0C691.3 538.7 698.8 531.3 706.4 524.0C714.0 516.7 721.7 509.3 729.3 502.0C736.9 494.7 744.6 487.3 752.1 480.0C759.7 472.7 767.2 465.3 774.7 458.0C782.2 450.7 789.8 443.3 797.3 436.0C804.8 428.7 812.3 421.3 819.8 414.0C827.4 406.7 834.9 399.3 842.5 392.0C850.0 384.7 857.9 377.3 865.2 370.0C872.5 362.7 879.6 355.3 886.4 348.0C893.2 340.7 899.7 333.3 906.3 326.0C912.9 318.7 919.5 311.3 926.2 304.0C932.9 296.7 939.8 289.3 946.6 282.0C953.5 274.7 960.1 267.3 967.2 260.0C974.3 252.7 981.5 245.3 989.3 238.0C997.2 230.7 1005.9 223.3 1014.2 216.0C1022.5 208.7 1030.7 201.3 1039.2 194.0C1047.6 186.7 1056.3 179.3 1064.9 172.0C1073.4 164.7 1082.0 157.3 1090.6 150.0C1099.2 142.7 1107.7 135.3 1116.3 128.0C1124.9 120.7 1133.4 113.3 1142.0 106.0C1150.6 98.7 1159.2 91.3 1167.6 84.0C1176.1 76.7 1184.5 69.3 1192.9 62.0C1201.3 54.7 1214.0 43.7 1218.2 40.0M520.2 700.0C524.1 696.3 536.0 685.3 543.9 678.0C551.8 670.7 559.8 663.3 567.8 656.0C575.7 648.7 583.6 641.3 591.6 634.0C599.5 626.7 607.5 619.3 615.5 612.0C623.5 604.7 631.5 597.3 639.4 590.0C647.4 582.7 655.4 575.3 663.4 568.0C671.3 560.7 679.4 553.3 687.1 546.0C694.9 538.7 702.4 531.3 710.0 524.0C717.6 516.7 725.2 509.3 732.9 502.0C740.5 494.7 748.2 487.3 755.8 480.0C763.5 472.7 771.0 465.3 778.6 458.0C786.2 450.7 793.8 443.3 801.3 436.0C808.9 428.7 816.5 421.3 824.1 414.0C831.7 406.7 839.3 399.3 846.9 392.0C854.5 384.7 862.4 377.3 869.8 370.0C877.2 362.7 884.3 355.3 891.2 348.0C898.1 340.7 904.6 333.3 911.3 326.0C918.0 318.7 924.7 311.3 931.5 304.0C938.3 296.7 945.2 289.3 952.1 282.0C959.0 274.7 965.7 267.3 972.9 260.0C980.1 252.7 987.4 245.3 995.2 238.0C1003.1 230.7 1011.9 223.3 1020.2 216.0C1028.5 208.7 1036.8 201.3 1045.3 194.0C1053.7 186.7 1062.4 179.3 1070.9 172.0C1079.5 164.7 1088.0 157.3 1096.6 150.0C1105.1 142.7 1113.7 135.3 1122.2 128.0C1130.7 120.7 1139.3 113.3 1147.8 106.0C1156.3 98.7 1164.9 91.3 1173.3 84.0C1181.8 76.7 1190.1 69.3 1198.5 62.0C1206.9 54.7 1219.5 43.7 1223.7 40.0M523.9 700.0C527.9 696.3 539.7 685.3 547.6 678.0C555.6 670.7 563.6 663.3 571.6 656.0C579.5 648.7 587.5 641.3 595.5 634.0C603.5 626.7 611.5 619.3 619.5 612.0C627.5 604.7 635.5 597.3 643.5 590.0C651.5 582.7 659.6 575.3 667.5 568.0C675.5 560.7 683.5 553.3 691.3 546.0C699.1 538.7 706.5 531.3 714.2 524.0C721.8 516.7 729.4 509.3 737.0 502.0C744.7 494.7 752.5 487.3 760.1 480.0C767.8 472.7 775.4 465.3 783.0 458.0C790.6 450.7 798.2 443.3 805.9 436.0C813.5 428.7 821.1 421.3 828.7 414.0C836.4 406.7 844.0 399.3 851.7 392.0C859.3 384.7 867.3 377.3 874.7 370.0C882.1 362.7 889.3 355.3 896.2 348.0C903.2 340.7 909.8 333.3 916.6 326.0C923.3 318.7 930.0 311.3 936.9 304.0C943.8 296.7 950.8 289.3 957.8 282.0C964.7 274.7 971.5 267.3 978.7 260.0C986.0 252.7 993.3 245.3 1001.2 238.0C1009.1 230.7 1017.9 223.3 1026.2 216.0C1034.6 208.7 1042.9 201.3 1051.4 194.0C1059.8 186.7 1068.4 179.3 1077.0 172.0C1085.5 164.7 1094.0 157.3 1102.5 150.0C1111.0 142.7 1119.6 135.3 1128.1 128.0C1136.6 120.7 1145.1 113.3 1153.6 106.0C1162.1 98.7 1170.6 91.3 1179.0 84.0C1187.4 76.7 1195.7 69.3 1204.1 62.0C1212.4 54.7 1225.0 43.7 1229.1 40.0M528.3 700.0C532.3 696.3 544.1 685.3 552.0 678.0C559.9 670.7 567.9 663.3 575.8 656.0C583.8 648.7 591.7 641.3 599.6 634.0C607.5 626.7 615.4 619.3 623.4 612.0C631.3 604.7 639.3 597.3 647.2 590.0C655.2 582.7 663.1 575.3 671.1 568.0C679.0 560.7 687.0 553.3 694.8 546.0C702.5 538.7 710.0 531.3 717.6 524.0C725.2 516.7 732.8 509.3 740.5 502.0C748.1 494.7 755.9 487.3 763.6 480.0C771.3 472.7 778.9 465.3 786.5 458.0C794.2 450.7 801.8 443.3 809.4 436.0C817.1 428.7 824.7 421.3 832.4 414.0C840.0 406.7 847.7 399.3 855.3 392.0C863.0 384.7 870.9 377.3 878.4 370.0C885.8 362.7 893.0 355.3 900.0 348.0C907.0 340.7 913.6 333.3 920.4 326.0C927.2 318.7 934.0 311.3 940.9 304.0C947.7 296.7 954.8 289.3 961.8 282.0C968.8 274.7 975.6 267.3 982.9 260.0C990.1 252.7 997.5 245.3 1005.4 238.0C1013.3 230.7 1022.0 223.3 1030.4 216.0C1038.7 208.7 1047.0 201.3 1055.5 194.0C1064.0 186.7 1072.5 179.3 1081.1 172.0C1089.7 164.7 1098.3 157.3 1106.9 150.0C1115.5 142.7 1124.2 135.3 1132.7 128.0C1141.3 120.7 1149.8 113.3 1158.3 106.0C1166.8 98.7 1175.3 91.3 1183.6 84.0C1192.0 76.7 1200.3 69.3 1208.6 62.0C1217.0 54.7 1229.5 43.7 1233.6 40.0M531.9 700.0C535.9 696.3 547.7 685.3 555.6 678.0C563.6 670.7 571.6 663.3 579.6 656.0C587.6 648.7 595.5 641.3 603.5 634.0C611.5 626.7 619.5 619.3 627.5 612.0C635.5 604.7 643.6 597.3 651.6 590.0C659.6 582.7 667.6 575.3 675.6 568.0C683.5 560.7 691.6 553.3 699.3 546.0C707.1 538.7 714.6 531.3 722.2 524.0C729.8 516.7 737.4 509.3 745.0 502.0C752.7 494.7 760.4 487.3 768.0 480.0C775.7 472.7 783.2 465.3 790.8 458.0C798.4 450.7 806.0 443.3 813.6 436.0C821.2 428.7 828.8 421.3 836.4 414.0C844.0 406.7 851.6 399.3 859.3 392.0C866.9 384.7 874.8 377.3 882.2 370.0C889.6 362.7 896.7 355.3 903.7 348.0C910.6 340.7 917.2 333.3 924.0 326.0C930.8 318.7 937.5 311.3 944.3 304.0C951.2 296.7 958.2 289.3 965.2 282.0C972.1 274.7 978.9 267.3 986.1 260.0C993.4 252.7 1000.6 245.3 1008.5 238.0C1016.4 230.7 1025.0 223.3 1033.3 216.0C1041.6 208.7 1049.9 201.3 1058.3 194.0C1066.7 186.7 1075.3 179.3 1083.8 172.0C1092.4 164.7 1101.0 157.3 1109.6 150.0C1118.2 142.7 1126.8 135.3 1135.4 128.0C1144.0 120.7 1152.5 113.3 1161.0 106.0C1169.4 98.7 1177.9 91.3 1186.2 84.0C1194.6 76.7 1202.9 69.3 1211.2 62.0C1219.5 54.7 1232.0 43.7 1236.1 40.0" fill="none" stroke="url(#lm)" stroke-width="1.2"/>
<path d="M536.3 700.0C540.3 696.3 552.0 685.3 560.0 678.0C567.9 670.7 575.9 663.3 583.9 656.0C591.9 648.7 599.8 641.3 607.8 634.0C615.7 626.7 623.7 619.3 631.7 612.0C639.7 604.7 647.6 597.3 655.6 590.0C663.6 582.7 671.6 575.3 679.6 568.0C687.5 560.7 695.5 553.3 703.3 546.0C711.0 538.7 718.5 531.3 726.1 524.0C733.7 516.7 741.3 509.3 749.0 502.0C756.6 494.7 764.3 487.3 771.9 480.0C779.5 472.7 787.1 465.3 794.6 458.0C802.2 450.7 809.8 443.3 817.4 436.0C824.9 428.7 832.5 421.3 840.1 414.0C847.7 406.7 855.3 399.3 862.9 392.0C870.5 384.7 878.3 377.3 885.7 370.0C893.1 362.7 900.2 355.3 907.1 348.0C914.1 340.7 920.7 333.3 927.4 326.0C934.2 318.7 940.9 311.3 947.8 304.0C954.6 296.7 961.6 289.3 968.6 282.0C975.5 274.7 982.3 267.3 989.5 260.0C996.7 252.7 1004.0 245.3 1011.8 238.0C1019.6 230.7 1028.2 223.3 1036.5 216.0C1044.8 208.7 1053.0 201.3 1061.3 194.0C1069.7 186.7 1078.2 179.3 1086.8 172.0C1095.3 164.7 1103.9 157.3 1112.5 150.0C1121.1 142.7 1129.7 135.3 1138.2 128.0C1146.8 120.7 1155.3 113.3 1163.7 106.0C1172.2 98.7 1180.6 91.3 1189.0 84.0C1197.3 76.7 1205.6 69.3 1213.9 62.0C1222.2 54.7 1234.6 43.7 1238.8 40.0M540.0 700.0C543.9 696.3 555.7 685.3 563.7 678.0C571.6 670.7 579.7 663.3 587.7 656.0C595.7 648.7 603.7 641.3 611.7 634.0C619.7 626.7 627.7 619.3 635.7 612.0C643.7 604.7 651.8 597.3 659.8 590.0C667.8 582.7 675.9 575.3 683.8 568.0C691.8 560.7 699.8 553.3 707.6 546.0C715.4 538.7 722.8 531.3 730.4 524.0C738.1 516.7 745.7 509.3 753.3 502.0C760.9 494.7 768.5 487.3 776.1 480.0C783.7 472.7 791.2 465.3 798.7 458.0C806.3 450.7 813.8 443.3 821.3 436.0C828.9 428.7 836.4 421.3 843.9 414.0C851.5 406.7 859.0 399.3 866.6 392.0C874.2 384.7 882.0 377.3 889.3 370.0C896.7 362.7 903.7 355.3 910.7 348.0C917.6 340.7 924.2 333.3 930.9 326.0C937.7 318.7 944.3 311.3 951.2 304.0C958.0 296.7 965.0 289.3 971.9 282.0C978.8 274.7 985.5 267.3 992.7 260.0C999.9 252.7 1007.1 245.3 1014.9 238.0C1022.7 230.7 1031.2 223.3 1039.4 216.0C1047.7 208.7 1055.8 201.3 1064.1 194.0C1072.5 186.7 1081.0 179.3 1089.5 172.0C1098.0 164.7 1106.6 157.3 1115.2 150.0C1123.8 142.7 1132.5 135.3 1141.0 128.0C1149.6 120.7 1158.1 113.3 1166.5 106.0C1174.9 98.7 1183.3 91.3 1191.7 84.0C1200.0 76.7 1208.2 69.3 1216.5 62.0C1224.8 54.7 1237.2 43.7 1241.4 40.0M544.0 700.0C548.0 696.3 559.7 685.3 567.7 678.0C575.6 670.7 583.7 663.3 591.7 656.0C599.7 648.7 607.7 641.3 615.7 634.0C623.7 626.7 631.7 619.3 639.7 612.0C647.7 604.7 655.7 597.3 663.7 590.0C671.7 582.7 679.7 575.3 687.7 568.0C695.7 560.7 703.7 553.3 711.4 546.0C719.2 538.7 726.7 531.3 734.3 524.0C741.9 516.7 749.5 509.3 757.1 502.0C764.7 494.7 772.3 487.3 779.9 480.0C787.4 472.7 794.9 465.3 802.4 458.0C809.9 450.7 817.4 443.3 824.9 436.0C832.4 428.7 839.9 421.3 847.4 414.0C855.0 406.7 862.5 399.3 870.0 392.0C877.6 384.7 885.3 377.3 892.6 370.0C900.0 362.7 907.0 355.3 913.9 348.0C920.9 340.7 927.4 333.3 934.1 326.0C940.9 318.7 947.5 311.3 954.3 304.0C961.2 296.7 968.1 289.3 975.0 282.0C981.9 274.7 988.6 267.3 995.8 260.0C1002.9 252.7 1010.1 245.3 1017.9 238.0C1025.6 230.7 1034.1 223.3 1042.3 216.0C1050.5 208.7 1058.6 201.3 1066.9 194.0C1075.2 186.7 1083.6 179.3 1092.1 172.0C1100.6 164.7 1109.3 157.3 1117.8 150.0C1126.4 142.7 1135.1 135.3 1143.6 128.0C1152.2 120.7 1160.6 113.3 1169.1 106.0C1177.5 98.7 1185.9 91.3 1194.2 84.0C1202.5 76.7 1210.7 69.3 1219.0 62.0C1227.3 54.7 1239.7 43.7 1243.8 40.0M548.3 700.0C552.3 696.3 564.1 685.3 572.0 678.0C579.9 670.7 587.9 663.3 595.9 656.0C603.9 648.7 611.8 641.3 619.7 634.0C627.7 626.7 635.6 619.3 643.5 612.0C651.5 604.7 659.4 597.3 667.4 590.0C675.4 582.7 683.3 575.3 691.3 568.0C699.2 560.7 707.2 553.3 715.0 546.0C722.7 538.7 730.2 531.3 737.8 524.0C745.4 516.7 753.0 509.3 760.6 502.0C768.2 494.7 775.8 487.3 783.3 480.0C790.9 472.7 798.3 465.3 805.8 458.0C813.3 450.7 820.8 443.3 828.3 436.0C835.8 428.7 843.3 421.3 850.8 414.0C858.3 406.7 865.8 399.3 873.3 392.0C880.8 384.7 888.5 377.3 895.8 370.0C903.1 362.7 910.2 355.3 917.1 348.0C924.0 340.7 930.6 333.3 937.3 326.0C944.0 318.7 950.7 311.3 957.5 304.0C964.3 296.7 971.2 289.3 978.1 282.0C985.0 274.7 991.7 267.3 998.9 260.0C1006.0 252.7 1013.2 245.3 1020.9 238.0C1028.7 230.7 1037.1 223.3 1045.3 216.0C1053.4 208.7 1061.4 201.3 1069.7 194.0C1078.0 186.7 1086.5 179.3 1094.9 172.0C1103.4 164.7 1112.1 157.3 1120.7 150.0C1129.3 142.7 1137.9 135.3 1146.5 128.0C1155.0 120.7 1163.5 113.3 1171.9 106.0C1180.4 98.7 1188.7 91.3 1197.0 84.0C1205.3 76.7 1213.5 69.3 1221.8 62.0C1230.0 54.7 1242.4 43.7 1246.5 40.0M551.5 700.0C555.5 696.3 567.2 685.3 575.1 678.0C583.1 670.7 591.1 663.3 599.0 656.0C607.0 648.7 614.9 641.3 622.8 634.0C630.7 626.7 638.6 619.3 646.5 612.0C654.4 604.7 662.3 597.3 670.3 590.0C678.2 582.7 686.2 575.3 694.1 568.0C702.0 560.7 710.0 553.3 717.7 546.0C725.5 538.7 733.0 531.3 740.6 524.0C748.2 516.7 755.8 509.3 763.4 502.0C771.0 494.7 778.6 487.3 786.1 480.0C793.6 472.7 801.1 465.3 808.6 458.0C816.1 450.7 823.6 443.3 831.1 436.0C838.5 428.7 846.0 421.3 853.5 414.0C861.0 406.7 868.5 399.3 876.1 392.0C883.6 384.7 891.3 377.3 898.6 370.0C905.9 362.7 913.0 355.3 919.9 348.0C926.8 340.7 933.4 333.3 940.1 326.0C946.9 318.7 953.5 311.3 960.3 304.0C967.2 296.7 974.1 289.3 981.0 282.0C987.9 274.7 994.6 267.3 1001.8 260.0C1008.9 252.7 1016.1 245.3 1023.8 238.0C1031.6 230.7 1040.0 223.3 1048.1 216.0C1056.3 208.7 1064.3 201.3 1072.6 194.0C1080.8 186.7 1089.3 179.3 1097.7 172.0C1106.2 164.7 1114.9 157.3 1123.5 150.0C1132.1 142.7 1140.8 135.3 1149.3 128.0C1157.8 120.7 1166.3 113.3 1174.7 106.0C1183.1 98.7 1191.5 91.3 1199.7 84.0C1208.0 76.7 1216.2 69.3 1224.5 62.0C1232.7 54.7 1245.1 43.7 1249.2 40.0M553.7 700.0C557.7 696.3 569.4 685.3 577.3 678.0C585.3 670.7 593.3 663.3 601.3 656.0C609.3 648.7 617.3 641.3 625.2 634.0C633.2 626.7 641.1 619.3 649.1 612.0C657.1 604.7 665.1 597.3 673.1 590.0C681.0 582.7 689.0 575.3 697.0 568.0C704.9 560.7 712.9 553.3 720.7 546.0C728.4 538.7 735.9 531.3 743.5 524.0C751.1 516.7 758.7 509.3 766.3 502.0C773.9 494.7 781.5 487.3 789.0 480.0C796.5 472.7 804.0 465.3 811.5 458.0C819.0 450.7 826.5 443.3 833.9 436.0C841.4 428.7 848.9 421.3 856.4 414.0C863.9 406.7 871.4 399.3 878.9 392.0C886.4 384.7 894.2 377.3 901.5 370.0C908.8 362.7 915.8 355.3 922.7 348.0C929.7 340.7 936.2 333.3 943.0 326.0C949.7 318.7 956.4 311.3 963.2 304.0C970.1 296.7 977.0 289.3 983.9 282.0C990.8 274.7 997.6 267.3 1004.7 260.0C1011.8 252.7 1019.0 245.3 1026.8 238.0C1034.5 230.7 1042.9 223.3 1051.0 216.0C1059.1 208.7 1067.1 201.3 1075.4 194.0C1083.6 186.7 1092.0 179.3 1100.5 172.0C1109.0 164.7 1117.6 157.3 1126.2 150.0C1134.8 142.7 1143.5 135.3 1152.0 128.0C1160.6 120.7 1169.0 113.3 1177.4 106.0C1185.8 98.7 1194.1 91.3 1202.4 84.0C1210.7 76.7 1218.8 69.3 1227.1 62.0C1235.3 54.7 1247.6 43.7 1251.7 40.0M556.6 700.0C560.6 696.3 572.3 685.3 580.2 678.0C588.1 670.7 596.2 663.3 604.1 656.0C612.1 648.7 620.0 641.3 627.9 634.0C635.8 626.7 643.7 619.3 651.6 612.0C659.5 604.7 667.4 597.3 675.3 590.0C683.3 582.7 691.2 575.3 699.1 568.0C707.0 560.7 715.0 553.3 722.8 546.0C730.5 538.7 738.0 531.3 745.6 524.0C753.2 516.7 760.8 509.3 768.4 502.0C776.0 494.7 783.6 487.3 791.2 480.0C798.7 472.7 806.2 465.3 813.7 458.0C821.2 450.7 828.7 443.3 836.2 436.0C843.7 428.7 851.2 421.3 858.7 414.0C866.2 406.7 873.7 399.3 881.2 392.0C888.7 384.7 896.5 377.3 903.8 370.0C911.1 362.7 918.2 355.3 925.1 348.0C932.1 340.7 938.7 333.3 945.5 326.0C952.2 318.7 958.9 311.3 965.8 304.0C972.6 296.7 979.6 289.3 986.5 282.0C993.5 274.7 1000.2 267.3 1007.4 260.0C1014.5 252.7 1021.8 245.3 1029.5 238.0C1037.2 230.7 1045.6 223.3 1053.7 216.0C1061.8 208.7 1069.9 201.3 1078.1 194.0C1086.4 186.7 1094.8 179.3 1103.2 172.0C1111.7 164.7 1120.4 157.3 1129.0 150.0C1137.6 142.7 1146.3 135.3 1154.8 128.0C1163.3 120.7 1171.8 113.3 1180.2 106.0C1188.5 98.7 1196.8 91.3 1205.1 84.0C1213.3 76.7 1221.5 69.3 1229.7 62.0C1237.9 54.7 1250.2 43.7 1254.3 40.0M559.8 700.0C563.7 696.3 575.5 685.3 583.4 678.0C591.3 670.7 599.4 663.3 607.3 656.0C615.2 648.7 623.1 641.3 631.0 634.0C638.9 626.7 646.8 619.3 654.7 612.0C662.6 604.7 670.5 597.3 678.5 590.0C686.4 582.7 694.3 575.3 702.2 568.0C710.1 560.7 718.1 553.3 725.9 546.0C733.6 538.7 741.1 531.3 748.7 524.0C756.3 516.7 763.9 509.3 771.5 502.0C779.1 494.7 786.8 487.3 794.4 480.0C802.0 472.7 809.6 465.3 817.2 458.0C824.7 450.7 832.3 443.3 839.9 436.0C847.4 428.7 855.0 421.3 862.6 414.0C870.2 406.7 877.8 399.3 885.4 392.0C893.0 384.7 900.7 377.3 908.1 370.0C915.5 362.7 922.7 355.3 929.7 348.0C936.8 340.7 943.5 333.3 950.3 326.0C957.2 318.7 964.0 311.3 970.9 304.0C977.9 296.7 984.9 289.3 992.0 282.0C999.0 274.7 1005.8 267.3 1013.1 260.0C1020.3 252.7 1027.6 245.3 1035.4 238.0C1043.2 230.7 1051.7 223.3 1059.8 216.0C1068.0 208.7 1076.1 201.3 1084.3 194.0C1092.6 186.7 1101.0 179.3 1109.4 172.0C1117.9 164.7 1126.4 157.3 1135.0 150.0C1143.5 142.7 1152.1 135.3 1160.6 128.0C1169.1 120.7 1177.5 113.3 1185.8 106.0C1194.1 98.7 1202.4 91.3 1210.6 84.0C1218.8 76.7 1227.0 69.3 1235.1 62.0C1243.3 54.7 1255.6 43.7 1259.7 40.0M562.9 700.0C566.8 696.3 578.6 685.3 586.5 678.0C594.4 670.7 602.4 663.3 610.3 656.0C618.2 648.7 626.1 641.3 633.9 634.0C641.8 626.7 649.6 619.3 657.5 612.0C665.3 604.7 673.2 597.3 681.0 590.0C688.9 582.7 696.8 575.3 704.7 568.0C712.6 560.7 720.5 553.3 728.3 546.0C736.0 538.7 743.5 531.3 751.1 524.0C758.7 516.7 766.3 509.3 773.9 502.0C781.6 494.7 789.4 487.3 797.1 480.0C804.8 472.7 812.4 465.3 820.1 458.0C827.8 450.7 835.4 443.3 843.1 436.0C850.8 428.7 858.4 421.3 866.1 414.0C873.8 406.7 881.5 399.3 889.2 392.0C896.8 384.7 904.7 377.3 912.2 370.0C919.7 362.7 926.9 355.3 934.1 348.0C941.2 340.7 948.1 333.3 955.0 326.0C962.0 318.7 968.9 311.3 976.0 304.0C983.1 296.7 990.2 289.3 997.4 282.0C1004.5 274.7 1011.5 267.3 1018.8 260.0C1026.2 252.7 1033.6 245.3 1041.5 238.0C1049.4 230.7 1057.9 223.3 1066.1 216.0C1074.3 208.7 1082.5 201.3 1090.8 194.0C1099.1 186.7 1107.5 179.3 1115.9 172.0C1124.2 164.7 1132.7 157.3 1141.1 150.0C1149.5 142.7 1158.0 135.3 1166.4 128.0C1174.8 120.7 1183.2 113.3 1191.4 106.0C1199.7 98.7 1207.9 91.3 1216.1 84.0C1224.3 76.7 1232.4 69.3 1240.6 62.0C1248.7 54.7 1260.9 43.7 1265.0 40.0M565.4 700.0C569.3 696.3 581.1 685.3 589.0 678.0C596.9 670.7 604.9 663.3 612.8 656.0C620.7 648.7 628.6 641.3 636.5 634.0C644.3 626.7 652.2 619.3 660.0 612.0C667.9 604.7 675.8 597.3 683.6 590.0C691.5 582.7 699.4 575.3 707.3 568.0C715.2 560.7 723.2 553.3 730.9 546.0C738.7 538.7 746.1 531.3 753.7 524.0C761.3 516.7 768.9 509.3 776.6 502.0C784.3 494.7 792.2 487.3 799.9 480.0C807.7 472.7 815.5 465.3 823.2 458.0C831.0 450.7 838.7 443.3 846.5 436.0C854.2 428.7 862.0 421.3 869.7 414.0C877.5 406.7 885.3 399.3 893.0 392.0C900.8 384.7 908.7 377.3 916.3 370.0C923.9 362.7 931.2 355.3 938.5 348.0C945.7 340.7 952.7 333.3 959.8 326.0C966.8 318.7 973.9 311.3 981.0 304.0C988.2 296.7 995.5 289.3 1002.7 282.0C1010.0 274.7 1017.1 267.3 1024.5 260.0C1032.0 252.7 1039.5 245.3 1047.4 238.0C1055.4 230.7 1063.9 223.3 1072.2 216.0C1080.5 208.7 1088.8 201.3 1097.1 194.0C1105.4 186.7 1113.8 179.3 1122.1 172.0C1130.5 164.7 1138.9 157.3 1147.3 150.0C1155.6 142.7 1164.1 135.3 1172.4 128.0C1180.7 120.7 1189.0 113.3 1197.3 106.0C1205.5 98.7 1213.7 91.3 1221.9 84.0C1230.0 76.7 1238.1 69.3 1246.2 62.0C1254.3 54.7 1266.5 43.7 1270.5 40.0M568.1 700.0C572.0 696.3 583.7 685.3 591.6 678.0C599.5 670.7 607.6 663.3 615.5 656.0C623.4 648.7 631.3 641.3 639.1 634.0C647.0 626.7 654.8 619.3 662.7 612.0C670.5 604.7 678.4 597.3 686.3 590.0C694.2 582.7 702.1 575.3 710.0 568.0C717.8 560.7 725.8 553.3 733.6 546.0C741.3 538.7 748.8 531.3 756.4 524.0C764.0 516.7 771.4 509.3 779.2 502.0C786.9 494.7 795.0 487.3 802.8 480.0C810.7 472.7 818.5 465.3 826.3 458.0C834.2 450.7 842.0 443.3 849.9 436.0C857.7 428.7 865.5 421.3 873.4 414.0C881.2 406.7 889.1 399.3 896.9 392.0C904.8 384.7 912.8 377.3 920.5 370.0C928.2 362.7 935.6 355.3 943.0 348.0C950.3 340.7 957.3 333.3 964.5 326.0C971.7 318.7 978.9 311.3 986.2 304.0C993.4 296.7 1000.8 289.3 1008.2 282.0C1015.5 274.7 1022.7 267.3 1030.3 260.0C1037.8 252.7 1045.4 245.3 1053.5 238.0C1061.5 230.7 1070.1 223.3 1078.5 216.0C1086.8 208.7 1095.2 201.3 1103.5 194.0C1111.9 186.7 1120.2 179.3 1128.5 172.0C1136.8 164.7 1145.1 157.3 1153.4 150.0C1161.6 142.7 1170.0 135.3 1178.2 128.0C1186.5 120.7 1194.7 113.3 1202.9 106.0C1211.1 98.7 1219.2 91.3 1227.4 84.0C1235.5 76.7 1243.5 69.3 1251.6 62.0C1259.7 54.7 1271.8 43.7 1275.8 40.0" fill="none" stroke="url(#yl)" stroke-width="1.2"/>
<g mask="url(#wm)"><rect x="1020" y="50" width="290" height="230" fill="url(#hw)" opacity=".8"/></g>
<path d="M1044 243.4 1024 262 1000 290 978 318 952 350 926 378 905 398 893 386 923 355 951 325 972.8 301 992 274z" fill="#6b4a30" opacity=".9"/>
<path d="M995 273 Q1016 250 1044 243.4 Q1028 262 1001 274z" fill="#dcb88c"/>
<path d="M559.8 700.0C563.7 696.3 575.5 685.3 583.4 678.0C591.3 670.7 599.4 663.3 607.3 656.0C615.2 648.7 623.1 641.3 631.0 634.0C638.9 626.7 646.8 619.3 654.7 612.0C662.6 604.7 670.5 597.3 678.5 590.0C686.4 582.7 694.3 575.3 702.2 568.0C710.1 560.7 718.1 553.3 725.9 546.0C733.6 538.7 741.1 531.3 748.7 524.0C756.3 516.7 763.9 509.3 771.5 502.0C779.1 494.7 786.8 487.3 794.4 480.0C802.0 472.7 809.6 465.3 817.2 458.0C824.7 450.7 832.3 443.3 839.9 436.0C847.4 428.7 855.0 421.3 862.6 414.0C870.2 406.7 877.8 399.3 885.4 392.0C893.0 384.7 900.7 377.3 908.1 370.0C915.5 362.7 922.7 355.3 929.7 348.0C936.8 340.7 943.5 333.3 950.3 326.0C957.2 318.7 964.0 311.3 970.9 304.0C977.9 296.7 984.9 289.3 992.0 282.0C999.0 274.7 1005.8 267.3 1013.1 260.0C1020.3 252.7 1027.6 245.3 1035.4 238.0C1043.2 230.7 1051.7 223.3 1059.8 216.0C1068.0 208.7 1076.1 201.3 1084.3 194.0C1092.6 186.7 1101.0 179.3 1109.4 172.0C1117.9 164.7 1126.4 157.3 1135.0 150.0C1143.5 142.7 1152.1 135.3 1160.6 128.0C1169.1 120.7 1177.5 113.3 1185.8 106.0C1194.1 98.7 1202.4 91.3 1210.6 84.0C1218.8 76.7 1227.0 69.3 1235.1 62.0C1243.3 54.7 1255.6 43.7 1259.7 40.0M562.9 700.0C566.8 696.3 578.6 685.3 586.5 678.0C594.4 670.7 602.4 663.3 610.3 656.0C618.2 648.7 626.1 641.3 633.9 634.0C641.8 626.7 649.6 619.3 657.5 612.0C665.3 604.7 673.2 597.3 681.0 590.0C688.9 582.7 696.8 575.3 704.7 568.0C712.6 560.7 720.5 553.3 728.3 546.0C736.0 538.7 743.5 531.3 751.1 524.0C758.7 516.7 766.3 509.3 773.9 502.0C781.6 494.7 789.4 487.3 797.1 480.0C804.8 472.7 812.4 465.3 820.1 458.0C827.8 450.7 835.4 443.3 843.1 436.0C850.8 428.7 858.4 421.3 866.1 414.0C873.8 406.7 881.5 399.3 889.2 392.0C896.8 384.7 904.7 377.3 912.2 370.0C919.7 362.7 926.9 355.3 934.1 348.0C941.2 340.7 948.1 333.3 955.0 326.0C962.0 318.7 968.9 311.3 976.0 304.0C983.1 296.7 990.2 289.3 997.4 282.0C1004.5 274.7 1011.5 267.3 1018.8 260.0C1026.2 252.7 1033.6 245.3 1041.5 238.0C1049.4 230.7 1057.9 223.3 1066.1 216.0C1074.3 208.7 1082.5 201.3 1090.8 194.0C1099.1 186.7 1107.5 179.3 1115.9 172.0C1124.2 164.7 1132.7 157.3 1141.1 150.0C1149.5 142.7 1158.0 135.3 1166.4 128.0C1174.8 120.7 1183.2 113.3 1191.4 106.0C1199.7 98.7 1207.9 91.3 1216.1 84.0C1224.3 76.7 1232.4 69.3 1240.6 62.0C1248.7 54.7 1260.9 43.7 1265.0 40.0M565.4 700.0C569.3 696.3 581.1 685.3 589.0 678.0C596.9 670.7 604.9 663.3 612.8 656.0C620.7 648.7 628.6 641.3 636.5 634.0C644.3 626.7 652.2 619.3 660.0 612.0C667.9 604.7 675.8 597.3 683.6 590.0C691.5 582.7 699.4 575.3 707.3 568.0C715.2 560.7 723.2 553.3 730.9 546.0C738.7 538.7 746.1 531.3 753.7 524.0C761.3 516.7 768.9 509.3 776.6 502.0C784.3 494.7 792.2 487.3 799.9 480.0C807.7 472.7 815.5 465.3 823.2 458.0C831.0 450.7 838.7 443.3 846.5 436.0C854.2 428.7 862.0 421.3 869.7 414.0C877.5 406.7 885.3 399.3 893.0 392.0C900.8 384.7 908.7 377.3 916.3 370.0C923.9 362.7 931.2 355.3 938.5 348.0C945.7 340.7 952.7 333.3 959.8 326.0C966.8 318.7 973.9 311.3 981.0 304.0C988.2 296.7 995.5 289.3 1002.7 282.0C1010.0 274.7 1017.1 267.3 1024.5 260.0C1032.0 252.7 1039.5 245.3 1047.4 238.0C1055.4 230.7 1063.9 223.3 1072.2 216.0C1080.5 208.7 1088.8 201.3 1097.1 194.0C1105.4 186.7 1113.8 179.3 1122.1 172.0C1130.5 164.7 1138.9 157.3 1147.3 150.0C1155.6 142.7 1164.1 135.3 1172.4 128.0C1180.7 120.7 1189.0 113.3 1197.3 106.0C1205.5 98.7 1213.7 91.3 1221.9 84.0C1230.0 76.7 1238.1 69.3 1246.2 62.0C1254.3 54.7 1266.5 43.7 1270.5 40.0M568.1 700.0C572.0 696.3 583.7 685.3 591.6 678.0C599.5 670.7 607.6 663.3 615.5 656.0C623.4 648.7 631.3 641.3 639.1 634.0C647.0 626.7 654.8 619.3 662.7 612.0C670.5 604.7 678.4 597.3 686.3 590.0C694.2 582.7 702.1 575.3 710.0 568.0C717.8 560.7 725.8 553.3 733.6 546.0C741.3 538.7 748.8 531.3 756.4 524.0C764.0 516.7 771.4 509.3 779.2 502.0C786.9 494.7 795.0 487.3 802.8 480.0C810.7 472.7 818.5 465.3 826.3 458.0C834.2 450.7 842.0 443.3 849.9 436.0C857.7 428.7 865.5 421.3 873.4 414.0C881.2 406.7 889.1 399.3 896.9 392.0C904.8 384.7 912.8 377.3 920.5 370.0C928.2 362.7 935.6 355.3 943.0 348.0C950.3 340.7 957.3 333.3 964.5 326.0C971.7 318.7 978.9 311.3 986.2 304.0C993.4 296.7 1000.8 289.3 1008.2 282.0C1015.5 274.7 1022.7 267.3 1030.3 260.0C1037.8 252.7 1045.4 245.3 1053.5 238.0C1061.5 230.7 1070.1 223.3 1078.5 216.0C1086.8 208.7 1095.2 201.3 1103.5 194.0C1111.9 186.7 1120.2 179.3 1128.5 172.0C1136.8 164.7 1145.1 157.3 1153.4 150.0C1161.6 142.7 1170.0 135.3 1178.2 128.0C1186.5 120.7 1194.7 113.3 1202.9 106.0C1211.1 98.7 1219.2 91.3 1227.4 84.0C1235.5 76.7 1243.5 69.3 1251.6 62.0C1259.7 54.7 1271.8 43.7 1275.8 40.0M571.4 700.0C575.3 696.3 587.1 685.3 595.0 678.0C602.9 670.7 610.9 663.3 618.8 656.0C626.7 648.7 634.6 641.3 642.5 634.0C650.3 626.7 658.2 619.3 666.0 612.0C673.9 604.7 681.7 597.3 689.6 590.0C697.5 582.7 705.4 575.3 713.3 568.0C721.2 560.7 729.1 553.3 736.9 546.0C744.6 538.7 752.1 531.3 759.7 524.0C767.3 516.7 774.7 509.3 782.5 502.0C790.3 494.7 798.4 487.3 806.3 480.0C814.2 472.7 822.1 465.3 830.1 458.0C838.0 450.7 845.9 443.3 853.8 436.0C861.7 428.7 869.6 421.3 877.5 414.0C885.4 406.7 893.4 399.3 901.3 392.0C909.2 384.7 917.3 377.3 925.0 370.0C932.8 362.7 940.3 355.3 947.7 348.0C955.2 340.7 962.3 333.3 969.6 326.0C976.9 318.7 984.1 311.3 991.5 304.0C998.9 296.7 1006.3 289.3 1013.8 282.0C1021.2 274.7 1028.5 267.3 1036.1 260.0C1043.8 252.7 1051.5 245.3 1059.6 238.0C1067.7 230.7 1076.3 223.3 1084.7 216.0C1093.1 208.7 1101.5 201.3 1109.9 194.0C1118.3 186.7 1126.6 179.3 1134.9 172.0C1143.1 164.7 1151.3 157.3 1159.5 150.0C1167.7 142.7 1176.0 135.3 1184.2 128.0C1192.4 120.7 1200.6 113.3 1208.7 106.0C1216.8 98.7 1225.0 91.3 1233.1 84.0C1241.1 76.7 1249.1 69.3 1257.2 62.0C1265.2 54.7 1277.3 43.7 1281.3 40.0M573.4 700.0C577.3 696.3 589.0 685.3 596.9 678.0C604.8 670.7 612.9 663.3 620.8 656.0C628.7 648.7 636.6 641.3 644.5 634.0C652.4 626.7 660.2 619.3 668.1 612.0C676.0 604.7 683.8 597.3 691.7 590.0C699.6 582.7 707.5 575.3 715.4 568.0C723.3 560.7 731.3 553.3 739.0 546.0C746.7 538.7 754.2 531.3 761.8 524.0C769.4 516.7 776.8 509.3 784.6 502.0C792.4 494.7 800.7 487.3 808.7 480.0C816.7 472.7 824.7 465.3 832.7 458.0C840.7 450.7 848.7 443.3 856.8 436.0C864.8 428.7 872.8 421.3 880.8 414.0C888.8 406.7 896.8 399.3 904.9 392.0C912.9 384.7 921.1 377.3 928.9 370.0C936.7 362.7 944.4 355.3 951.9 348.0C959.5 340.7 966.7 333.3 974.1 326.0C981.6 318.7 988.9 311.3 996.4 304.0C1003.9 296.7 1011.5 289.3 1019.0 282.0C1026.6 274.7 1034.0 267.3 1041.8 260.0C1049.5 252.7 1057.4 245.3 1065.5 238.0C1073.7 230.7 1082.4 223.3 1090.9 216.0C1099.4 208.7 1107.9 201.3 1116.3 194.0C1124.7 186.7 1133.0 179.3 1141.3 172.0C1149.5 164.7 1157.5 157.3 1165.7 150.0C1173.8 142.7 1182.0 135.3 1190.1 128.0C1198.2 120.7 1206.3 113.3 1214.4 106.0C1222.5 98.7 1230.6 91.3 1238.7 84.0C1246.7 76.7 1254.7 69.3 1262.7 62.0C1270.7 54.7 1282.8 43.7 1286.8 40.0" fill="none" stroke="#4ee600" stroke-width="1.2"/>
</svg>
<span style="position:absolute;left:9.00px;top:12px;font-size:12px;line-height:14px;color:#111;white-space:nowrap;">All Velocity [node] (m/s)</span>
<svg class="abs" style="left:0;top:0" width="60" height="500" viewBox="570 56 60 500" shape-rendering="crispEdges"><rect x="579" y="107" width="26" height="14" fill="#ff0000"/><rect x="579" y="107" width="30" height="1" fill="#000"/><rect x="579" y="121" width="26" height="15" fill="#ff2b00"/><rect x="579" y="121" width="26" height="1" fill="#000"/><rect x="579" y="136" width="26" height="14" fill="#ff5500"/><rect x="579" y="136" width="30" height="1" fill="#000"/><rect x="579" y="150" width="26" height="15" fill="#ff8000"/><rect x="579" y="150" width="26" height="1" fill="#000"/><rect x="579" y="165" width="26" height="14" fill="#ffa000"/><rect x="579" y="165" width="30" height="1" fill="#000"/><rect x="579" y="179" width="26" height="15" fill="#ffbf00"/><rect x="579" y="179" width="26" height="1" fill="#000"/><rect x="579" y="194" width="26" height="14" fill="#ffd500"/><rect x="579" y="194" width="30" height="1" fill="#000"/><rect x="579" y="208" width="26" height="15" fill="#ffe800"/><rect x="579" y="208" width="26" height="1" fill="#000"/><rect x="579" y="223" width="26" height="14" fill="#fff500"/><rect x="579" y="223" width="30" height="1" fill="#000"/><rect x="579" y="237" width="26" height="14" fill="#ffff00"/><rect x="579" y="237" width="26" height="1" fill="#000"/><rect x="579" y="251" width="26" height="15" fill="#f4ff00"/><rect x="579" y="251" width="30" height="1" fill="#000"/><rect x="579" y="266" width="26" height="14" fill="#d4ff00"/><rect x="579" y="266" width="26" height="1" fill="#000"/><rect x="579" y="280" width="26" height="15" fill="#99ff00"/><rect x="579" y="280" width="30" height="1" fill="#000"/><rect x="579" y="295" width="26" height="14" fill="#55ff00"/><rect x="579" y="295" width="26" height="1" fill="#000"/><rect x="579" y="309" width="26" height="15" fill="#1aff00"/><rect x="579" y="309" width="30" height="1" fill="#000"/><rect x="579" y="324" width="26" height="14" fill="#00ff26"/><rect x="579" y="324" width="26" height="1" fill="#000"/><rect x="579" y="338" width="26" height="14" fill="#00ff66"/><rect x="579" y="338" width="30" height="1" fill="#000"/><rect x="579" y="352" width="26" height="15" fill="#00ffaa"/><rect x="579" y="352" width="26" height="1" fill="#000"/><rect x="579" y="367" width="26" height="14" fill="#00ffdd"/><rect x="579" y="367" width="30" height="1" fill="#000"/><rect x="579" y="381" width="26" height="15" fill="#00ffff"/><rect x="579" y="381" width="26" height="1" fill="#000"/><rect x="579" y="396" width="26" height="14" fill="#00f5ff"/><rect x="579" y="396" width="30" height="1" fill="#000"/><rect x="579" y="410" width="26" height="15" fill="#00eaff"/><rect x="579" y="410" width="26" height="1" fill="#000"/><rect x="579" y="425" width="26" height="14" fill="#00d5ff"/><rect x="579" y="425" width="30" height="1" fill="#000"/><rect x="579" y="439" width="26" height="15" fill="#00bfff"/><rect x="579" y="439" width="26" height="1" fill="#000"/><rect x="579" y="454" width="26" height="14" fill="#00a5ff"/><rect x="579" y="454" width="30" height="1" fill="#000"/><rect x="579" y="468" width="26" height="14" fill="#0088ff"/><rect x="579" y="468" width="26" height="1" fill="#000"/><rect x="579" y="482" width="26" height="15" fill="#0066ff"/><rect x="579" y="482" width="30" height="1" fill="#000"/><rect x="579" y="497" width="26" height="14" fill="#0044ff"/><rect x="579" y="497" width="26" height="1" fill="#000"/><rect x="579" y="511" width="26" height="15" fill="#0022ff"/><rect x="579" y="511" width="30" height="1" fill="#000"/><rect x="579" y="526" width="26" height="14" fill="#0000ff"/><rect x="579" y="526" width="26" height="1" fill="#000"/><rect x="579" y="540" width="30" height="1" fill="#000"/><rect x="578" y="107" width="1" height="434" fill="#000"/><rect x="604" y="107" width="1" height="434" fill="#000"/></svg>
<span style="position:absolute;left:43.90px;top:42px;font-size:12px;line-height:14px;color:#111;white-space:nowrap;">125.722</span>
<span style="position:absolute;left:43.90px;top:71px;font-size:12px;line-height:14px;color:#111;white-space:nowrap;">117.341</span>
<span style="position:absolute;left:43.90px;top:100px;font-size:12px;line-height:14px;color:#111;white-space:nowrap;">108.959</span>
<span style="position:absolute;left:43.90px;top:129px;font-size:12px;line-height:14px;color:#111;white-space:nowrap;">100.578</span>
<span style="position:absolute;left:43.90px;top:158px;font-size:12px;line-height:14px;color:#111;white-space:nowrap;">92.1963</span>
<span style="position:absolute;left:43.90px;top:186px;font-size:12px;line-height:14px;color:#111;white-space:nowrap;">83.8148</span>
<span style="position:absolute;left:43.90px;top:215px;font-size:12px;line-height:14px;color:#111;white-space:nowrap;">75.4333</span>
<span style="position:absolute;left:43.90px;top:244px;font-size:12px;line-height:14px;color:#111;white-space:nowrap;">67.0519</span>
<span style="position:absolute;left:43.90px;top:273px;font-size:12px;line-height:14px;color:#111;white-space:nowrap;">58.6704</span>
<span style="position:absolute;left:43.90px;top:302px;font-size:12px;line-height:14px;color:#111;white-space:nowrap;">50.2889</span>
<span style="position:absolute;left:43.90px;top:331px;font-size:12px;line-height:14px;color:#111;white-space:nowrap;">41.9074</span>
<span style="position:absolute;left:43.90px;top:360px;font-size:12px;line-height:14px;color:#111;white-space:nowrap;">33.5259</span>
<span style="position:absolute;left:43.90px;top:389px;font-size:12px;line-height:14px;color:#111;white-space:nowrap;">25.1444</span>
<span style="position:absolute;left:43.90px;top:417px;font-size:12px;line-height:14px;color:#111;white-space:nowrap;">16.763</span>
<span style="position:absolute;left:43.90px;top:446px;font-size:12px;line-height:14px;color:#111;white-space:nowrap;">8.38148</span>
<span style="position:absolute;left:43.90px;top:475px;font-size:12px;line-height:14px;color:#111;white-space:nowrap;">0</span>
<svg class="abs" style="left:0;top:0;overflow:visible" width="796" height="70" viewBox="570 56 796 70"><defs>
<filter id="sh" x="-5%" y="-20%" width="110%" height="160%"><feGaussianBlur stdDeviation="1.6"/></filter>
<linearGradient id="cb1" x1="0" y1="0" x2="1" y2="1"><stop offset="0" stop-color="#8fdcff"/><stop offset="1" stop-color="#0a86d8"/></linearGradient>
<linearGradient id="cb2" x1="0" y1="0" x2="1" y2="0"><stop offset="0" stop-color="#ffffff"/><stop offset="1" stop-color="#1d9be6"/></linearGradient>
<linearGradient id="cb3" x1="0" y1="0" x2="0" y2="1"><stop offset="0" stop-color="#ffffff"/><stop offset="1" stop-color="#49b2f0"/></linearGradient>
</defs><rect x="712" y="60" width="564" height="28" fill="#000" opacity=".35" filter="url(#sh)"/><rect x="1279" y="60" width="90" height="58" fill="#000" opacity=".3" filter="url(#sh)"/><rect x="710.3" y="56" width="282" height="29.6" fill="#ebebeb"/><rect x="710.3" y="56" width="11.4" height="29.6" fill="#c4c4c4"/><rect x="992.3" y="56" width="283.3" height="29.6" fill="#ebebeb"/><rect x="992.3" y="56" width="12.5" height="29.6" fill="#c4c4c4"/><rect x="1277.3" y="56" width="87.7" height="60.2" fill="#e8e8e8"/><rect x="1277.3" y="56" width="11.4" height="29.6" fill="#cbcbcb"/><rect x="1288.7" y="56" width="30" height="29.6" fill="#d6d6d6"/><path d="M725 62h1.8v18H725z M737.5 71 749 62v18z M726.8 71 738.3 62v18z" fill="#000"/><path d="M759.8 62h1.8v18h-1.8z M761.6 71 774 62v18z" fill="#000"/><path d="M789 62 806 71 789 80z" fill="#000"/><path d="M819.6 62 832.2 71 819.6 80z M832.3 62h1.6v18h-1.6z" fill="#9b9b9b"/><path d="M845 62 856.5 71 845 80z M856 62 867.5 71 856 80z M867.4 62h1.6v18h-1.6z" fill="#9b9b9b"/><circle cx="887" cy="65" r="2.1" fill="#000"/><circle cx="887" cy="71.1" r="2.1" fill="#000"/><circle cx="887" cy="77.2" r="2.1" fill="#000"/><path d="M912.5 65.2 907 71.1 912.5 77 M921.5 65.2 927 71.1 921.5 77" fill="none" stroke="#000" stroke-width="1.7"/><path d="M911.8 71.1h2.2M915.9 71.1h2.2M920 71.1h2.2" stroke="#000" stroke-width="1.7"/><g fill="#9b9b9b" stroke="none"><circle cx="947.3" cy="62.2" r="2.3"/><path d="M944.3 65.3h4.6l1 7.4-1.2 1-1.3 9h-2l.5-8.5-2.8 8.7h-2.1l3-9.6z"/><rect x="941.8" y="66" width="2.8" height="5" rx=".6" fill="#b5b5b5"/><path d="M948.6 68.5 952 71l-.6.9-3-1.9z"/><rect x="952.4" y="67.5" width=".9" height="15.5"/></g><g fill="#a8a8a8"><circle cx="983.6" cy="66" r="1.9"/><path d="M974 67.6l4.2-1.6 3 1.8 1.6 3 3.4.6-.3 1.4-4.2-.5-1.5-2-2.3 3.5 2.4 3.3-4 .3-5.3 2.3-.6-1.2 5-2.8 1.4-.3-2-2.2 2.2-4.2-2.3.4-1.6 1.5-.9-.9z"/><path d="M966.5 70.5h6M967.5 73.3h5M969 76h3.5" stroke="#c4c4c4" stroke-width=".7"/></g><path d="M1009.8000000000001 64.2H1024.0V80.4H1009.8000000000001z" fill="url(#cb1)"/><path d="M1009.8000000000001 64.2 1015.8000000000001 60.900000000000006 1030.0 60.900000000000006 1024.0 64.2z" fill="#7fd0fb"/><path d="M1024.0 64.2 1030.0 60.900000000000006 1030.0 77.10000000000001 1024.0 80.4z" fill="#0a5f98"/><path d="M1039.8 64.2H1054.0V80.4H1039.8z" fill="url(#cb2)"/><path d="M1039.8 64.2 1045.8 60.900000000000006 1060.0 60.900000000000006 1054.0 64.2z" fill="#d8f0ff"/><path d="M1054.0 64.2 1060.0 60.900000000000006 1060.0 77.10000000000001 1054.0 80.4z" fill="#1d9be6"/><path d="M1069.8 64.2H1084.0V80.4H1069.8z" fill="url(#cb3)"/><path d="M1069.8 64.2 1075.8 60.900000000000006 1090.0 60.900000000000006 1084.0 64.2z" fill="#e9f6ff"/><path d="M1084.0 64.2 1090.0 60.900000000000006 1090.0 77.10000000000001 1084.0 80.4z" fill="#1b7fc2"/><path d="M1069.8 64.2H1084.0V80.4H1069.8zM1069.8 64.2 1075.8 60.900000000000006 1090.0 60.900000000000006 1084.0 64.2zM1084.0 64.2 1090.0 60.900000000000006 1090.0 77.10000000000001 1084.0 80.4z" fill="none" stroke="#000" stroke-width="1.1" stroke-linejoin="round"/><path d="M1099.8 64.2H1114.0V80.4H1099.8z" fill="#2aa0e6"/><path d="M1099.8 64.2 1105.8 60.900000000000006 1120.0 60.900000000000006 1114.0 64.2z" fill="#8fd3f8"/><path d="M1114.0 64.2 1120.0 60.900000000000006 1120.0 77.10000000000001 1114.0 80.4z" fill="#0a5f98"/><path d="M1099.8 64.2H1114.0V80.4H1099.8zM1099.8 64.2 1105.8 60.900000000000006 1120.0 60.900000000000006 1114.0 64.2zM1114.0 64.2 1120.0 60.900000000000006 1120.0 77.10000000000001 1114.0 80.4z" fill="none" stroke="#000" stroke-width="1.1" stroke-linejoin="round"/><path d="M1106.9 64.2V80.4M1099.8 72.30000000000001H1114.0M1106.9 64.2l6 -3.3M1102.8 62.550000000000004H1117.0V78.75M1114.0 72.30000000000001l6 -3.3" fill="none" stroke="#000" stroke-width=".9"/><path d="M1129.8 64.2H1144.0V80.4H1129.8z" fill="url(#cb1)"/><path d="M1129.8 64.2 1135.8 60.900000000000006 1150.0 60.900000000000006 1144.0 64.2z" fill="#8fd3f8"/><path d="M1144.0 64.2 1150.0 60.900000000000006 1150.0 77.10000000000001 1144.0 80.4z" fill="#0a5f98"/><path d="M1129.8 64.2H1144.0V80.4H1129.8zM1129.8 64.2 1135.8 60.900000000000006 1150.0 60.900000000000006 1144.0 64.2zM1144.0 64.2 1150.0 60.900000000000006 1150.0 77.10000000000001 1144.0 80.4z" fill="none" stroke="#000" stroke-width="1.1" stroke-linejoin="round"/><path d="M1159.8 64.2H1174.0V80.4H1159.8zM1159.8 64.2 1165.8 60.900000000000006 1180.0 60.900000000000006 1174.0 64.2zM1174.0 64.2 1180.0 60.900000000000006 1180.0 77.10000000000001 1174.0 80.4z" fill="none" stroke="#000" stroke-width="1.1" stroke-linejoin="round"/><path d="M1165.8 60.900000000000006V77.10000000000001H1180.0M1165.8 77.10000000000001 1159.8 80.4" fill="none" stroke="#000" stroke-width=".9"/><path d="M1166.9 64.2V80.4M1159.8 72.30000000000001H1174.0M1166.9 64.2l6 -3.3M1162.8 62.550000000000004H1177.0V78.75M1174.0 72.30000000000001l6 -3.3" fill="none" stroke="#000" stroke-width=".9"/><path d="M1172.9 60.900000000000006V77.10000000000001M1165.8 69.00000000000001H1180.0M1161.8 74.30000000000001l4 4m0-4l-4 4M1168.9 74.30000000000001l4 4m0-4l-4 4" fill="none" stroke="#000" stroke-width=".6"/><path d="M1189.8 64.2H1204.0V80.4H1189.8zM1189.8 64.2 1195.8 60.900000000000006 1210.0 60.900000000000006 1204.0 64.2zM1204.0 64.2 1210.0 60.900000000000006 1210.0 77.10000000000001 1204.0 80.4z" fill="none" stroke="#000" stroke-width="1.1" stroke-linejoin="round"/><path d="M1195.8 60.900000000000006V77.10000000000001H1210.0M1195.8 77.10000000000001 1189.8 80.4" fill="none" stroke="#000" stroke-width=".9"/><path d="M1219.8 64.2H1234.0V80.4H1219.8zM1219.8 64.2 1225.8 60.900000000000006 1240.0 60.900000000000006 1234.0 64.2zM1234.0 64.2 1240.0 60.900000000000006 1240.0 77.10000000000001 1234.0 80.4zM1225.8 60.900000000000006V77.10000000000001H1240.0M1225.8 77.10000000000001 1219.8 80.4M1226.9 64.2V80.4M1219.8 72.30000000000001H1234.0" fill="none" stroke="#ee6a6a" stroke-width=".6"/><circle cx="1219.8" cy="64.2" r="1" fill="#e81c1c"/><circle cx="1234.0" cy="64.2" r="1" fill="#e81c1c"/><circle cx="1219.8" cy="80.4" r="1" fill="#e81c1c"/><circle cx="1234.0" cy="80.4" r="1" fill="#e81c1c"/><circle cx="1225.8" cy="60.9" r="1" fill="#e81c1c"/><circle cx="1240.0" cy="60.9" r="1" fill="#e81c1c"/><circle cx="1240.0" cy="77.1" r="1" fill="#e81c1c"/><circle cx="1226.9" cy="64.2" r="1" fill="#e81c1c"/><circle cx="1226.9" cy="80.4" r="1" fill="#e81c1c"/><circle cx="1219.8" cy="72.3" r="1" fill="#e81c1c"/><circle cx="1234.0" cy="72.3" r="1" fill="#e81c1c"/><circle cx="1226.9" cy="72.3" r="1" fill="#e81c1c"/><circle cx="1232.9" cy="60.9" r="1" fill="#e81c1c"/><circle cx="1240.0" cy="69.0" r="1" fill="#e81c1c"/><circle cx="1222.8" cy="62.6" r="1" fill="#e81c1c"/><circle cx="1237.0" cy="62.6" r="1" fill="#e81c1c"/><circle cx="1237.0" cy="78.8" r="1" fill="#e81c1c"/><circle cx="1237.0" cy="70.7" r="1" fill="#e81c1c"/><path d="M1249.8 64.2H1264.0V80.4H1249.8zM1249.8 64.2 1255.8 60.900000000000006 1270.0 60.900000000000006 1264.0 64.2zM1264.0 64.2 1270.0 60.900000000000006 1270.0 77.10000000000001 1264.0 80.4z" fill="#fff" stroke="#000" stroke-width="1.1" stroke-linejoin="round"/><path d="M1256.9 64.2V80.4M1249.8 72.30000000000001H1264.0M1256.9 64.2l6 -3.3M1252.8 62.550000000000004H1267.0V78.75M1264.0 72.30000000000001l6 -3.3" fill="none" stroke="#000" stroke-width=".9"/><path d="M1304.1 60.10000000000001V81.7M1293.3 70.9H1314.8999999999999" stroke="#111" stroke-width="1.9"/><circle cx="1304.1" cy="70.9" r=".9" fill="#eee"/><path d="M1334.1 60.10000000000001V81.7M1323.3 70.9H1344.8999999999999" stroke="#111" stroke-width="1.9"/><circle cx="1334.1" cy="70.9" r=".9" fill="#eee"/><g fill="none" stroke="#1a1a1a" stroke-width="1.15"><path d="M1294.3 92.5C1291.5 98 1292.3 108.5 1298.5 110.6 1304.5 112 1307.5 103 1306 95"/><path d="M1292 110.3C1296 112.3 1300.5 111.3 1303 108.5"/><path d="M1313.3 102.5C1315.3 98 1313.8 92.8 1310.3 90.3"/></g>
<path d="M1293.2 90.6 1298 92.2 1294.4 95.6z M1308 89.2 1313 89.6 1310.6 93.4z" fill="#1a1a1a"/>
<path d="M1303.8 91.2V101.6L1295.7 109.4M1303.8 101.8 1313.6 102.2" stroke="#e22626" stroke-width="2.6" fill="none"/>
<g stroke="#1c1cb8" stroke-width="1.1" fill="none"><path d="M1310.6 103.4v8.8M1306.2 107.8h8.800"/></g><path d="M1310.6 102.2l1.9 2.300h-3.800zM1310.600 113.400l1.900-2.300h-3.800zM1305 107.800l2.300-1.900v3.800zM1316.200 107.800l-2.300-1.900v3.800z" fill="#1c1cb8"/><g fill="none" stroke="#111" stroke-width="1.4"><circle cx="1334.1" cy="100.9" r="5.4"/><path d="M1334.1 92.700V109.300M1325.900 100.900H1342.500"/></g><path d="M1323.300 105.600c2 1.200 3.600 3.200 4.800 5.400M1328.300 105.400c-2.200 1.400-3.900 3.400-4.900 6" stroke="#d62828" stroke-width="1.100" fill="none"/></svg><span style="position:absolute;left:737.90px;top:16px;font-size:10.5px;line-height:12px;font-weight:bold;color:#2222a8;white-space:nowrap;">P</span><span style="position:absolute;left:767.90px;top:16px;font-size:10.5px;line-height:12px;font-weight:bold;color:#2222a8;white-space:nowrap;">E</span>
<svg class="abs" style="left:0;top:490px;overflow:visible" width="130" height="145" viewBox="570 546 130 145"><defs>
<linearGradient id="ct" x1="0" y1="0" x2="1" y2="0.3"><stop offset="0" stop-color="#f4f4f4"/><stop offset="1" stop-color="#c2c2c2"/></linearGradient>
<linearGradient id="cl" x1="0" y1="0" x2=".4" y2="1"><stop offset="0" stop-color="#b9b9b9"/><stop offset="1" stop-color="#8f8f8f"/></linearGradient>
<linearGradient id="cr" x1="0" y1="0" x2="1" y2="1"><stop offset="0" stop-color="#8e8e8e"/><stop offset="1" stop-color="#787878"/></linearGradient>
</defs><path d="M603.2 598.3 632.4 585.2 678.7 598.7 672.7 640.6 646.5 663.7 604.2 643.6z" fill="#999"/><path d="M603.2 598.3 632.4 585.2 678.7 598.7 648.9 616.4z" fill="url(#ct)"/><path d="M603.2 598.3 648.9 616.4 646.5 663.7 604.2 643.6z" fill="url(#cl)"/><path d="M648.9 616.4 678.7 598.7 672.7 640.6 646.5 663.7z" fill="url(#cr)"/><g font-family="Liberation Sans" font-weight="bold" font-style="italic" fill="#262626"><text transform="translate(620,613.5) rotate(83) skewX(-8)" font-size="12" letter-spacing="-.2">Neg X</text><text transform="translate(653.5,642.5) rotate(-36) skewX(-25)" font-size="9" fill="#333" opacity=".8">Pos Z</text><text transform="translate(657.5,594) rotate(196) skewX(28)" font-size="8.5" fill="#333" opacity=".75">Pos Y</text></g><path d="M604 644 601.2 592" stroke="#18c418" stroke-width="2.2" fill="none"/><path d="M600.8 584.8 597.2 594 604.8 593.6z" fill="#18c418"/><path d="M604 644 648.5 667.6" stroke="#1212ee" stroke-width="2.6" fill="none"/><path d="M655 671 645.2 671.6 649.2 663.6z" fill="#1212ee"/><path d="M588.8 560.8 581.6 568.2H584V575.2H593.6V568.2H596z" fill="#000"/><rect x="592.6" y="561.2" width="1.6" height="4" fill="#000"/></svg><span style="position:absolute;left:26.00px;top:506px;font-size:13px;line-height:15px;color:#000;white-space:nowrap;">y</span><span style="position:absolute;left:86.60px;top:606px;font-size:13px;line-height:15px;color:#000;white-space:nowrap;">z</span>
<span style="position:absolute;left:154.40px;top:612px;font-size:13px;line-height:15px;color:#111;white-space:nowrap;">Time 1000.00000 (1000)</span>
</div>
<div class="abs" style="left:1365px;top:56px;width:1px;height:638px;background:#e2e5ea"></div>
<div class="abs" style="left:1328px;top:483px;width:38px;height:39px;background:#0073a9;border-radius:4px 0 0 4px"></div>
<svg class="abs" style="left:1339px;top:495px" width="17" height="14" viewBox="0 0 17 14"><ellipse cx="6.3" cy="5" rx="5.8" ry="4.3" fill="#fff"/><path d="M2.2 7.5 1.2 10.8 5 8.6z" fill="#fff"/><ellipse cx="11.2" cy="8.2" rx="5" ry="3.8" fill="#fff" stroke="#0073a9" stroke-width="1"/><path d="M14 10.8 15.6 13.2 11.5 11.6z" fill="#fff"/></svg>
</body>
</html>
